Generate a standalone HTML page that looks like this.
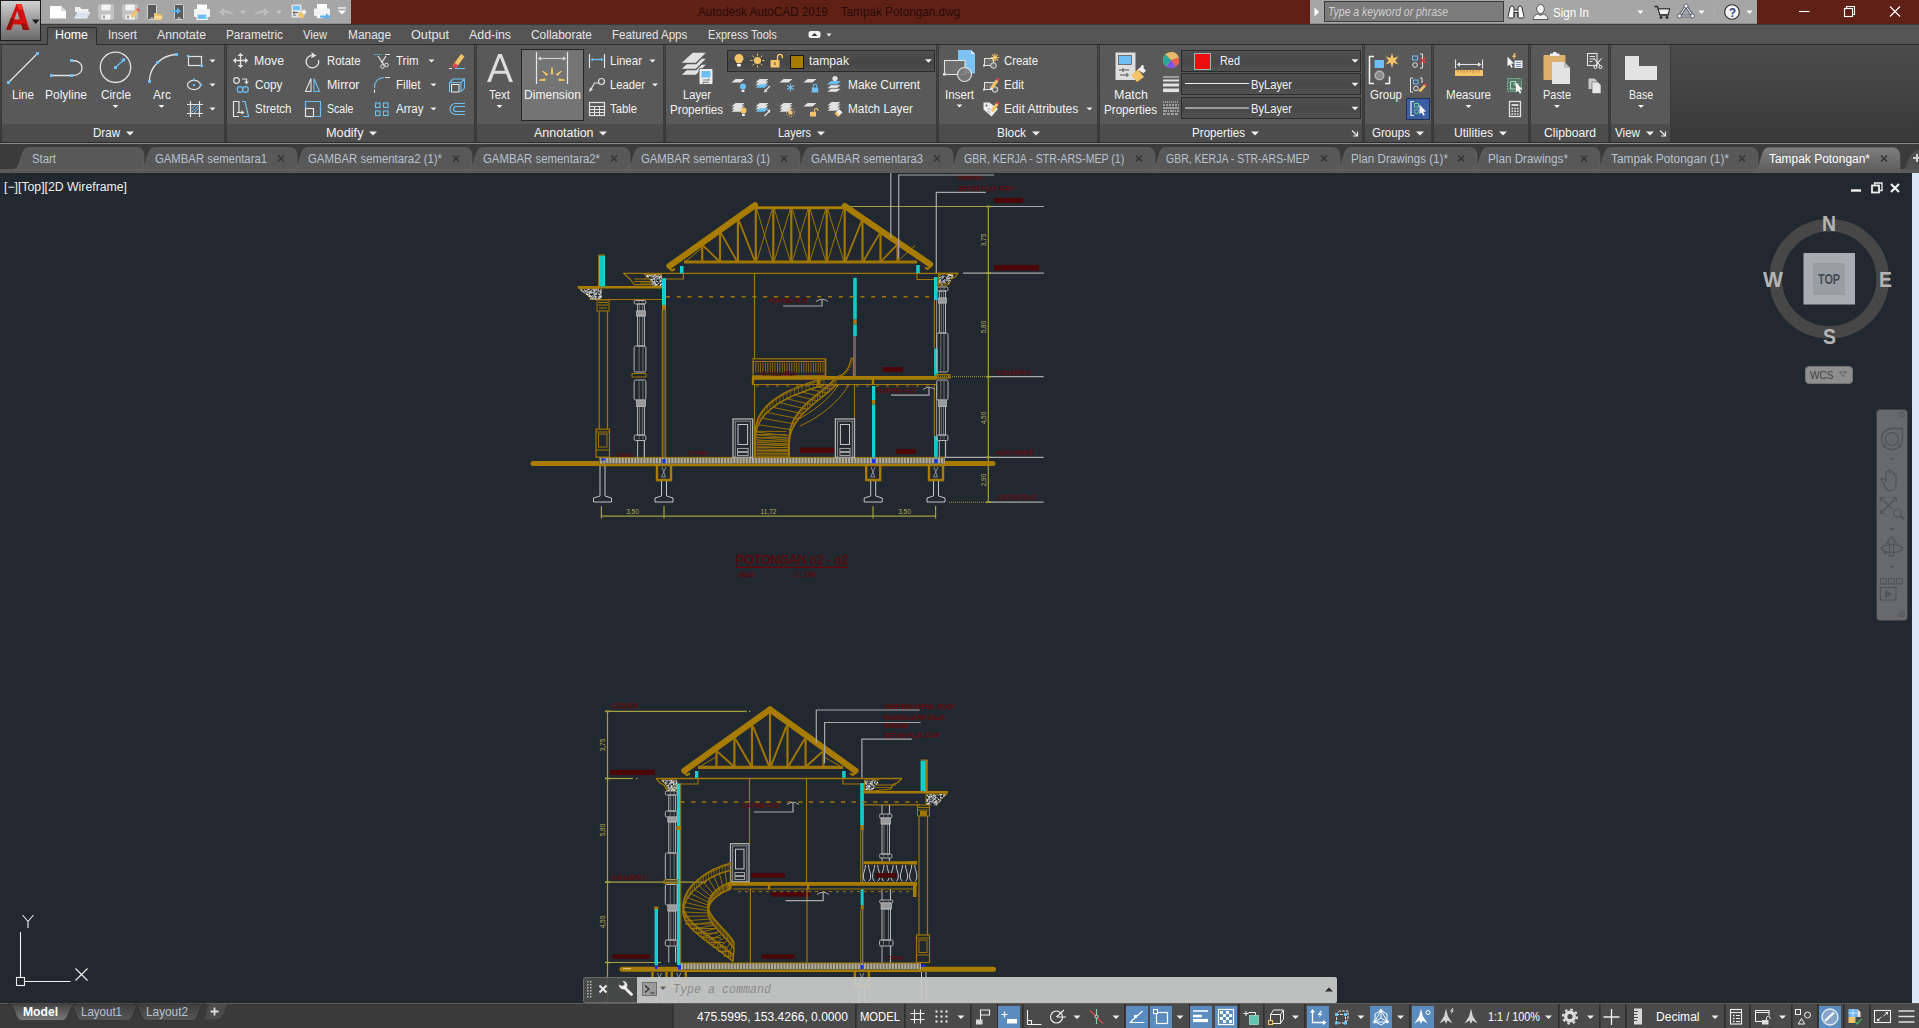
<!DOCTYPE html>
<html lang="en"><head><meta charset="utf-8"><title>Autodesk AutoCAD 2019 - Tampak Potongan.dwg</title>
<style>
html,body{margin:0;padding:0;}
body{width:1919px;height:1028px;overflow:hidden;position:relative;background:#212830;font-family:"Liberation Sans",sans-serif;}
.t{position:absolute;white-space:pre;transform-origin:0 50%;display:block;}

.panel{box-shadow:-1px 0 0 #3a3a3a, 1px 0 0 #3a3a3a;}

</style></head><body>
<div id="titlebar" style="position:absolute;left:0px;top:0px;width:1919px;height:24px;background:#5f2116;">
<div id="qat" style="position:absolute;left:41px;top:0px;width:310px;height:24px;background:#a6a6a6;border-bottom:1px solid #8e8e8e;box-sizing:border-box;">
<svg width="310" height="24" viewBox="41 0 310 24" style="position:absolute;left:0;top:0;overflow:visible">
<path d="M50 6h11l5 5v7.500h-16z" fill="#fdfdfd"/><path d="M61 6v5h5z" fill="#d9d9d9"/>
<path d="M75 7h5l1.500 2h7v3h-13.500z" fill="#f0f0f0"/><path d="M77.500 12h13l-3.500 6.500h-13z" fill="#e8edf6"/><path d="M76 14h13M75 16h13" stroke="#c4cfe6" stroke-width="0.800"/>
<path d="M98 4.500h16v15h-14l-2-2z" fill="#c2c2c2"/><rect x="101.5" y="4.500" width="9" height="6" fill="#f4f4f4"/><rect x="101.5" y="14.500" width="9" height="5" fill="#f4f4f4"/><rect x="103" y="15.500" width="2" height="3" fill="#9a9a9a"/>
<path d="M122 4.500h16v15h-14l-2-2z" fill="#c2c2c2"/><rect x="125.5" y="4.500" width="9" height="6" fill="#f4f4f4"/><rect x="125.5" y="14.500" width="9" height="5" fill="#f4f4f4"/><rect x="127" y="15.500" width="2" height="3" fill="#9a9a9a"/>
<path d="M130 16l6-6.500 2.500 2.300-6 6.500z" fill="#f1c46b"/><path d="M136 9.500l1.500-1.600 2.500 2.300-1.500 1.600z" fill="#e8535a"/><path d="M130 16l-0.800 3.300 3.300-1z" fill="#f4f4f4"/>
<rect x="147.500" y="4.500" width="9" height="15" rx="1" fill="#5a5a5a" stroke="#d0d0d0" stroke-width="1"/><rect x="150.500" y="17.500" width="3" height="1" fill="#eee"/><path d="M154 13h3l1 1.500h4v5h-8z" fill="#f1c46b"/><path d="M155 16h7.500l-1.200 3.500h-7.300z" fill="#f7d893"/>
<rect x="174.500" y="4.500" width="9" height="15" rx="1" fill="#5a5a5a" stroke="#d0d0d0" stroke-width="1"/><rect x="177.500" y="17.500" width="3" height="1" fill="#eee"/><path d="M171 10h6v-2.500l4 3.500-4 3.500v-2.500h-6z" fill="#55b4f0"/>
<rect x="197" y="4.500" width="10" height="5" fill="#fff"/><rect x="194" y="9" width="16" height="8" rx="1" fill="#f4f4f4"/><rect x="197" y="14" width="10" height="5.500" fill="#6cc0f5" stroke="#fff" stroke-width="1"/>
<path d="M218.500 12l5.500-4v2.500c5 0 8.500 1.500 9.500 5-2.500-2-5-2.300-9.500-2.300v2.800z" fill="#bdbdbd"/><path d="M240 10.500h6l-3 3.500z" fill="#c4c4c4"/>
<path d="M269.500 12l-5.500-4v2.500c-5 0-8.500 1.500-9.500 5 2.500-2 5-2.300 9.500-2.300v2.800z" fill="#bdbdbd"/><path d="M276 10.500h6l-3 3.500z" fill="#c4c4c4"/>
<rect x="291.500" y="4.500" width="10" height="13" fill="#e2e2e2"/><rect x="293" y="6" width="7" height="4" fill="#6cc0f5"/><path d="M293 12.500h5M294.500 11.500l-1.500 1 1.500 1M293 15h3" stroke="#444" stroke-width="0.800" fill="none"/><path d="M297.500 14.500l3.500-3 4 4.500-3.500 3z" fill="#f1c46b"/><path d="M301 11.500l2-1.600 1.500-0.500 2 2.500-1 1.500-1.500 1.500z" fill="#f0f0f0"/>
<rect x="317" y="4" width="10" height="5" fill="#fff"/><rect x="314" y="8.500" width="16" height="7.500" rx="1" fill="#f4f4f4"/><rect x="317" y="13.500" width="6" height="4.500" fill="#fff" stroke="#e0e0e0" stroke-width="0.500"/><path d="M320 15.500h6v-2.500l4.500 3.500-4.500 3.500v-2.500h-6z" fill="#55b4f0"/>
<path d="M338 8h8" stroke="#fff" stroke-width="1.200"/><path d="M338 10.500h8l-4 4z" fill="#fff"/>
</svg>
</div>
<div id="infocenter" style="position:absolute;left:1310px;top:0px;width:447px;height:24px;background:#a6a6a6;border-bottom:1px solid #8e8e8e;box-sizing:border-box;">
<div class="" style="position:absolute;left:14px;top:1px;width:180px;height:21px;background:#7b7b7b;border:1px solid #3c3c3c;box-sizing:border-box;"></div>
<svg width="447" height="24" viewBox="1310 0 447 24" style="position:absolute;left:0;top:0;overflow:visible">
<path d="M1314.500 7.500l4.500 4.500-4.500 4.500z" fill="#fff"/>
<path d="M1510 8a2 2 0 0 1 4 0v2h4v-2a2 2 0 0 1 4 0l2 8.500a1 1 0 0 1-1 1.500h-4a1 1 0 0 1-1-1v-4.500h-4v4.500a1 1 0 0 1-1 1h-4a1 1 0 0 1-1-1.500z" fill="#fafafa" stroke="#1e1e1e" stroke-width="0.900"/><path d="M1514 10v7M1518 10v7" stroke="#1e1e1e" stroke-width="0.700"/>
<path d="M1540.500 4.500a3.800 4.500 0 0 1 0 9a3.800 4.500 0 0 1 0-9zM1533 19.500c0-3.500 3-5 5-5.500l2.500 1.500 2.500-1.500c2 0.500 5 2 5 5.500z" fill="#f4f4f4" stroke="#3a3a3a" stroke-width="0.800"/>
<path d="M1637.5 10.5h6l-3 3.500z" fill="#fff"/>
<path d="M1698.5 10.5h6l-3 3.500z" fill="#fff"/>
<path d="M1746.5 10.5h6l-3 3.500z" fill="#fff"/>
<path d="M1654.500 6.500h3l2.500 8.500h8l1.500-6h-11" fill="none" stroke="#2a2a2a" stroke-width="1.300"/><path d="M1659 9.500h10l-1.300 4.500h-7.500z" fill="#f0f0f0"/><circle cx="1661" cy="17.500" r="1.400" fill="#2a2a2a"/><circle cx="1667" cy="17.500" r="1.400" fill="#2a2a2a"/>
<path d="M1686 6l6.500 10h-13z" fill="none" stroke="#3a3f55" stroke-width="2.600" stroke-linejoin="round"/><path d="M1686 6l6.500 10h-13z" fill="none" stroke="#f2f2f2" stroke-width="1.200" stroke-linejoin="round"/><circle cx="1686" cy="6" r="2" fill="#f4f4f4" stroke="#3a3f55" stroke-width="0.700"/><circle cx="1679.500" cy="16" r="2" fill="#f4f4f4" stroke="#3a3f55" stroke-width="0.700"/><circle cx="1692.500" cy="16" r="2" fill="#f4f4f4" stroke="#3a3f55" stroke-width="0.700"/>
<path d="M1714.500 5v14" stroke="#b8b8b8" stroke-width="1" stroke-dasharray="1 2"/>
<circle cx="1732" cy="12" r="7.300" fill="#f6f6f6" stroke="#2a2a2a" stroke-width="1.100"/>
</svg>
<span class="t " style="left:18px;top:5.00px;font-size:12px;line-height:15px;color:#cfcfcf;font-style:italic;transform:scaleX(0.8706);">Type a keyword or phrase</span>
<span class="t " style="left:243px;top:6.00px;font-size:12px;line-height:15px;color:#ffffff;transform:scaleX(0.9636);">Sign In</span>
<span class="t " style="left:418.5px;top:5.00px;font-size:13px;line-height:16px;color:#2b3b86;font-weight:700;transform:scaleX(0.8815);">?</span>
</div>
<div id="winctl" style="position:absolute;left:1757px;top:0px;width:162px;height:24px;">
<svg width="162" height="24" viewBox="1757 0 162 24" style="position:absolute;left:0;top:0;overflow:visible">
<path d="M1799 11.500h10.500" stroke="#fff" stroke-width="1.100"/><rect x="1844.500" y="8.500" width="8" height="8" fill="none" stroke="#fff" stroke-width="1.100"/><path d="M1846.500 8.500v-2h8v8h-2" fill="none" stroke="#fff" stroke-width="1.100"/><path d="M1890 6.500l10 10m0-10l-10 10" stroke="#fff" stroke-width="1.100"/>
</svg>
</div>
<span class="t " style="left:698px;top:5.00px;font-size:12px;line-height:15px;color:#2a0b07;transform:scaleX(0.9783);">Autodesk AutoCAD 2019    Tampak Potongan.dwg</span>
</div>
<div id="menubar" style="position:absolute;left:0px;top:24px;width:1919px;height:21px;background:#545454;">
<div class="" style="position:absolute;left:0px;top:0px;width:1919px;height:1px;background:#3a3a3a;"></div>
<div class="" style="position:absolute;left:0px;top:20px;width:1919px;height:1px;background:#2c2c2c;"></div>
<div class="tab-home" style="position:absolute;left:47px;top:3px;width:50px;height:18px;background:linear-gradient(#505050,#5a5a5a);border:1px solid #2c2c2c;border-bottom:none;box-sizing:border-box;border-radius:2px 2px 0 0;"></div>
<svg width="1919" height="21" viewBox="0 24 1919 21" style="position:absolute;left:0;top:0;overflow:visible">
<rect x="808.500" y="31" width="12" height="7" rx="2.500" fill="#f4f4f4"/><path d="M811.500 36h6l-3-3z" fill="#333"/><path d="M826.500 33.500h5l-2.500 3z" fill="#eee"/>
</svg>
<span class="t " style="left:55px;top:4.00px;font-size:12px;line-height:15px;color:#ffffff;transform:scaleX(1.0309);">Home</span>
<span class="t " style="left:108px;top:4.00px;font-size:12px;line-height:15px;color:#e4e4e4;transform:scaleX(0.9663);">Insert</span>
<span class="t " style="left:157px;top:4.00px;font-size:12px;line-height:15px;color:#e4e4e4;transform:scaleX(1.0200);">Annotate</span>
<span class="t " style="left:226px;top:4.00px;font-size:12px;line-height:15px;color:#e4e4e4;transform:scaleX(0.9825);">Parametric</span>
<span class="t " style="left:303px;top:4.00px;font-size:12px;line-height:15px;color:#e4e4e4;transform:scaleX(0.9305);">View</span>
<span class="t " style="left:348px;top:4.00px;font-size:12px;line-height:15px;color:#e4e4e4;transform:scaleX(0.9916);">Manage</span>
<span class="t " style="left:411px;top:4.00px;font-size:12px;line-height:15px;color:#e4e4e4;transform:scaleX(1.0549);">Output</span>
<span class="t " style="left:469px;top:4.00px;font-size:12px;line-height:15px;color:#e4e4e4;transform:scaleX(1.0323);">Add-ins</span>
<span class="t " style="left:531px;top:4.00px;font-size:12px;line-height:15px;color:#e4e4e4;transform:scaleX(0.9940);">Collaborate</span>
<span class="t " style="left:612px;top:4.00px;font-size:12px;line-height:15px;color:#e4e4e4;transform:scaleX(0.9655);">Featured Apps</span>
<span class="t " style="left:708px;top:4.00px;font-size:12px;line-height:15px;color:#e4e4e4;transform:scaleX(0.9238);">Express Tools</span>
</div>
<div id="appbtn" style="position:absolute;left:0px;top:0px;width:41px;height:41px;background:linear-gradient(#d0d0d0,#a0a0a0 45%,#6a6a6a);border:1px solid #1e1e1e;box-sizing:border-box;">
<svg width="41" height="41" viewBox="0 0 41 41" style="position:absolute;left:0;top:0;overflow:visible">
<path d="M5 29L15.500 3h5L28.500 29h-6.500l-1.800-5.500h-8l-2 5.500zM13.300 18.500h5.500l-2.600-8.500z" fill="#d31010"/><path d="M5 29l5-12.500 3 1.500-3.800 11zM22 29l-1.800-5.500 4-1 4.300 6.500z" fill="#8e1410"/><path d="M15.500 3h5l1.800 5-3.800 1-1.500-2.500z" fill="#f0352a"/>
<path d="M31 18.500h7.500l-3.750 4.500z" fill="#1a1a1a"/>
</svg>
</div>
<div id="ribbon" style="position:absolute;left:0px;top:45px;width:1919px;height:99px;background:linear-gradient(#4b4b4b,#383838);border-bottom:1px solid #8a8a8a;box-sizing:border-box;">
<div class="" style="position:absolute;left:0px;top:96.5px;width:1919px;height:1.5px;background:#2a2a2a;"></div>
<div id="panel-draw" class="panel" style="position:absolute;left:2px;top:0px;width:222px;height:97px;background:#595959;">
<div class="ptitle" style="position:absolute;left:0px;top:79px;width:222px;height:18px;background:#4c4c4c;"></div>
<svg width="222" height="97" viewBox="2 45 222 97" style="position:absolute;left:0;top:0;overflow:visible">
<path d="M126 131.5h8l-4 4z" fill="#f0f0f0"/>
<path d="M112.5 105.0h6l-3 3z" fill="#f0f0f0"/>
<path d="M158.5 105.0h6l-3 3z" fill="#f0f0f0"/>
<path d="M9.5 81.5L37 54" stroke="#e2e2e2" stroke-width="1.3" fill="none"/>
<rect x="7.0" y="81.0" width="3" height="3" fill="#6cc0f5"/>
<rect x="36.0" y="52.0" width="3" height="3" fill="#6cc0f5"/>
<path d="M52 75.5H71 M72 60.5 C79 60.5 82 64 82 68 C82 72 79 75.5 72 75.5" stroke="#e2e2e2" stroke-width="1.3" fill="none"/>
<rect x="50.0" y="74.0" width="3" height="3" fill="#6cc0f5"/>
<rect x="70.0" y="74.0" width="3" height="3" fill="#6cc0f5"/>
<rect x="70.0" y="59.0" width="3" height="3" fill="#6cc0f5"/>
<circle cx="115.5" cy="67.3" r="15.2" stroke="#e2e2e2" stroke-width="1.3" fill="none"/><path d="M116 67L124 59.5" stroke="#6cc0f5" stroke-width="1.3"/><path d="M125.5 58l-4.5 1 3.5 3.5z" fill="#6cc0f5"/>
<rect x="114.0" y="66.0" width="3" height="3" fill="#6cc0f5"/>
<path d="M149.5 80 C150 68 160 56 175 54.5" stroke="#e2e2e2" stroke-width="1.3" fill="none"/>
<rect x="148.0" y="80.0" width="3" height="3" fill="#6cc0f5"/>
<rect x="156.0" y="61.0" width="3" height="3" fill="#6cc0f5"/>
<rect x="175.0" y="53.0" width="3" height="3" fill="#6cc0f5"/>
<rect x="188.5" y="56.5" width="13" height="9" stroke="#e2e2e2" stroke-width="1.2" fill="none"/>
<rect x="186.8" y="54.8" width="2.4" height="2.4" fill="#6cc0f5"/>
<rect x="200.8" y="64.8" width="2.4" height="2.4" fill="#6cc0f5"/>
<path d="M209.5 59.5h6l-3 3z" fill="#f0f0f0"/>
<ellipse cx="194" cy="85" rx="6.5" ry="4.6" stroke="#e2e2e2" stroke-width="1.2" fill="none"/>
<rect x="193.0" y="84.0" width="2" height="2" fill="#6cc0f5"/>
<rect x="193.0" y="78.5" width="2" height="2" fill="#6cc0f5"/>
<rect x="200.0" y="84.0" width="2" height="2" fill="#6cc0f5"/>
<path d="M209.5 83.5h6l-3 3z" fill="#f0f0f0"/>
<path d="M187 104.5h16M187 113.5h16M190.5 101v16M199.5 101v16" stroke="#e2e2e2" stroke-width="1.2"/><path d="M191.5 109l4-4M191.5 112.5l7-7M194 113l5-5" stroke="#6cc0f5" stroke-width="1"/>
<path d="M209.5 107.5h6l-3 3z" fill="#f0f0f0"/>
</svg>
<span class="t " style="left:91px;top:81.00px;font-size:12px;line-height:15px;color:#f4f4f4;transform:scaleX(0.9642);">Draw</span>
<span class="t " style="left:10px;top:43.00px;font-size:12px;line-height:15px;color:#f2f2f2;transform:scaleX(0.9697);">Line</span>
<span class="t " style="left:43px;top:43.00px;font-size:12px;line-height:15px;color:#f2f2f2;transform:scaleX(0.9994);">Polyline</span>
<span class="t " style="left:99px;top:43.00px;font-size:12px;line-height:15px;color:#f2f2f2;transform:scaleX(0.9782);">Circle</span>
<span class="t " style="left:151px;top:43.00px;font-size:12px;line-height:15px;color:#f2f2f2;transform:scaleX(1.0000);">Arc</span>
</div>
<div id="panel-modify" class="panel" style="position:absolute;left:227px;top:0px;width:247px;height:97px;background:#595959;">
<div class="ptitle" style="position:absolute;left:0px;top:79px;width:247px;height:18px;background:#4c4c4c;"></div>
<svg width="247" height="97" viewBox="227 45 247 97" style="position:absolute;left:0;top:0;overflow:visible">
<path d="M369 131.5h8l-4 4z" fill="#f0f0f0"/>
<path d="M428.5 59.5h6l-3 3z" fill="#f0f0f0"/>
<path d="M430.5 83.5h6l-3 3z" fill="#f0f0f0"/>
<path d="M430.5 107.5h6l-3 3z" fill="#f0f0f0"/>
<path d="M233.5 60.5h14M240.5 53.5v14" stroke="#e2e2e2" stroke-width="1.3"/><path d="M233 60.5l3-3v6zM248 60.5l-3-3v6zM240.500 53l-3 3h6zM240.5 68l-3-3h6z" fill="#e2e2e2"/>
<circle cx="236.500" cy="80.500" r="2.800" stroke="#e2e2e2" stroke-width="1.2" fill="none"/><path d="M242 79h4.500v3" stroke="#e2e2e2" stroke-width="1.2" fill="none"/><path d="M246.500 84.500l-2.300-3h4.600z" fill="#e2e2e2"/><circle cx="240" cy="89.500" r="2.800" stroke="#6cc0f5" stroke-width="1.200" fill="none"/><circle cx="245.500" cy="89.500" r="2.800" stroke="#6cc0f5" stroke-width="1.200" fill="none"/>
<path d="M239 116.500h-5.500v-15h5.500v11" stroke="#e2e2e2" stroke-width="1.200" fill="none"/><path d="M242 101.500h3l3.500 15h-6" stroke="#6cc0f5" stroke-width="1.200" fill="none"/><path d="M237 112.500h5" stroke="#e2e2e2" stroke-width="1.200"/><path d="M244.500 112.500l-3-2.300v4.600z" fill="#e2e2e2"/>
<path d="M318.500 60 A6.300 6.300 0 1 1 311.500 55.300" stroke="#e2e2e2" stroke-width="1.300" fill="none"/><path d="M316.500 55.500l-5-3.200v6z" fill="#e2e2e2"/>
<path d="M311 78.500v13h-5.500z" stroke="#e2e2e2" stroke-width="1.100" fill="none"/><path d="M314 78.500v13h5.500z" stroke="#6cc0f5" stroke-width="1.100" fill="none"/>
<path d="M305.500 108v-6.500h15v15h-6" stroke="#6cc0f5" stroke-width="1.200" fill="none"/><rect x="305.500" y="108.500" width="8" height="8" stroke="#e2e2e2" stroke-width="1.200" fill="none"/>
<path d="M374 54.500h8" stroke="#6cc0f5" stroke-width="1" stroke-dasharray="1.500 1"/><path d="M385 54.500h5" stroke="#e2e2e2" stroke-width="1"/><path d="M378 56l6 9M386 56l-4.500 7" stroke="#e2e2e2" stroke-width="1.300"/><circle cx="382.500" cy="66.500" r="1.800" stroke="#e2e2e2" stroke-width="1" fill="none"/><circle cx="386.500" cy="65" r="1.800" stroke="#e2e2e2" stroke-width="1" fill="none"/>
<path d="M374.500 88 C374.500 82 378 78 384 77.500" stroke="#6cc0f5" stroke-width="1.200" fill="none"/><path d="M374.500 89.500v3.500M385 77.500h5" stroke="#e2e2e2" stroke-width="1.100"/>
<rect x="375.5" y="103" width="4.500" height="4.500" stroke="#6cc0f5" stroke-width="1.100" fill="none"/>
<rect x="383.5" y="103" width="4.500" height="4.500" stroke="#6cc0f5" stroke-width="1.100" fill="none"/>
<rect x="375.5" y="111" width="4.500" height="4.500" stroke="#6cc0f5" stroke-width="1.100" fill="none"/>
<rect x="383.5" y="111" width="4.500" height="4.500" stroke="#6cc0f5" stroke-width="1.100" fill="none"/>
<path d="M453 65l8-11 3.500 2.500-8 11z" fill="#f5c469"/><path d="M452 66.500l3-3.500 3 2.300-2.500 3.500z" fill="#e0424a"/><path d="M449 68.500h3" stroke="#e2e2e2" stroke-width="1"/><path d="M455 68.500h10" stroke="#6cc0f5" stroke-width="1"/>
<path d="M449.500 82.500l3.500-3.500h11.500v9l-3.500 4M449.500 82.500h11.500l3.500-3.500M461 82.500v9.500M449.500 82.500v9.500" stroke="#6cc0f5" stroke-width="1.100" fill="none"/><rect x="451.500" y="84.500" width="7.500" height="7.500" stroke="#e2e2e2" stroke-width="1.100" fill="none"/>
<path d="M465 103.500h-9.500a5.500 5.500 0 0 0 0 11h9.500" stroke="#6cc0f5" stroke-width="1.200" fill="none"/><path d="M465 106.500h-9a2.500 2.500 0 0 0 0 5h9" stroke="#6cc0f5" stroke-width="1.200" fill="none"/>
</svg>
<span class="t " style="left:98.5px;top:81.00px;font-size:12px;line-height:15px;color:#f4f4f4;transform:scaleX(1.0610);">Modify</span>
<span class="t " style="left:27px;top:9.00px;font-size:12px;line-height:15px;color:#f2f2f2;transform:scaleX(1.0224);">Move</span>
<span class="t " style="left:99.5px;top:9.00px;font-size:12px;line-height:15px;color:#f2f2f2;transform:scaleX(0.9475);">Rotate</span>
<span class="t " style="left:168.5px;top:9.00px;font-size:12px;line-height:15px;color:#f2f2f2;transform:scaleX(0.9557);">Trim</span>
<span class="t " style="left:27.5px;top:33.00px;font-size:12px;line-height:15px;color:#f2f2f2;transform:scaleX(0.9817);">Copy</span>
<span class="t " style="left:99.5px;top:33.00px;font-size:12px;line-height:15px;color:#f2f2f2;transform:scaleX(1.0375);">Mirror</span>
<span class="t " style="left:168.5px;top:33.00px;font-size:12px;line-height:15px;color:#f2f2f2;transform:scaleX(0.9670);">Fillet</span>
<span class="t " style="left:27.5px;top:57.00px;font-size:12px;line-height:15px;color:#f2f2f2;transform:scaleX(0.9601);">Stretch</span>
<span class="t " style="left:99.5px;top:57.00px;font-size:12px;line-height:15px;color:#f2f2f2;transform:scaleX(0.8828);">Scale</span>
<span class="t " style="left:168.5px;top:57.00px;font-size:12px;line-height:15px;color:#f2f2f2;transform:scaleX(0.9592);">Array</span>
</div>
<div id="panel-annotation" class="panel" style="position:absolute;left:477px;top:0px;width:186px;height:97px;background:#595959;">
<div class="ptitle" style="position:absolute;left:0px;top:79px;width:186px;height:18px;background:#4c4c4c;"></div>
<div class="" style="position:absolute;left:44px;top:4px;width:63px;height:72px;background:#747474;border:1px solid #262626;box-sizing:border-box;"></div>
<svg width="186" height="97" viewBox="477 45 186 97" style="position:absolute;left:0;top:0;overflow:visible">
<path d="M599 131.5h8l-4 4z" fill="#f0f0f0"/>
<path d="M496.5 105.0h6l-3 3z" fill="#f0f0f0"/>
<path d="M649.5 59.5h6l-3 3z" fill="#f0f0f0"/>
<path d="M652 83.5h6l-3 3z" fill="#f0f0f0"/>
<path d="M487 82L498.200 54h3.600L513 82h-3.800l-3.100-8.200h-12.200L490.800 82zM495 70.800h10L500 57.500z" fill="#dcdcdc"/>
<path d="M536.500 52v32M567.500 52v32" stroke="#e6e6e6" stroke-width="1.200"/><path d="M539 58.500h26" stroke="#cfcfcf" stroke-width="1.100"/><path d="M537.500 58.500l3.500-2.200v4.400zM566.500 58.500l-3.500-2.200v4.400z" fill="#cfcfcf"/>
<path d="M551.200 74l0.800-6.500 0.800 6.500zM546.500 75.500l-3.800-4.200 5 3zM557.500 75.500l3.800-4.200-5 3zM545 80.500l-5.500-0.400 5.500-1.200zM559 80.500l5.500-0.400-5.500-1.200z" fill="#f7c667" stroke="#f7c667" stroke-width="1"/>
<path d="M589.500 54v14M604.500 54v14" stroke="#e2e2e2" stroke-width="1.200"/><path d="M591 59.500h12" stroke="#6cc0f5" stroke-width="1.200"/><path d="M590.500 59.500l2.500-1.800v3.600zM603.500 59.500l-2.500-1.800v3.600z" fill="#6cc0f5"/>
<circle cx="601.500" cy="81.500" r="3" stroke="#e2e2e2" stroke-width="1.200" fill="none"/><path d="M598.500 83h-4l-4 7" stroke="#e2e2e2" stroke-width="1.200" fill="none"/><path d="M589 92l1-4.500 3 2z" fill="#e2e2e2"/>
<rect x="589.500" y="102.500" width="15" height="13" stroke="#e2e2e2" stroke-width="1.200" fill="none"/><path d="M589.500 106.500h15M589.500 109.500h15M589.500 112.500h15M594.500 106.500v9M599.500 106.500v9" stroke="#e2e2e2" stroke-width="1"/>
</svg>
<span class="t " style="left:56.5px;top:81.00px;font-size:12px;line-height:15px;color:#f4f4f4;transform:scaleX(1.0369);">Annotation</span>
<span class="t " style="left:12px;top:43.00px;font-size:12px;line-height:15px;color:#f2f2f2;transform:scaleX(0.9542);">Text</span>
<span class="t " style="left:47px;top:43.00px;font-size:12px;line-height:15px;color:#f2f2f2;transform:scaleX(1.0055);">Dimension</span>
<span class="t " style="left:133px;top:9.00px;font-size:12px;line-height:15px;color:#f2f2f2;transform:scaleX(0.9593);">Linear</span>
<span class="t " style="left:133px;top:33.00px;font-size:12px;line-height:15px;color:#f2f2f2;transform:scaleX(0.9367);">Leader</span>
<span class="t " style="left:133px;top:57.00px;font-size:12px;line-height:15px;color:#f2f2f2;transform:scaleX(0.9412);">Table</span>
</div>
<div id="panel-layers" class="panel" style="position:absolute;left:666px;top:0px;width:270px;height:97px;background:#595959;">
<div class="ptitle" style="position:absolute;left:0px;top:79px;width:270px;height:18px;background:#4c4c4c;"></div>
<div class="" style="position:absolute;left:61px;top:5px;width:208px;height:22px;background:linear-gradient(#4f4f4f,#454545 60%,#505050);border:1px solid #2b2b2b;box-sizing:border-box;"></div>
<svg width="270" height="97" viewBox="666 45 270 97" style="position:absolute;left:0;top:0;overflow:visible">
<path d="M817 131.5h8l-4 4z" fill="#f0f0f0"/>
<path d="M925.0 59.25h7.0l-3.5 3.5z" fill="#f0f0f0"/>
<path d="M692.500 64h15l-11.500 11.500h-16z" fill="#e2e2e2" stroke="#595959" stroke-width="1.400"/>
<path d="M692.500 58h15l-11.500 11.500h-16z" fill="#e2e2e2" stroke="#595959" stroke-width="1.400"/>
<path d="M692.500 52h15l-11.500 11.500h-16z" fill="#e2e2e2" stroke="#595959" stroke-width="1.400"/>
<rect x="699" y="68.500" width="14" height="16" rx="1.500" fill="#ededed" stroke="#595959" stroke-width="1"/><rect x="701.500" y="71" width="9" height="6.500" fill="#6cc0f5"/><path d="M703 80h6.500M709.500 80l-1.500-1.300M702.500 82.300h6.500M702.500 82.300l1.500 1.300" stroke="#555" stroke-width="0.800" fill="none"/>
<path d="M734.500 58.500a4.500 4.500 0 1 1 9 0c0 2-1.500 2.800-2 4.500h-5c-0.500-1.700-2-2.500-2-4.500z" fill="#f5c469"/><rect x="737" y="63.800" width="4" height="2.700" rx="1" fill="#f2f2f2"/>
<circle cx="757.500" cy="60.500" r="3.600" fill="#f5c469"/><path d="M757.500 53.500v2.200M757.500 65.300v2.200M750.500 60.500h2.200M762.300 60.500h2.200M752.600 55.600l1.600 1.600M760.800 63.800l1.600 1.600M752.600 65.400l1.600-1.600M760.800 57.200l1.600-1.600" stroke="#f5c469" stroke-width="1"/>
<rect x="770.500" y="60" width="9" height="7.500" fill="#f5c469"/><path d="M777.500 60v-3.200a2.400 2.400 0 0 1 4.800 0v1.500" stroke="#f5c469" stroke-width="1.400" fill="none"/><rect x="774.300" y="62.300" width="1.200" height="2.800" fill="#595959"/>
<rect x="790.500" y="55.500" width="13" height="13" fill="#a67c00" stroke="#141414" stroke-width="1"/>
<path d="M735.5 79.0h9l-4 3.600h-9z" fill="#e2e2e2"/>
<circle cx="743" cy="86.500" r="3" fill="#6cc0f5"/><rect x="741.600" y="89.800" width="2.800" height="2.200" fill="#f0f0f0"/>
<path d="M759.5 79.0h9l-4 3.600h-9z" fill="#e2e2e2"/>
<path d="M759.5 81.6h9l-4 3.600h-9z" fill="#e2e2e2"/>
<path d="M759.5 84.2h9l-4 3.600h-9z" fill="#6cc0f5"/>
<path d="M770 86l-5 5" stroke="#e2e2e2" stroke-width="1.200"/><path d="M764 92.500l0.800-3.500 2.700 2.700z" fill="#e2e2e2"/>
<path d="M783.5 79.0h9l-4 3.600h-9z" fill="#e2e2e2"/>
<path d="M790.500 83.500v8M787 85.500l7 4M794 85.500l-7 4" stroke="#6cc0f5" stroke-width="1.200"/>
<path d="M807.5 79.0h9l-4 3.600h-9z" fill="#e2e2e2"/>
<rect x="811.800" y="87.500" width="6.400" height="5" fill="#6cc0f5"/><path d="M813.300 87.500v-1.500a1.700 1.700 0 0 1 3.400 0v1.500" stroke="#6cc0f5" stroke-width="1.100" fill="none"/>
<circle cx="835" cy="78.500" r="2.600" fill="#e2e2e2"/><path d="M831 81h10l-4 3.600h-10z" fill="#6cc0f5"/><path d="M831 84.800h10l-4 3.600h-10zM831 88.400h10l-4 3.600h-10z" fill="#e2e2e2" stroke="#595959" stroke-width="0.500"/>
<path d="M735.5 103.0h9l-4 3.600h-9z" fill="#e2e2e2"/>
<path d="M735.5 105.6h9l-4 3.600h-9z" fill="#e2e2e2"/>
<path d="M735.5 108.2h9l-4 3.600h-9z" fill="#e2e2e2"/>
<circle cx="743.500" cy="110.500" r="3" fill="#f5c469"/><rect x="742" y="113.800" width="2.800" height="2.200" fill="#f0f0f0"/>
<path d="M759.5 103.0h9l-4 3.600h-9z" fill="#e2e2e2"/>
<path d="M759.5 105.6h9l-4 3.600h-9z" fill="#e2e2e2"/>
<path d="M759.5 108.2h9l-4 3.600h-9z" fill="#6cc0f5"/>
<path d="M764.500 116l5-5" stroke="#e2e2e2" stroke-width="1.200"/><path d="M770.500 109.500l-0.800 3.500-2.700-2.700z" fill="#e2e2e2"/>
<path d="M783.5 103.0h9l-4 3.600h-9z" fill="#e2e2e2"/>
<path d="M783.5 105.6h9l-4 3.600h-9z" fill="#e2e2e2"/>
<path d="M783.5 108.2h9l-4 3.600h-9z" fill="#e2e2e2"/>
<circle cx="790.500" cy="112.500" r="2.200" fill="#f5c469"/><circle cx="790.500" cy="112.500" r="4" stroke="#f5c469" stroke-width="1" stroke-dasharray="1 1.300" fill="none"/>
<path d="M807.5 103.0h9l-4 3.600h-9z" fill="#e2e2e2"/>
<rect x="810" y="111.800" width="6" height="4.700" fill="#f5c469"/><path d="M814.500 111.800v-1.600a1.700 1.700 0 0 1 3.400 0v0.800" stroke="#f5c469" stroke-width="1.100" fill="none"/>
<path d="M831.5 102.0h9l-4 3.600h-9z" fill="#e2e2e2"/>
<path d="M831.5 104.6h9l-4 3.600h-9z" fill="#e2e2e2"/>
<path d="M831.5 107.2h9l-4 3.600h-9z" fill="#e2e2e2"/>
<path d="M836 112l3-3 3.500 3.500-3 3z" fill="#f2f2f2"/><path d="M834.500 113.500l1.800-1.800 3.500 3.500-1.800 1.800z" fill="#f5c469"/>
</svg>
<span class="t " style="left:112px;top:81.00px;font-size:12px;line-height:15px;color:#f4f4f4;transform:scaleX(0.9162);">Layers</span>
<span class="t " style="left:17px;top:43.00px;font-size:12px;line-height:15px;color:#f2f2f2;transform:scaleX(0.9328);">Layer</span>
<span class="t " style="left:4px;top:58.00px;font-size:12px;line-height:15px;color:#f2f2f2;transform:scaleX(0.9691);">Properties</span>
<span class="t " style="left:143px;top:9.00px;font-size:12px;line-height:15px;color:#f2f2f2;transform:scaleX(1.0165);">tampak</span>
<span class="t " style="left:182px;top:33.00px;font-size:12px;line-height:15px;color:#f2f2f2;transform:scaleX(0.9905);">Make Current</span>
<span class="t " style="left:182px;top:57.00px;font-size:12px;line-height:15px;color:#f2f2f2;transform:scaleX(0.9844);">Match Layer</span>
</div>
<div id="panel-block" class="panel" style="position:absolute;left:939px;top:0px;width:158px;height:97px;background:#595959;">
<div class="ptitle" style="position:absolute;left:0px;top:79px;width:158px;height:18px;background:#4c4c4c;"></div>
<svg width="158" height="97" viewBox="939 45 158 97" style="position:absolute;left:0;top:0;overflow:visible">
<path d="M1032 131.5h8l-4 4z" fill="#f0f0f0"/>
<path d="M956.5 104.5h6l-3 3z" fill="#f0f0f0"/>
<path d="M1086.5 107.5h6l-3 3z" fill="#f0f0f0"/>
<path d="M958 50h13l4 4v19.500h-17z" fill="#7cc4f4"/><path d="M971 50v4h4z" fill="#d8ecfa"/>
<rect x="944.500" y="60.500" width="20.500" height="14" fill="#6e6e6e" stroke="#e2e2e2" stroke-width="1.100"/><circle cx="964.500" cy="74.500" r="7" fill="#7a7a7a" fill-opacity="0.850" stroke="#e2e2e2" stroke-width="1.100"/><rect x="943" y="73" width="2.600" height="2.600" fill="#e2e2e2"/>
<rect x="984.500" y="58.500" width="9" height="7" fill="#6e6e6e" stroke="#e2e2e2" stroke-width="1"/><circle cx="993.500" cy="65.500" r="2.800" fill="#6e6e6e" stroke="#e2e2e2" stroke-width="1"/><rect x="983" y="64.500" width="2" height="2" fill="#e2e2e2"/>
<path d="M995 53.500v8M991 57.500h8M992.200 54.700l5.600 5.600M997.800 54.700l-5.600 5.600" stroke="#f5c469" stroke-width="1.100"/>
<rect x="984.500" y="82.500" width="9" height="7" fill="#6e6e6e" stroke="#e2e2e2" stroke-width="1"/><circle cx="995" cy="89.500" r="2.800" fill="#6e6e6e" stroke="#e2e2e2" stroke-width="1"/><rect x="983" y="88.500" width="2" height="2" fill="#e2e2e2"/>
<path d="M990.500 87l5.500-7.500 2.500 1.800-5.500 7.500z" fill="#f5c469"/><path d="M996 79.500l1.200-1.700 2.500 1.800-1.200 1.700z" fill="#e0424a"/><path d="M990.500 87l-0.500 3 3-1.200z" fill="#f0f0f0"/>
<path d="M983.500 102.500h6l8.500 6.500-6.500 7.500-8-7z" fill="#ececec"/><circle cx="986.500" cy="105.500" r="1" fill="#595959"/><path d="M988 108.500l2 1M987.500 111l3 2" stroke="#6a89c9" stroke-width="0.800"/>
<path d="M990.500 110.500l5.500-7.500 2.500 1.800-5.500 7.500z" fill="#f5c469"/><path d="M996 103l1.200-1.700 2.500 1.800-1.200 1.700z" fill="#e0424a"/><path d="M990.500 110.500l-0.500 3 3-1.200z" fill="#f0f0f0"/>
</svg>
<span class="t " style="left:58px;top:81.00px;font-size:12px;line-height:15px;color:#f4f4f4;transform:scaleX(0.9883);">Block</span>
<span class="t " style="left:6px;top:43.00px;font-size:12px;line-height:15px;color:#f2f2f2;transform:scaleX(0.9663);">Insert</span>
<span class="t " style="left:65px;top:9.00px;font-size:12px;line-height:15px;color:#f2f2f2;transform:scaleX(0.9440);">Create</span>
<span class="t " style="left:65px;top:33.00px;font-size:12px;line-height:15px;color:#f2f2f2;transform:scaleX(0.9672);">Edit</span>
<span class="t " style="left:65px;top:57.00px;font-size:12px;line-height:15px;color:#f2f2f2;transform:scaleX(1.0040);">Edit Attributes</span>
</div>
<div id="panel-properties" class="panel" style="position:absolute;left:1100px;top:0px;width:262px;height:97px;background:#595959;">
<div class="ptitle" style="position:absolute;left:0px;top:79px;width:262px;height:18px;background:#4c4c4c;"></div>
<div class="" style="position:absolute;left:81px;top:5px;width:180px;height:22px;background:linear-gradient(#505050,#474747 55%,#525252);border:1px solid #2b2b2b;box-sizing:border-box;"></div>
<div class="" style="position:absolute;left:81px;top:28px;width:180px;height:22px;background:linear-gradient(#505050,#474747 55%,#525252);border:1px solid #2b2b2b;box-sizing:border-box;"></div>
<div class="" style="position:absolute;left:81px;top:52px;width:180px;height:22px;background:linear-gradient(#505050,#474747 55%,#525252);border:1px solid #2b2b2b;box-sizing:border-box;"></div>
<div class="" style="position:absolute;left:94px;top:8px;width:17px;height:17px;background:#ee0d0d;border:1px solid #9fb2b8;box-sizing:border-box;"></div>
<svg width="262" height="97" viewBox="1100 45 262 97" style="position:absolute;left:0;top:0;overflow:visible">
<path d="M1251 131.5h8l-4 4z" fill="#f0f0f0"/>
<path d="M1185 83.500h64M1185 108h64" stroke="#f0f0f0" stroke-width="1"/>
<path d="M1351.5 59.25h7.0l-3.5 3.5z" fill="#f0f0f0"/>
<path d="M1351.5 82.75h7.0l-3.5 3.5z" fill="#f0f0f0"/>
<path d="M1351.5 106.75h7.0l-3.5 3.5z" fill="#f0f0f0"/>
<path d="M1352 130.500l5 5M1357.500 131.500v4.500h-4.500" stroke="#e8e8e8" stroke-width="1.200" fill="none"/>
<rect x="1115.500" y="52.500" width="20" height="27.500" fill="#dedede"/><rect x="1118.500" y="55.500" width="13" height="9" fill="#6cc0f5" stroke="#5a5a5a" stroke-width="0.800"/><path d="M1119 70h10M1120 75h9M1123 68v4M1127 73v4" stroke="#555" stroke-width="1"/>
<path d="M1131 75l7-5.500 6 7.500-7 5z" fill="#f5c469"/><path d="M1137.500 69.500l3-2.300 1.300-2.200 2 0.500-0.300 2.500 2.500 2.800-2.500 2.500z" fill="#f0f0f0"/>
<circle cx="1171" cy="60" r="8" fill="#e9b96e"/><path d="M1171 60L1171 52A8 8 0 0 1 1178.600 57.500z" fill="#e9b96e"/><path d="M1171 60l7.600-2.500A8 8 0 0 1 1175.700 66.500z" fill="#e95c4f"/><path d="M1171 60l4.700 6.500A8 8 0 0 1 1166.300 66.500z" fill="#7c53e6"/><path d="M1171 60l-4.700 6.500A8 8 0 0 1 1165.500 54.200z" fill="#2aa79a"/>
<path d="M1163 77h16" stroke="#e2e2e2" stroke-width="1"/><path d="M1163 80.500h16" stroke="#e2e2e2" stroke-width="2"/><path d="M1163 85h16" stroke="#e2e2e2" stroke-width="3"/><path d="M1163 90.300h16" stroke="#e2e2e2" stroke-width="3.600"/>
<path d="M1163 102h16" stroke="#e2e2e2" stroke-width="1" stroke-dasharray="1 1"/><path d="M1163 105h16" stroke="#e2e2e2" stroke-width="1" stroke-dasharray="2 1"/><path d="M1163 108h16" stroke="#e2e2e2" stroke-width="1"/><path d="M1163 111h16" stroke="#e2e2e2" stroke-width="1" stroke-dasharray="4 1 1 1"/><path d="M1163 114h16" stroke="#e2e2e2" stroke-width="1" stroke-dasharray="3 1"/>
</svg>
<span class="t " style="left:92px;top:81.00px;font-size:12px;line-height:15px;color:#f4f4f4;transform:scaleX(0.9691);">Properties</span>
<span class="t " style="left:14px;top:43.00px;font-size:12px;line-height:15px;color:#f2f2f2;transform:scaleX(1.0405);">Match</span>
<span class="t " style="left:4px;top:58.00px;font-size:12px;line-height:15px;color:#f2f2f2;transform:scaleX(0.9691);">Properties</span>
<span class="t " style="left:120px;top:9.00px;font-size:12px;line-height:15px;color:#f2f2f2;transform:scaleX(0.9085);">Red</span>
<span class="t " style="left:151px;top:33.00px;font-size:12px;line-height:15px;color:#f2f2f2;transform:scaleX(0.9314);">ByLayer</span>
<span class="t " style="left:151px;top:57.00px;font-size:12px;line-height:15px;color:#f2f2f2;transform:scaleX(0.9314);">ByLayer</span>
</div>
<div id="panel-groups" class="panel" style="position:absolute;left:1365px;top:0px;width:66px;height:97px;background:#595959;">
<div class="ptitle" style="position:absolute;left:0px;top:79px;width:66px;height:18px;background:#4c4c4c;"></div>
<div class="" style="position:absolute;left:41px;top:53px;width:24px;height:22px;background:#3b5ea3;border:1px solid #22305a;box-sizing:border-box;"></div>
<svg width="66" height="97" viewBox="1365 45 66 97" style="position:absolute;left:0;top:0;overflow:visible">
<path d="M1416 131.5h8l-4 4z" fill="#f0f0f0"/>
<path d="M1374 56.500h-4.500v27h4.500M1385 83.500h4.500v-7" stroke="#f0f0f0" stroke-width="1.600" fill="none"/><rect x="1374.500" y="60" width="9.500" height="8" rx="1" fill="#6cc0f5"/><circle cx="1379.500" cy="75.500" r="4.300" fill="#8b8b8b" stroke="#b5b5b5" stroke-width="1.500"/>
<path d="M1392 53l1.600 5 5-1.600-3.400 4 3.400 4-5-1.600-1.600 5-1.600-5-5 1.600 3.400-4-3.400-4 5 1.600z" fill="#f5c469"/>
<rect x="1412.500" y="56" width="5" height="4" fill="none" stroke="#6cc0f5" stroke-width="1"/><circle cx="1415" cy="65" r="2.300" fill="none" stroke="#e2e2e2" stroke-width="1"/><path d="M1420 54h2.500v14h-2.500" stroke="#e2e2e2" stroke-width="1" fill="none"/><path d="M1420.500 58l5 5m0-5l-5 5" stroke="#ee3b3b" stroke-width="1.600"/>
<path d="M1413 78h-2.500v14h2.500" stroke="#e2e2e2" stroke-width="1" fill="none"/><rect x="1413.500" y="80" width="4.500" height="4" fill="none" stroke="#6cc0f5" stroke-width="1"/><circle cx="1416" cy="88.500" r="2.300" fill="none" stroke="#e2e2e2" stroke-width="1"/><path d="M1420 78h2v5" stroke="#e2e2e2" stroke-width="1" fill="none"/><path d="M1418.500 90.500l5.500-6 2 1.800-5.500 6z" fill="#f5c469"/><path d="M1424 84.500l1.200-1.300 2 1.800-1.200 1.300z" fill="#e0424a"/>
<path d="M1414 101.500h-3v14h3" stroke="#f0f0f0" stroke-width="1.200" fill="none"/><rect x="1414.500" y="103.500" width="4" height="3.500" fill="none" stroke="#6fd07f" stroke-width="1"/><circle cx="1416.500" cy="111.500" r="2" fill="none" stroke="#6fd07f" stroke-width="1"/><path d="M1419.500 104.500l6.500 7-2.800 0.300 1.600 3.200-1.500 0.700-1.600-3.300-2.200 1.800z" fill="#f4f4f4"/>
</svg>
<span class="t " style="left:7px;top:81.00px;font-size:12px;line-height:15px;color:#f4f4f4;transform:scaleX(0.9657);">Groups</span>
<span class="t " style="left:4.5px;top:43.00px;font-size:12px;line-height:15px;color:#f2f2f2;transform:scaleX(0.9595);">Group</span>
</div>
<div id="panel-utilities" class="panel" style="position:absolute;left:1434px;top:0px;width:94px;height:97px;background:#595959;">
<div class="ptitle" style="position:absolute;left:0px;top:79px;width:94px;height:18px;background:#4c4c4c;"></div>
<svg width="94" height="97" viewBox="1434 45 94 97" style="position:absolute;left:0;top:0;overflow:visible">
<path d="M1499 131.5h8l-4 4z" fill="#f0f0f0"/>
<path d="M1465.5 105.0h6l-3 3z" fill="#f0f0f0"/>
<path d="M1455.500 59.500v9M1482.500 59.500v9" stroke="#e2e2e2" stroke-width="1.100"/><path d="M1458 64.500h22" stroke="#e2e2e2" stroke-width="1.100"/><path d="M1456.500 64.500l3.500-2.200v4.400zM1481.500 64.500l-3.500-2.200v4.400z" fill="#e2e2e2"/><rect x="1455" y="70" width="28" height="6" fill="#f5c469"/><path d="M1458 70v2.500M1461 70v2.500M1464 70v3.500M1467 70v2.500M1470 70v2.500M1473 70v3.500M1476 70v2.500M1479 70v2.500" stroke="#a9822f" stroke-width="0.900"/>
<path d="M1507.500 56.500l6.500 7-2.800 0.300 1.600 3.200-1.500 0.700-1.600-3.300-2.200 1.800z" fill="#f4f4f4"/><rect x="1514.500" y="60.500" width="8" height="7.500" fill="#f0f0f0"/><path d="M1516 62.500h5M1516 64.500h5M1516 66.500h5" stroke="#5b83c7" stroke-width="0.900"/><path d="M1514.500 53l-2.500 4h2l-1 3 3.500-4.500h-2l1.500-2.500z" fill="#f5c469"/>
<rect x="1507.500" y="78.500" width="14" height="13" rx="1" fill="#5d8f78" fill-opacity="0.500" stroke="#7bc79e" stroke-width="1" stroke-dasharray="1.500 1"/><path d="M1510.500 81.500h5v5M1513 84h5v5h-7.500v-7.500" stroke="#9fd8b8" stroke-width="1.200" fill="none"/><path d="M1516 82.500l6.500 7-2.800 0.300 1.600 3.200-1.500 0.700-1.600-3.300-2.200 1.800z" fill="#f4f4f4"/>
<rect x="1509.500" y="101.500" width="11" height="15" fill="none" stroke="#e2e2e2" stroke-width="1.300"/><path d="M1511.500 105h7" stroke="#e2e2e2" stroke-width="1.800"/><path d="M1511.500 108.500h7M1511.500 111.300h7M1511.500 114h7" stroke="#e2e2e2" stroke-width="1.500" stroke-dasharray="1.700 1"/>
</svg>
<span class="t " style="left:20px;top:81.00px;font-size:12px;line-height:15px;color:#f4f4f4;transform:scaleX(1.0085);">Utilities</span>
<span class="t " style="left:12px;top:43.00px;font-size:12px;line-height:15px;color:#f2f2f2;transform:scaleX(0.9639);">Measure</span>
</div>
<div id="panel-clipboard" class="panel" style="position:absolute;left:1531px;top:0px;width:77px;height:97px;background:#595959;">
<div class="ptitle" style="position:absolute;left:0px;top:79px;width:77px;height:18px;background:#4c4c4c;"></div>
<svg width="77" height="97" viewBox="1531 45 77 97" style="position:absolute;left:0;top:0;overflow:visible">
<path d="M1554 105.0h6l-3 3z" fill="#f0f0f0"/>
<rect x="1543.500" y="55" width="22" height="25" rx="1" fill="#dfb06d"/><path d="M1550 55v-1.500h3v-1.500h3.500v1.500h3v2.500h-9.500z" fill="#f0f0f0"/><path d="M1552 62h12l6 6v16h-18z" fill="#e3e3e3"/><path d="M1564 62v6h6z" fill="#bdbdbd"/>
<rect x="1587.500" y="53.500" width="9.500" height="12" fill="none" stroke="#e2e2e2" stroke-width="1.100"/><path d="M1589.500 56.500h5.500M1589.500 59h5.500M1589.500 61.500h3" stroke="#e2e2e2" stroke-width="1"/><path d="M1594 58.500l6.500 7.500M1601.500 58.500l-6.500 7.500" stroke="#f0f0f0" stroke-width="1.100"/><circle cx="1595.500" cy="67" r="1.500" fill="none" stroke="#f0f0f0" stroke-width="1"/><circle cx="1600.500" cy="67" r="1.500" fill="none" stroke="#f0f0f0" stroke-width="1"/>
<path d="M1588.500 78.500h6l2.500 2.500v8h-8.500z" fill="#c9c9c9"/><path d="M1592 82h6l3 3v8.500h-9z" fill="#e6e6e6" stroke="#595959" stroke-width="0.600"/>
</svg>
<span class="t " style="left:13px;top:81.00px;font-size:12px;line-height:15px;color:#f4f4f4;transform:scaleX(1.0124);">Clipboard</span>
<span class="t " style="left:12px;top:43.00px;font-size:12px;line-height:15px;color:#f2f2f2;transform:scaleX(0.9125);">Paste</span>
</div>
<div id="panel-view" class="panel" style="position:absolute;left:1611px;top:0px;width:59px;height:97px;background:#595959;">
<div class="ptitle" style="position:absolute;left:0px;top:79px;width:59px;height:18px;background:#4c4c4c;"></div>
<svg width="59" height="97" viewBox="1611 45 59 97" style="position:absolute;left:0;top:0;overflow:visible">
<path d="M1646 131.5h8l-4 4z" fill="#f0f0f0"/>
<path d="M1638 105.0h6l-3 3z" fill="#f0f0f0"/>
<path d="M1625 56h14v10h18v14h-32z" fill="#e3e3e3"/>
<path d="M1660 130.500l5 5M1665.500 131.500v4.500h-4.500" stroke="#e8e8e8" stroke-width="1.200" fill="none"/>
</svg>
<span class="t " style="left:4px;top:81.00px;font-size:12px;line-height:15px;color:#f4f4f4;transform:scaleX(0.9693);">View</span>
<span class="t " style="left:18px;top:43.00px;font-size:12px;line-height:15px;color:#f2f2f2;transform:scaleX(0.8775);">Base</span>
</div>
</div>
<div id="filetabs" style="position:absolute;left:0px;top:144px;width:1919px;height:29px;background:#3b3b3b;">
<div class="" style="position:absolute;left:0px;top:25px;width:1919px;height:4px;background:#5a5a5a;"></div>
<svg width="0" height="0" style="position:absolute"><defs><linearGradient id="ga" x1="0" y1="0" x2="0" y2="1"><stop offset="0" stop-color="#7e7e7e"/><stop offset="1" stop-color="#5c5c5c"/></linearGradient></defs></svg>
<svg width="1919" height="29" viewBox="0 144 1919 29" style="position:absolute;left:0;top:0;overflow:visible">
<path d="M13 169.5 C18 169.5 19 164 21 158 C23 151.500 24 147.500 29 147.500 H136 C141 147.500 144 150 144 156 V169.5 Z" fill="#585858" stroke="#6a6a6a" stroke-width="0.500"/>
<path d="M139 169.5 C144 169.5 145 164 147 158 C149 151.500 150 147.500 155 147.500 H289 C294 147.500 297 150 297 156 V169.5 Z" fill="#585858" stroke="#6a6a6a" stroke-width="0.500"/>
<path d="M278 155.5l6 6m0 -6l-6 6" stroke="#363636" stroke-width="1.6" fill="none"/>
<path d="M292 169.5 C297 169.5 298 164 300 158 C302 151.500 303 147.500 308 147.500 H464 C469 147.500 472 150 472 156 V169.5 Z" fill="#585858" stroke="#6a6a6a" stroke-width="0.500"/>
<path d="M453 155.5l6 6m0 -6l-6 6" stroke="#363636" stroke-width="1.6" fill="none"/>
<path d="M467 169.5 C472 169.5 473 164 475 158 C477 151.500 478 147.500 483 147.500 H622 C627 147.500 630 150 630 156 V169.5 Z" fill="#585858" stroke="#6a6a6a" stroke-width="0.500"/>
<path d="M611 155.5l6 6m0 -6l-6 6" stroke="#363636" stroke-width="1.6" fill="none"/>
<path d="M625 169.5 C630 169.5 631 164 633 158 C635 151.500 636 147.500 641 147.500 H792 C797 147.500 800 150 800 156 V169.5 Z" fill="#585858" stroke="#6a6a6a" stroke-width="0.500"/>
<path d="M781 155.5l6 6m0 -6l-6 6" stroke="#363636" stroke-width="1.6" fill="none"/>
<path d="M795 169.5 C800 169.5 801 164 803 158 C805 151.500 806 147.500 811 147.500 H945 C950 147.500 953 150 953 156 V169.5 Z" fill="#585858" stroke="#6a6a6a" stroke-width="0.500"/>
<path d="M934 155.5l6 6m0 -6l-6 6" stroke="#363636" stroke-width="1.6" fill="none"/>
<path d="M948 169.5 C953 169.5 954 164 956 158 C958 151.500 959 147.500 964 147.500 H1147 C1152 147.500 1155 150 1155 156 V169.5 Z" fill="#585858" stroke="#6a6a6a" stroke-width="0.500"/>
<path d="M1136 155.5l6 6m0 -6l-6 6" stroke="#363636" stroke-width="1.6" fill="none"/>
<path d="M1150 169.5 C1155 169.5 1156 164 1158 158 C1160 151.500 1161 147.500 1166 147.500 H1332 C1337 147.500 1340 150 1340 156 V169.5 Z" fill="#585858" stroke="#6a6a6a" stroke-width="0.500"/>
<path d="M1321 155.5l6 6m0 -6l-6 6" stroke="#363636" stroke-width="1.6" fill="none"/>
<path d="M1335 169.5 C1340 169.5 1341 164 1343 158 C1345 151.500 1346 147.500 1351 147.500 H1469 C1474 147.500 1477 150 1477 156 V169.5 Z" fill="#585858" stroke="#6a6a6a" stroke-width="0.500"/>
<path d="M1458 155.5l6 6m0 -6l-6 6" stroke="#363636" stroke-width="1.6" fill="none"/>
<path d="M1472 169.5 C1477 169.5 1478 164 1480 158 C1482 151.500 1483 147.500 1488 147.500 H1592 C1597 147.500 1600 150 1600 156 V169.5 Z" fill="#585858" stroke="#6a6a6a" stroke-width="0.500"/>
<path d="M1581 155.5l6 6m0 -6l-6 6" stroke="#363636" stroke-width="1.6" fill="none"/>
<path d="M1595 169.5 C1600 169.5 1601 164 1603 158 C1605 151.500 1606 147.500 1611 147.500 H1750 C1755 147.500 1758 150 1758 156 V169.5 Z" fill="#585858" stroke="#6a6a6a" stroke-width="0.500"/>
<path d="M1739 155.5l6 6m0 -6l-6 6" stroke="#363636" stroke-width="1.6" fill="none"/>
<path d="M1753 173 C1758 173 1759 164 1761 158 C1763 151.500 1764 147.500 1769 147.500 H1892 C1897 147.500 1900 150 1900 156 V173 Z" fill="url(#ga)" stroke="#6a6a6a" stroke-width="0.500"/>
<path d="M1881 155.5l6 6m0 -6l-6 6" stroke="#363636" stroke-width="1.6" fill="none"/>
<path d="M1903 169.5 C1908 169 1908 150 1919 150 V169.5Z" fill="#505050"/><path d="M1913 158h6M1917 154v8" stroke="#d0d0d0" stroke-width="2"/>
</svg>
<span class="t " style="left:32px;top:8.00px;font-size:12px;line-height:15px;color:#b7c2cf;transform:scaleX(0.9471);">Start</span>
<span class="t " style="left:155px;top:8.00px;font-size:12px;line-height:15px;color:#b7c2cf;transform:scaleX(0.9435);">GAMBAR sementara1</span>
<span class="t " style="left:308px;top:8.00px;font-size:12px;line-height:15px;color:#b7c2cf;transform:scaleX(0.9478);">GAMBAR sementara2 (1)*</span>
<span class="t " style="left:483px;top:8.00px;font-size:12px;line-height:15px;color:#b7c2cf;transform:scaleX(0.9483);">GAMBAR sementara2*</span>
<span class="t " style="left:641px;top:8.00px;font-size:12px;line-height:15px;color:#b7c2cf;transform:scaleX(0.9436);">GAMBAR sementara3 (1)</span>
<span class="t " style="left:811px;top:8.00px;font-size:12px;line-height:15px;color:#b7c2cf;transform:scaleX(0.9435);">GAMBAR sementara3</span>
<span class="t " style="left:964px;top:8.00px;font-size:12px;line-height:15px;color:#b7c2cf;transform:scaleX(0.8813);">GBR, KERJA - STR-ARS-MEP (1)</span>
<span class="t " style="left:1166px;top:8.00px;font-size:12px;line-height:15px;color:#b7c2cf;transform:scaleX(0.8744);">GBR, KERJA - STR-ARS-MEP</span>
<span class="t " style="left:1351px;top:8.00px;font-size:12px;line-height:15px;color:#b7c2cf;transform:scaleX(0.9696);">Plan Drawings (1)*</span>
<span class="t " style="left:1488px;top:8.00px;font-size:12px;line-height:15px;color:#b7c2cf;transform:scaleX(0.9752);">Plan Drawings*</span>
<span class="t " style="left:1611px;top:8.00px;font-size:12px;line-height:15px;color:#b7c2cf;transform:scaleX(0.9883);">Tampak Potongan (1)*</span>
<span class="t " style="left:1769px;top:8.00px;font-size:12px;line-height:15px;color:#ffffff;transform:scaleX(0.9960);">Tampak Potongan*</span>
</div>
<div id="canvas" style="position:absolute;left:0px;top:173px;width:1919px;height:830px;background:#212830;overflow:hidden;">
<div class="" style="position:absolute;left:1912px;top:0px;width:7px;height:830px;background:#dae6f3;"></div>
<div class="" style="position:absolute;left:1805px;top:193px;width:48px;height:18px;background:#8e8e8e;border:1px solid #737373;border-radius:4px;box-sizing:border-box;"></div>
<div class="" style="position:absolute;left:1876px;top:236px;width:32px;height:211.5px;background:#67696b;border:1px solid #3f4245;border-radius:4px;box-sizing:border-box;"></div>
<svg width="1919" height="830" viewBox="0 173 1919 830" style="position:absolute;left:0;top:0;overflow:visible">
<g fill="none" font-family="Liberation Sans, sans-serif"><path d="M845 206.5L988.3 206.5" stroke="#a59f3f" stroke-width="1" />
<path d="M990 206.5L1044 206.5" stroke="#a9a9a9" stroke-width="1.2" />
<path d="M988.3 206.5L988.3 502.2" stroke="#a59f3f" stroke-width="1.2" />
<path d="M963 273.2L1044 273.2" stroke="#a9a9a9" stroke-width="1.2" />
<path d="M938 376.7L988.3 376.7" stroke="#a59f3f" stroke-width="1" stroke-dasharray="1 1"/>
<path d="M988.3 376.7L1043.6 376.7" stroke="#a9a9a9" stroke-width="1.2" />
<path d="M939 457.4L1043.6 457.4" stroke="#a9a9a9" stroke-width="1.2" />
<path d="M949 502.2L988 502.2" stroke="#a59f3f" stroke-width="1" stroke-dasharray="1 1"/>
<path d="M988 502.2L1043.6 502.2" stroke="#a9a9a9" stroke-width="1.2" />
<path d="M986 206.5L991 206.5" stroke="#a59f3f" stroke-width="1.6" />
<path d="M986 273.2L991 273.2" stroke="#a59f3f" stroke-width="1.6" />
<path d="M986 376.7L991 376.7" stroke="#a59f3f" stroke-width="1.6" />
<path d="M986 457.4L991 457.4" stroke="#a59f3f" stroke-width="1.6" />
<path d="M986 502.2L991 502.2" stroke="#a59f3f" stroke-width="1.6" />
<path d="M601.4 516.2L936 516.2" stroke="#a59f3f" stroke-width="1.2" />
<path d="M601.4 506L601.4 518.5" stroke="#a59f3f" stroke-width="1.2" />
<path d="M664 506L664 518.5" stroke="#a59f3f" stroke-width="1.2" />
<path d="M873 506L873 518.5" stroke="#a59f3f" stroke-width="1.2" />
<path d="M935.6 506L935.6 518.5" stroke="#a59f3f" stroke-width="1.2" />
<text x="632.5" y="514" font-size="6.5" fill="#b5af55" font-weight="400" text-anchor="middle">3,50</text>
<text x="768.5" y="514" font-size="6.5" fill="#b5af55" font-weight="400" text-anchor="middle">11,72</text>
<text x="904.5" y="514" font-size="6.5" fill="#b5af55" font-weight="400" text-anchor="middle">3,50</text>
<text x="985.5" y="240" font-size="6.5" fill="#b5af55" font-weight="400" text-anchor="middle" transform="rotate(-90 985.5 240)">3,75</text>
<text x="985.5" y="327" font-size="6.5" fill="#b5af55" font-weight="400" text-anchor="middle" transform="rotate(-90 985.5 327)">5,80</text>
<text x="985.5" y="418" font-size="6.5" fill="#b5af55" font-weight="400" text-anchor="middle" transform="rotate(-90 985.5 418)">4,50</text>
<text x="985.5" y="480" font-size="6.5" fill="#b5af55" font-weight="400" text-anchor="middle" transform="rotate(-90 985.5 480)">2,90</text>
<text x="958" y="179.5" font-size="7" fill="#64090d" font-weight="700" text-anchor="start" textLength="24" lengthAdjust="spacingAndGlyphs">RINGAN</text>
<text x="958" y="190.5" font-size="7" fill="#64090d" font-weight="700" text-anchor="start" textLength="56" lengthAdjust="spacingAndGlyphs">BETON PLAT ATAP</text>
<rect x="994" y="198" width="29" height="5" fill="#4a0609" stroke="none" stroke-width="1"/>
<rect x="994" y="265" width="45" height="5.5" fill="#4a0609" stroke="none" stroke-width="1"/>
<rect x="882" y="367" width="21" height="5" fill="#4a0609" stroke="none" stroke-width="1"/>
<rect x="800" y="447.5" width="34" height="5.5" fill="#4a0609" stroke="none" stroke-width="1"/>
<rect x="896.3" y="449" width="19.5" height="5" fill="#4a0609" stroke="none" stroke-width="1"/>
<path d="M533 463.5L600 463.5" stroke="#a87c00" stroke-width="5" stroke-linecap="round"/>
<path d="M945 463.5L993 463.5" stroke="#a87c00" stroke-width="5" stroke-linecap="round"/>
<path d="M599 465L945 465" stroke="#a87c00" stroke-width="2.6" />
<rect x="599" y="457.4" width="346" height="6.1" fill="#aeaca0" stroke="none" stroke-width="1"/>
<path d="M599 460.45H945" stroke="#6f6647" stroke-width="6.1" stroke-dasharray="1.100 2"/>
<path d="M599 457.4L945 457.4" stroke="#a07600" stroke-width="1" />
<path d="M600 466L600 496L593.5 498L593.5 502L611.5 502L611.5 498L605 496L605 466" stroke="#c4c4c4" stroke-width="1" fill="none" />
<path d="M657 466L657 480L671 480L671 466" stroke="#a87c00" stroke-width="2.4" fill="none" />
<path d="M662 467L665.5 477L661.5 477L666 467" stroke="#a9a9a9" stroke-width="0.8" fill="none" />
<path d="M661.5 481L661.5 496L655 498L655 502L673 502L673 498L666.5 496L666.5 481" stroke="#c4c4c4" stroke-width="1" fill="none" />
<path d="M866.2 466L866.2 480L880.2 480L880.2 466" stroke="#a87c00" stroke-width="2.4" fill="none" />
<path d="M871.2 467L874.7 477L870.7 477L875.2 467" stroke="#a9a9a9" stroke-width="0.8" fill="none" />
<path d="M870.7 481L870.7 496L864.2 498L864.2 502L882.2 502L882.2 498L875.7 496L875.7 481" stroke="#c4c4c4" stroke-width="1" fill="none" />
<path d="M929 466L929 480L943 480L943 466" stroke="#a87c00" stroke-width="2.4" fill="none" />
<path d="M934 467L937.5 477L933.5 477L938 467" stroke="#a9a9a9" stroke-width="0.8" fill="none" />
<path d="M933.5 481L933.5 496L927 498L927 502L945 502L945 498L938.5 496L938.5 481" stroke="#c4c4c4" stroke-width="1" fill="none" />
<path d="M755 207.8L845 207.8" stroke="#a07600" stroke-width="3" />
<path d="M757 207.8L843 207.8" stroke="#c79a1a" stroke-width="0.6" />
<path d="M684 262L917 262" stroke="#a07600" stroke-width="3.2" />
<path d="M755.8 208L755.8 262" stroke="#a07600" stroke-width="2.2" />
<path d="M773.3 208L773.3 262" stroke="#a07600" stroke-width="2.2" />
<path d="M791.3 208L791.3 262" stroke="#a07600" stroke-width="2.2" />
<path d="M809 208L809 262" stroke="#a07600" stroke-width="2.2" />
<path d="M826.7 208L826.7 262" stroke="#a07600" stroke-width="2.2" />
<path d="M844.7 208L844.7 262" stroke="#a07600" stroke-width="2.2" />
<path d="M756.8 209L772.3 261" stroke="#a07600" stroke-width="1" />
<path d="M772.3 209L756.8 261" stroke="#a07600" stroke-width="1" />
<path d="M774.3 209L790.3 261" stroke="#a07600" stroke-width="1" />
<path d="M790.3 209L774.3 261" stroke="#a07600" stroke-width="1" />
<path d="M792.3 209L808 261" stroke="#a07600" stroke-width="1" />
<path d="M808 209L792.3 261" stroke="#a07600" stroke-width="1" />
<path d="M810 209L825.7 261" stroke="#a07600" stroke-width="1" />
<path d="M825.7 209L810 261" stroke="#a07600" stroke-width="1" />
<path d="M827.7 209L843.7 261" stroke="#a07600" stroke-width="1" />
<path d="M843.7 209L827.7 261" stroke="#a07600" stroke-width="1" />
<path d="M737.9 219.339L737.9 262" stroke="#a07600" stroke-width="2.2" />
<path d="M738.9 220.339L754.8 261" stroke="#a07600" stroke-width="1.8" />
<path d="M720 232.073L720 262" stroke="#a07600" stroke-width="2.2" />
<path d="M721 233.073L736.9 261" stroke="#a07600" stroke-width="1.8" />
<path d="M702.2 244.736L702.2 262" stroke="#a07600" stroke-width="2.2" />
<path d="M703.2 245.736L719 261" stroke="#a07600" stroke-width="1.8" />
<path d="M862.5 220.366L862.5 262" stroke="#a07600" stroke-width="2.2" />
<path d="M861.5 221.366L845.7 261" stroke="#a07600" stroke-width="1.8" />
<path d="M880.5 232.668L880.5 262" stroke="#a07600" stroke-width="2.2" />
<path d="M879.5 233.668L863.5 261" stroke="#a07600" stroke-width="1.8" />
<path d="M897.5 244.287L897.5 262" stroke="#a07600" stroke-width="2.2" />
<path d="M896.5 245.287L881.5 261" stroke="#a07600" stroke-width="1.8" />
<path d="M898 261L915 245.5" stroke="#a07600" stroke-width="1" />
<path d="M686 261L702 248" stroke="#a07600" stroke-width="1" />
<path d="M669.5 266L755 205.3" stroke="#a87c00" stroke-width="6.2" stroke-linecap="round"/>
<path d="M844.7 206L930 264.3" stroke="#a87c00" stroke-width="6.2" stroke-linecap="round"/>
<path d="M669 268L672 270.5L675 269" stroke="#a87c00" stroke-width="2" fill="none" />
<path d="M930.5 266.5L927.5 269L925 267.5" stroke="#a87c00" stroke-width="2" fill="none" />
<path d="M890.8 172L890.8 237.8" stroke="#a9a9a9" stroke-width="1.2" fill="none" />
<path d="M898.7 258.7L898.7 175L994 175" stroke="#a9a9a9" stroke-width="1.2" fill="none" />
<path d="M936.3 273L936.3 192.3L985.8 192.3" stroke="#a9a9a9" stroke-width="1.2" fill="none" />
<path d="M683 273.3L958 273.3" stroke="#a07600" stroke-width="1.3" />
<path d="M623.4 273.3L683.4 273.3L683.4 279L634.3 279" stroke="#a07600" stroke-width="1.2" fill="none" />
<path d="M623.4 273.3L630 279L634.3 284.7L662 284.7" stroke="#a07600" stroke-width="1.2" fill="none" />
<path d="M634 281.5L660 281.5" stroke="#a07600" stroke-width="1" />
<path d="M640 283L660 283" stroke="#a07600" stroke-width="0.8" />
<path d="M644 274.5L661.5 274.5L661.5 285L652 285L650 279L644 274.5" stroke="#a07600" stroke-width="1" fill="#2a3038" />
<rect x="651.5" y="275.7" width="1.300" height="1.200" fill="#e8e8e8"/>
<rect x="656.0" y="279.1" width="1.300" height="1.200" fill="#10151b"/>
<rect x="654.6" y="274.5" width="1.300" height="1.200" fill="#c9c9c9"/>
<rect x="650.4" y="278.6" width="1.300" height="1.200" fill="#10151b"/>
<rect x="660.4" y="276.5" width="1.300" height="1.200" fill="#c9c9c9"/>
<rect x="653.4" y="279.6" width="1.300" height="1.200" fill="#10151b"/>
<rect x="658.9" y="283.7" width="1.300" height="1.200" fill="#10151b"/>
<rect x="650.2" y="275.0" width="1.300" height="1.200" fill="#e8e8e8"/>
<rect x="659.7" y="279.7" width="1.300" height="1.200" fill="#c9c9c9"/>
<rect x="652.8" y="280.9" width="1.300" height="1.200" fill="#c9c9c9"/>
<rect x="659.3" y="275.9" width="1.300" height="1.200" fill="#e8e8e8"/>
<rect x="658.8" y="275.9" width="1.300" height="1.200" fill="#e8e8e8"/>
<rect x="651.9" y="276.6" width="1.300" height="1.200" fill="#c9c9c9"/>
<rect x="660.4" y="279.2" width="1.300" height="1.200" fill="#10151b"/>
<rect x="659.3" y="275.4" width="1.300" height="1.200" fill="#9c9c9c"/>
<rect x="658.6" y="277.0" width="1.300" height="1.200" fill="#c9c9c9"/>
<rect x="654.8" y="283.3" width="1.300" height="1.200" fill="#c9c9c9"/>
<rect x="657.8" y="274.7" width="1.300" height="1.200" fill="#e8e8e8"/>
<rect x="654.7" y="282.2" width="1.300" height="1.200" fill="#e8e8e8"/>
<rect x="652.1" y="275.5" width="1.300" height="1.200" fill="#9c9c9c"/>
<rect x="657.6" y="282.7" width="1.300" height="1.200" fill="#e8e8e8"/>
<rect x="653.9" y="281.4" width="1.300" height="1.200" fill="#10151b"/>
<rect x="652.5" y="282.8" width="1.300" height="1.200" fill="#9c9c9c"/>
<rect x="660.8" y="277.4" width="1.300" height="1.200" fill="#9c9c9c"/>
<rect x="659.6" y="274.7" width="1.300" height="1.200" fill="#9c9c9c"/>
<rect x="654.0" y="284.4" width="1.300" height="1.200" fill="#c9c9c9"/>
<rect x="648.9" y="275.0" width="1.300" height="1.200" fill="#c9c9c9"/>
<rect x="658.4" y="281.6" width="1.300" height="1.200" fill="#9c9c9c"/>
<rect x="660.0" y="284.0" width="1.300" height="1.200" fill="#e8e8e8"/>
<rect x="652.0" y="283.8" width="1.300" height="1.200" fill="#9c9c9c"/>
<rect x="659.3" y="279.1" width="1.300" height="1.200" fill="#10151b"/>
<rect x="651.9" y="277.9" width="1.300" height="1.200" fill="#c9c9c9"/>
<rect x="651.5" y="276.6" width="1.300" height="1.200" fill="#9c9c9c"/>
<rect x="656.2" y="281.4" width="1.300" height="1.200" fill="#e8e8e8"/>
<rect x="659.1" y="274.8" width="1.300" height="1.200" fill="#e8e8e8"/>
<rect x="652.8" y="275.7" width="1.300" height="1.200" fill="#c9c9c9"/>
<rect x="659.0" y="274.7" width="1.300" height="1.200" fill="#c9c9c9"/>
<rect x="650.2" y="278.7" width="1.300" height="1.200" fill="#c9c9c9"/>
<rect x="659.4" y="281.3" width="1.300" height="1.200" fill="#e8e8e8"/>
<rect x="647.4" y="275.7" width="1.300" height="1.200" fill="#c9c9c9"/>
<rect x="657.8" y="281.7" width="1.300" height="1.200" fill="#c9c9c9"/>
<rect x="656.2" y="281.3" width="1.300" height="1.200" fill="#e8e8e8"/>
<rect x="656.5" y="279.6" width="1.300" height="1.200" fill="#10151b"/>
<rect x="655.1" y="283.7" width="1.300" height="1.200" fill="#c9c9c9"/>
<rect x="655.3" y="284.8" width="1.300" height="1.200" fill="#c9c9c9"/>
<rect x="660.3" y="277.3" width="1.300" height="1.200" fill="#9c9c9c"/>
<rect x="660.9" y="281.8" width="1.300" height="1.200" fill="#9c9c9c"/>
<rect x="653.1" y="283.0" width="1.300" height="1.200" fill="#e8e8e8"/>
<rect x="653.7" y="283.1" width="1.300" height="1.200" fill="#10151b"/>
<rect x="651.2" y="276.4" width="1.300" height="1.200" fill="#9c9c9c"/>
<rect x="653.7" y="282.5" width="1.300" height="1.200" fill="#e8e8e8"/>
<rect x="653.4" y="278.5" width="1.300" height="1.200" fill="#9c9c9c"/>
<rect x="651.4" y="279.0" width="1.300" height="1.200" fill="#9c9c9c"/>
<rect x="651.4" y="277.9" width="1.300" height="1.200" fill="#10151b"/>
<rect x="653.7" y="278.6" width="1.300" height="1.200" fill="#9c9c9c"/>
<rect x="653.7" y="274.8" width="1.300" height="1.200" fill="#e8e8e8"/>
<rect x="658.9" y="275.1" width="1.300" height="1.200" fill="#e8e8e8"/>
<rect x="654.5" y="275.2" width="1.300" height="1.200" fill="#c9c9c9"/>
<rect x="650.8" y="277.6" width="1.300" height="1.200" fill="#10151b"/>
<rect x="655.8" y="275.6" width="1.300" height="1.200" fill="#e8e8e8"/>
<rect x="659.5" y="280.3" width="1.300" height="1.200" fill="#10151b"/>
<rect x="658.8" y="278.2" width="1.300" height="1.200" fill="#9c9c9c"/>
<rect x="656.1" y="278.4" width="1.300" height="1.200" fill="#10151b"/>
<rect x="651.5" y="279.9" width="1.300" height="1.200" fill="#e8e8e8"/>
<rect x="646.9" y="274.9" width="1.300" height="1.200" fill="#e8e8e8"/>
<rect x="647.9" y="275.8" width="1.300" height="1.200" fill="#c9c9c9"/>
<rect x="653.7" y="280.3" width="1.300" height="1.200" fill="#9c9c9c"/>
<rect x="659.7" y="284.8" width="1.300" height="1.200" fill="#e8e8e8"/>
<rect x="652.1" y="280.1" width="1.300" height="1.200" fill="#e8e8e8"/>
<rect x="653.4" y="281.1" width="1.300" height="1.200" fill="#10151b"/>
<rect x="652.6" y="281.9" width="1.300" height="1.200" fill="#c9c9c9"/>
<rect x="653.8" y="278.1" width="1.300" height="1.200" fill="#c9c9c9"/>
<rect x="647.3" y="275.7" width="1.300" height="1.200" fill="#e8e8e8"/>
<rect x="650.5" y="276.1" width="1.300" height="1.200" fill="#c9c9c9"/>
<rect x="652.6" y="279.9" width="1.300" height="1.200" fill="#10151b"/>
<rect x="653.2" y="275.2" width="1.300" height="1.200" fill="#9c9c9c"/>
<rect x="656.8" y="278.4" width="1.300" height="1.200" fill="#e8e8e8"/>
<rect x="659.5" y="279.1" width="1.300" height="1.200" fill="#9c9c9c"/>
<rect x="656.2" y="284.0" width="1.300" height="1.200" fill="#e8e8e8"/>
<rect x="651.0" y="276.7" width="1.300" height="1.200" fill="#10151b"/>
<rect x="657.4" y="277.9" width="1.300" height="1.200" fill="#9c9c9c"/>
<rect x="651.6" y="281.0" width="1.300" height="1.200" fill="#c9c9c9"/>
<rect x="657.3" y="275.6" width="1.300" height="1.200" fill="#9c9c9c"/>
<rect x="646.2" y="276.1" width="1.300" height="1.200" fill="#e8e8e8"/>
<rect x="658.2" y="275.3" width="1.300" height="1.200" fill="#9c9c9c"/>
<rect x="660.4" y="276.0" width="1.300" height="1.200" fill="#e8e8e8"/>
<rect x="660.0" y="275.2" width="1.300" height="1.200" fill="#9c9c9c"/>
<rect x="649.3" y="276.6" width="1.300" height="1.200" fill="#10151b"/>
<rect x="653.8" y="281.1" width="1.300" height="1.200" fill="#e8e8e8"/>
<rect x="658.6" y="277.3" width="1.300" height="1.200" fill="#e8e8e8"/>
<rect x="656.0" y="282.1" width="1.300" height="1.200" fill="#10151b"/>
<rect x="655.4" y="275.8" width="1.300" height="1.200" fill="#10151b"/>
<rect x="650.7" y="276.3" width="1.300" height="1.200" fill="#10151b"/>
<rect x="660.6" y="283.1" width="1.300" height="1.200" fill="#e8e8e8"/>
<rect x="657.5" y="281.7" width="1.300" height="1.200" fill="#10151b"/>
<rect x="654.1" y="278.4" width="1.300" height="1.200" fill="#c9c9c9"/>
<rect x="655.0" y="276.8" width="1.300" height="1.200" fill="#e8e8e8"/>
<rect x="655.6" y="277.9" width="1.300" height="1.200" fill="#10151b"/>
<rect x="655.2" y="275.5" width="1.300" height="1.200" fill="#9c9c9c"/>
<rect x="653.5" y="277.3" width="1.300" height="1.200" fill="#c9c9c9"/>
<rect x="658.6" y="283.9" width="1.300" height="1.200" fill="#10151b"/>
<rect x="655.6" y="278.2" width="1.300" height="1.200" fill="#10151b"/>
<rect x="660.5" y="282.1" width="1.300" height="1.200" fill="#10151b"/>
<rect x="655.8" y="278.4" width="1.300" height="1.200" fill="#9c9c9c"/>
<rect x="658.8" y="274.8" width="1.300" height="1.200" fill="#10151b"/>
<rect x="654.9" y="277.1" width="1.300" height="1.200" fill="#9c9c9c"/>
<rect x="652.3" y="280.9" width="1.300" height="1.200" fill="#9c9c9c"/>
<rect x="656.7" y="279.7" width="1.300" height="1.200" fill="#10151b"/>
<rect x="660.2" y="280.0" width="1.300" height="1.200" fill="#c9c9c9"/>
<rect x="650.1" y="275.1" width="1.300" height="1.200" fill="#9c9c9c"/>
<rect x="654.9" y="275.7" width="1.300" height="1.200" fill="#9c9c9c"/>
<rect x="653.3" y="278.5" width="1.300" height="1.200" fill="#c9c9c9"/>
<rect x="651.0" y="278.8" width="1.300" height="1.200" fill="#e8e8e8"/>
<rect x="651.0" y="276.3" width="1.300" height="1.200" fill="#9c9c9c"/>
<rect x="655.5" y="279.9" width="1.300" height="1.200" fill="#9c9c9c"/>
<rect x="656.5" y="276.0" width="1.300" height="1.200" fill="#e8e8e8"/>
<rect x="659.9" y="280.7" width="1.300" height="1.200" fill="#e8e8e8"/>
<path d="M917 273.3L917 279.5L937 279.5" stroke="#a07600" stroke-width="1.2" fill="none" />
<path d="M937.5 273.3L958 273.3L955 277L951 279L949 284L944 286L938 286" stroke="#a07600" stroke-width="1.2" fill="none" />
<path d="M938.5 274.5L953 274.5L947 283.5L938.5 284.5L938.5 274.5" stroke="#a07600" stroke-width="1" fill="#2a3038" />
<rect x="942.4" y="281.0" width="1.300" height="1.200" fill="#9c9c9c"/>
<rect x="944.9" y="276.8" width="1.300" height="1.200" fill="#c9c9c9"/>
<rect x="943.4" y="281.6" width="1.300" height="1.200" fill="#e8e8e8"/>
<rect x="945.9" y="280.1" width="1.300" height="1.200" fill="#c9c9c9"/>
<rect x="947.4" y="277.3" width="1.300" height="1.200" fill="#10151b"/>
<rect x="940.6" y="280.0" width="1.300" height="1.200" fill="#e8e8e8"/>
<rect x="941.8" y="281.8" width="1.300" height="1.200" fill="#9c9c9c"/>
<rect x="948.5" y="279.2" width="1.300" height="1.200" fill="#9c9c9c"/>
<rect x="946.8" y="279.4" width="1.300" height="1.200" fill="#c9c9c9"/>
<rect x="950.5" y="277.6" width="1.300" height="1.200" fill="#9c9c9c"/>
<rect x="944.8" y="274.8" width="1.300" height="1.200" fill="#c9c9c9"/>
<rect x="939.3" y="275.3" width="1.300" height="1.200" fill="#9c9c9c"/>
<rect x="949.6" y="274.7" width="1.300" height="1.200" fill="#e8e8e8"/>
<rect x="939.9" y="278.3" width="1.300" height="1.200" fill="#c9c9c9"/>
<rect x="940.5" y="281.9" width="1.300" height="1.200" fill="#e8e8e8"/>
<rect x="941.2" y="280.2" width="1.300" height="1.200" fill="#e8e8e8"/>
<rect x="947.5" y="282.7" width="1.300" height="1.200" fill="#e8e8e8"/>
<rect x="946.0" y="279.4" width="1.300" height="1.200" fill="#9c9c9c"/>
<rect x="939.8" y="280.2" width="1.300" height="1.200" fill="#e8e8e8"/>
<rect x="944.6" y="282.2" width="1.300" height="1.200" fill="#c9c9c9"/>
<rect x="939.7" y="279.5" width="1.300" height="1.200" fill="#e8e8e8"/>
<rect x="941.6" y="277.5" width="1.300" height="1.200" fill="#9c9c9c"/>
<rect x="949.2" y="274.6" width="1.300" height="1.200" fill="#e8e8e8"/>
<rect x="941.0" y="275.6" width="1.300" height="1.200" fill="#10151b"/>
<rect x="946.6" y="276.7" width="1.300" height="1.200" fill="#c9c9c9"/>
<rect x="946.7" y="276.5" width="1.300" height="1.200" fill="#c9c9c9"/>
<rect x="939.6" y="277.8" width="1.300" height="1.200" fill="#9c9c9c"/>
<rect x="951.5" y="276.6" width="1.300" height="1.200" fill="#e8e8e8"/>
<rect x="943.4" y="278.3" width="1.300" height="1.200" fill="#10151b"/>
<rect x="944.3" y="275.4" width="1.300" height="1.200" fill="#9c9c9c"/>
<rect x="942.2" y="277.1" width="1.300" height="1.200" fill="#c9c9c9"/>
<rect x="949.0" y="277.7" width="1.300" height="1.200" fill="#c9c9c9"/>
<rect x="946.0" y="277.3" width="1.300" height="1.200" fill="#e8e8e8"/>
<rect x="942.3" y="280.9" width="1.300" height="1.200" fill="#e8e8e8"/>
<rect x="942.8" y="276.3" width="1.300" height="1.200" fill="#e8e8e8"/>
<rect x="946.7" y="275.9" width="1.300" height="1.200" fill="#e8e8e8"/>
<rect x="940.3" y="277.5" width="1.300" height="1.200" fill="#e8e8e8"/>
<rect x="939.9" y="279.5" width="1.300" height="1.200" fill="#c9c9c9"/>
<rect x="940.0" y="278.5" width="1.300" height="1.200" fill="#c9c9c9"/>
<rect x="948.6" y="280.1" width="1.300" height="1.200" fill="#9c9c9c"/>
<rect x="944.1" y="281.9" width="1.300" height="1.200" fill="#9c9c9c"/>
<rect x="947.7" y="275.8" width="1.300" height="1.200" fill="#c9c9c9"/>
<rect x="949.3" y="279.9" width="1.300" height="1.200" fill="#c9c9c9"/>
<rect x="943.9" y="278.7" width="1.300" height="1.200" fill="#9c9c9c"/>
<rect x="944.5" y="281.1" width="1.300" height="1.200" fill="#c9c9c9"/>
<rect x="946.0" y="275.9" width="1.300" height="1.200" fill="#10151b"/>
<rect x="949.6" y="278.7" width="1.300" height="1.200" fill="#10151b"/>
<rect x="946.7" y="282.8" width="1.300" height="1.200" fill="#10151b"/>
<rect x="938.7" y="279.1" width="1.300" height="1.200" fill="#10151b"/>
<rect x="941.5" y="282.2" width="1.300" height="1.200" fill="#e8e8e8"/>
<rect x="952.1" y="275.1" width="1.300" height="1.200" fill="#e8e8e8"/>
<rect x="943.4" y="274.9" width="1.300" height="1.200" fill="#10151b"/>
<rect x="942.0" y="281.9" width="1.300" height="1.200" fill="#9c9c9c"/>
<rect x="942.4" y="275.8" width="1.300" height="1.200" fill="#c9c9c9"/>
<rect x="941.6" y="281.5" width="1.300" height="1.200" fill="#c9c9c9"/>
<rect x="941.1" y="275.6" width="1.300" height="1.200" fill="#9c9c9c"/>
<rect x="941.6" y="282.4" width="1.300" height="1.200" fill="#10151b"/>
<rect x="942.9" y="280.3" width="1.300" height="1.200" fill="#c9c9c9"/>
<rect x="939.9" y="277.9" width="1.300" height="1.200" fill="#10151b"/>
<rect x="945.8" y="279.4" width="1.300" height="1.200" fill="#9c9c9c"/>
<rect x="948.0" y="274.5" width="1.300" height="1.200" fill="#e8e8e8"/>
<rect x="945.9" y="277.8" width="1.300" height="1.200" fill="#e8e8e8"/>
<rect x="938.9" y="281.1" width="1.300" height="1.200" fill="#c9c9c9"/>
<rect x="946.5" y="276.1" width="1.300" height="1.200" fill="#10151b"/>
<rect x="943.3" y="275.5" width="1.300" height="1.200" fill="#9c9c9c"/>
<rect x="946.5" y="277.7" width="1.300" height="1.200" fill="#c9c9c9"/>
<rect x="943.7" y="276.9" width="1.300" height="1.200" fill="#10151b"/>
<rect x="941.3" y="279.6" width="1.300" height="1.200" fill="#10151b"/>
<rect x="939.1" y="282.1" width="1.300" height="1.200" fill="#e8e8e8"/>
<rect x="947.9" y="280.3" width="1.300" height="1.200" fill="#9c9c9c"/>
<rect x="941.1" y="274.7" width="1.300" height="1.200" fill="#10151b"/>
<rect x="948.1" y="277.9" width="1.300" height="1.200" fill="#e8e8e8"/>
<rect x="944.7" y="274.7" width="1.300" height="1.200" fill="#10151b"/>
<rect x="946.8" y="276.0" width="1.300" height="1.200" fill="#9c9c9c"/>
<rect x="944.6" y="274.8" width="1.300" height="1.200" fill="#10151b"/>
<rect x="950.5" y="274.7" width="1.300" height="1.200" fill="#e8e8e8"/>
<rect x="950.9" y="274.7" width="1.300" height="1.200" fill="#c9c9c9"/>
<rect x="944.9" y="277.7" width="1.300" height="1.200" fill="#10151b"/>
<rect x="943.9" y="279.9" width="1.300" height="1.200" fill="#9c9c9c"/>
<rect x="944.8" y="277.2" width="1.300" height="1.200" fill="#10151b"/>
<rect x="941.4" y="284.0" width="1.300" height="1.200" fill="#c9c9c9"/>
<rect x="941.2" y="280.3" width="1.300" height="1.200" fill="#10151b"/>
<rect x="943.0" y="280.1" width="1.300" height="1.200" fill="#c9c9c9"/>
<rect x="938.9" y="279.5" width="1.300" height="1.200" fill="#c9c9c9"/>
<rect x="942.8" y="280.8" width="1.300" height="1.200" fill="#9c9c9c"/>
<rect x="940.0" y="282.0" width="1.300" height="1.200" fill="#9c9c9c"/>
<rect x="948.9" y="276.9" width="1.300" height="1.200" fill="#9c9c9c"/>
<rect x="948.8" y="274.6" width="1.300" height="1.200" fill="#c9c9c9"/>
<rect x="938.7" y="277.0" width="1.300" height="1.200" fill="#10151b"/>
<rect x="945.4" y="281.2" width="1.300" height="1.200" fill="#10151b"/>
<rect x="939.1" y="277.1" width="1.300" height="1.200" fill="#e8e8e8"/>
<rect x="680" y="266" width="3.5" height="7.3" fill="#12dcdc" stroke="none" stroke-width="1"/>
<path d="M681.75 266V273.3" stroke="#1a6f78" stroke-opacity="0.450" stroke-width="2.1" stroke-dasharray="0.700 1.300"/>
<rect x="916.3" y="265" width="3.4" height="8" fill="#12dcdc" stroke="none" stroke-width="1"/>
<path d="M918 265V273" stroke="#1a6f78" stroke-opacity="0.450" stroke-width="2.04" stroke-dasharray="0.700 1.300"/>
<path d="M577.6 287.3L666 287.3" stroke="#a87c00" stroke-width="2.4" />
<path d="M589.4 299.5L663 299.5" stroke="#a07600" stroke-width="1.2" />
<path d="M579 288.5L600.5 288.5L600.5 298.8L591 298.8L586 294L579 288.5" stroke="#a07600" stroke-width="1" fill="#2a3038" />
<rect x="584.7" y="289.9" width="1.300" height="1.200" fill="#10151b"/>
<rect x="590.8" y="295.6" width="1.300" height="1.200" fill="#e8e8e8"/>
<rect x="593.5" y="294.1" width="1.300" height="1.200" fill="#e8e8e8"/>
<rect x="590.7" y="294.6" width="1.300" height="1.200" fill="#e8e8e8"/>
<rect x="594.9" y="296.5" width="1.300" height="1.200" fill="#c9c9c9"/>
<rect x="598.6" y="296.1" width="1.300" height="1.200" fill="#e8e8e8"/>
<rect x="599.1" y="295.4" width="1.300" height="1.200" fill="#e8e8e8"/>
<rect x="589.3" y="292.7" width="1.300" height="1.200" fill="#c9c9c9"/>
<rect x="589.6" y="291.5" width="1.300" height="1.200" fill="#e8e8e8"/>
<rect x="583.7" y="289.3" width="1.300" height="1.200" fill="#9c9c9c"/>
<rect x="586.7" y="294.0" width="1.300" height="1.200" fill="#e8e8e8"/>
<rect x="596.0" y="293.8" width="1.300" height="1.200" fill="#e8e8e8"/>
<rect x="594.0" y="298.1" width="1.300" height="1.200" fill="#9c9c9c"/>
<rect x="586.1" y="293.2" width="1.300" height="1.200" fill="#e8e8e8"/>
<rect x="591.2" y="293.8" width="1.300" height="1.200" fill="#e8e8e8"/>
<rect x="594.8" y="298.6" width="1.300" height="1.200" fill="#e8e8e8"/>
<rect x="599.6" y="290.8" width="1.300" height="1.200" fill="#9c9c9c"/>
<rect x="589.8" y="293.6" width="1.300" height="1.200" fill="#9c9c9c"/>
<rect x="600.3" y="295.0" width="1.300" height="1.200" fill="#c9c9c9"/>
<rect x="591.4" y="293.3" width="1.300" height="1.200" fill="#10151b"/>
<rect x="589.0" y="294.0" width="1.300" height="1.200" fill="#9c9c9c"/>
<rect x="586.2" y="289.6" width="1.300" height="1.200" fill="#e8e8e8"/>
<rect x="586.1" y="290.1" width="1.300" height="1.200" fill="#e8e8e8"/>
<rect x="591.7" y="288.8" width="1.300" height="1.200" fill="#9c9c9c"/>
<rect x="592.3" y="298.1" width="1.300" height="1.200" fill="#9c9c9c"/>
<rect x="594.5" y="293.3" width="1.300" height="1.200" fill="#9c9c9c"/>
<rect x="597.5" y="297.4" width="1.300" height="1.200" fill="#c9c9c9"/>
<rect x="598.5" y="296.0" width="1.300" height="1.200" fill="#c9c9c9"/>
<rect x="588.3" y="291.5" width="1.300" height="1.200" fill="#c9c9c9"/>
<rect x="594.7" y="293.4" width="1.300" height="1.200" fill="#9c9c9c"/>
<rect x="588.3" y="288.8" width="1.300" height="1.200" fill="#e8e8e8"/>
<rect x="585.1" y="291.0" width="1.300" height="1.200" fill="#e8e8e8"/>
<rect x="590.5" y="290.1" width="1.300" height="1.200" fill="#c9c9c9"/>
<rect x="588.6" y="293.4" width="1.300" height="1.200" fill="#e8e8e8"/>
<rect x="590.6" y="293.8" width="1.300" height="1.200" fill="#e8e8e8"/>
<rect x="600.3" y="289.1" width="1.300" height="1.200" fill="#e8e8e8"/>
<rect x="592.0" y="292.2" width="1.300" height="1.200" fill="#e8e8e8"/>
<rect x="582.2" y="290.9" width="1.300" height="1.200" fill="#e8e8e8"/>
<rect x="591.9" y="294.4" width="1.300" height="1.200" fill="#e8e8e8"/>
<rect x="591.4" y="294.8" width="1.300" height="1.200" fill="#e8e8e8"/>
<rect x="580.8" y="289.3" width="1.300" height="1.200" fill="#e8e8e8"/>
<rect x="597.6" y="290.4" width="1.300" height="1.200" fill="#e8e8e8"/>
<rect x="599.5" y="297.4" width="1.300" height="1.200" fill="#10151b"/>
<rect x="590.0" y="292.9" width="1.300" height="1.200" fill="#9c9c9c"/>
<rect x="599.3" y="289.2" width="1.300" height="1.200" fill="#e8e8e8"/>
<rect x="591.4" y="293.9" width="1.300" height="1.200" fill="#c9c9c9"/>
<rect x="582.0" y="290.0" width="1.300" height="1.200" fill="#9c9c9c"/>
<rect x="595.7" y="292.3" width="1.300" height="1.200" fill="#e8e8e8"/>
<rect x="599.4" y="296.5" width="1.300" height="1.200" fill="#c9c9c9"/>
<rect x="592.3" y="291.5" width="1.300" height="1.200" fill="#c9c9c9"/>
<rect x="582.4" y="291.0" width="1.300" height="1.200" fill="#e8e8e8"/>
<rect x="591.9" y="298.0" width="1.300" height="1.200" fill="#e8e8e8"/>
<rect x="595.5" y="288.7" width="1.300" height="1.200" fill="#c9c9c9"/>
<rect x="597.9" y="295.0" width="1.300" height="1.200" fill="#10151b"/>
<rect x="595.3" y="290.6" width="1.300" height="1.200" fill="#c9c9c9"/>
<rect x="593.4" y="295.7" width="1.300" height="1.200" fill="#e8e8e8"/>
<rect x="595.5" y="298.6" width="1.300" height="1.200" fill="#10151b"/>
<rect x="590.8" y="293.3" width="1.300" height="1.200" fill="#e8e8e8"/>
<rect x="594.2" y="292.7" width="1.300" height="1.200" fill="#9c9c9c"/>
<rect x="588.5" y="294.0" width="1.300" height="1.200" fill="#e8e8e8"/>
<rect x="600.4" y="295.8" width="1.300" height="1.200" fill="#c9c9c9"/>
<rect x="599.0" y="288.9" width="1.300" height="1.200" fill="#10151b"/>
<rect x="595.1" y="289.4" width="1.300" height="1.200" fill="#c9c9c9"/>
<rect x="598.2" y="297.5" width="1.300" height="1.200" fill="#c9c9c9"/>
<rect x="594.2" y="291.5" width="1.300" height="1.200" fill="#9c9c9c"/>
<rect x="593.1" y="289.4" width="1.300" height="1.200" fill="#e8e8e8"/>
<rect x="588.3" y="295.6" width="1.300" height="1.200" fill="#c9c9c9"/>
<rect x="593.0" y="296.2" width="1.300" height="1.200" fill="#c9c9c9"/>
<rect x="589.0" y="295.7" width="1.300" height="1.200" fill="#e8e8e8"/>
<rect x="590.4" y="291.6" width="1.300" height="1.200" fill="#9c9c9c"/>
<rect x="596.1" y="296.2" width="1.300" height="1.200" fill="#9c9c9c"/>
<rect x="593.5" y="295.4" width="1.300" height="1.200" fill="#10151b"/>
<rect x="590.1" y="295.0" width="1.300" height="1.200" fill="#c9c9c9"/>
<rect x="595.2" y="293.7" width="1.300" height="1.200" fill="#c9c9c9"/>
<rect x="598.9" y="290.5" width="1.300" height="1.200" fill="#9c9c9c"/>
<rect x="590.2" y="297.4" width="1.300" height="1.200" fill="#c9c9c9"/>
<rect x="587.3" y="291.6" width="1.300" height="1.200" fill="#c9c9c9"/>
<rect x="592.1" y="291.7" width="1.300" height="1.200" fill="#10151b"/>
<rect x="588.9" y="295.0" width="1.300" height="1.200" fill="#e8e8e8"/>
<rect x="592.1" y="293.4" width="1.300" height="1.200" fill="#10151b"/>
<rect x="589.1" y="291.1" width="1.300" height="1.200" fill="#e8e8e8"/>
<rect x="591.0" y="293.6" width="1.300" height="1.200" fill="#10151b"/>
<rect x="587.0" y="289.1" width="1.300" height="1.200" fill="#9c9c9c"/>
<rect x="593.6" y="291.5" width="1.300" height="1.200" fill="#9c9c9c"/>
<rect x="599.4" y="294.1" width="1.300" height="1.200" fill="#10151b"/>
<rect x="599.1" y="289.4" width="1.300" height="1.200" fill="#10151b"/>
<rect x="593.4" y="293.4" width="1.300" height="1.200" fill="#c9c9c9"/>
<rect x="592.6" y="289.0" width="1.300" height="1.200" fill="#9c9c9c"/>
<rect x="599.6" y="290.9" width="1.300" height="1.200" fill="#9c9c9c"/>
<rect x="598.0" y="293.4" width="1.300" height="1.200" fill="#c9c9c9"/>
<rect x="589.5" y="293.6" width="1.300" height="1.200" fill="#c9c9c9"/>
<rect x="595.1" y="296.2" width="1.300" height="1.200" fill="#c9c9c9"/>
<rect x="591.2" y="297.7" width="1.300" height="1.200" fill="#9c9c9c"/>
<rect x="590.9" y="291.7" width="1.300" height="1.200" fill="#c9c9c9"/>
<rect x="599.9" y="293.1" width="1.300" height="1.200" fill="#c9c9c9"/>
<rect x="592.2" y="296.7" width="1.300" height="1.200" fill="#c9c9c9"/>
<rect x="583.7" y="292.1" width="1.300" height="1.200" fill="#9c9c9c"/>
<rect x="600.3" y="296.6" width="1.300" height="1.200" fill="#e8e8e8"/>
<rect x="593.8" y="290.2" width="1.300" height="1.200" fill="#e8e8e8"/>
<rect x="585.4" y="289.3" width="1.300" height="1.200" fill="#10151b"/>
<rect x="586.1" y="292.4" width="1.300" height="1.200" fill="#c9c9c9"/>
<rect x="595.2" y="296.9" width="1.300" height="1.200" fill="#e8e8e8"/>
<rect x="594.0" y="295.3" width="1.300" height="1.200" fill="#e8e8e8"/>
<rect x="598.5" y="297.7" width="1.300" height="1.200" fill="#c9c9c9"/>
<rect x="592.5" y="293.6" width="1.300" height="1.200" fill="#10151b"/>
<rect x="593.4" y="293.8" width="1.300" height="1.200" fill="#9c9c9c"/>
<rect x="590.8" y="295.0" width="1.300" height="1.200" fill="#10151b"/>
<rect x="590.2" y="297.4" width="1.300" height="1.200" fill="#10151b"/>
<rect x="588.7" y="291.4" width="1.300" height="1.200" fill="#c9c9c9"/>
<rect x="586.5" y="292.8" width="1.300" height="1.200" fill="#9c9c9c"/>
<rect x="597.7" y="289.2" width="1.300" height="1.200" fill="#e8e8e8"/>
<rect x="582.2" y="290.2" width="1.300" height="1.200" fill="#10151b"/>
<rect x="597.3" y="294.2" width="1.300" height="1.200" fill="#10151b"/>
<rect x="589.4" y="292.8" width="1.300" height="1.200" fill="#c9c9c9"/>
<rect x="600.0" y="291.6" width="1.300" height="1.200" fill="#9c9c9c"/>
<rect x="591.0" y="295.7" width="1.300" height="1.200" fill="#9c9c9c"/>
<rect x="600.2" y="293.5" width="1.300" height="1.200" fill="#9c9c9c"/>
<rect x="599.4" y="298.7" width="1.300" height="1.200" fill="#c9c9c9"/>
<rect x="594.8" y="298.7" width="1.300" height="1.200" fill="#c9c9c9"/>
<rect x="598.6" y="294.0" width="1.300" height="1.200" fill="#e8e8e8"/>
<rect x="600.4" y="290.6" width="1.300" height="1.200" fill="#e8e8e8"/>
<rect x="580.4" y="288.8" width="1.300" height="1.200" fill="#9c9c9c"/>
<rect x="584.3" y="290.0" width="1.300" height="1.200" fill="#e8e8e8"/>
<rect x="596.5" y="298.4" width="1.300" height="1.200" fill="#c9c9c9"/>
<rect x="598.8" y="291.0" width="1.300" height="1.200" fill="#9c9c9c"/>
<rect x="593.9" y="288.8" width="1.300" height="1.200" fill="#9c9c9c"/>
<rect x="596.1" y="291.9" width="1.300" height="1.200" fill="#e8e8e8"/>
<rect x="591.4" y="294.2" width="1.300" height="1.200" fill="#10151b"/>
<rect x="589.7" y="293.7" width="1.300" height="1.200" fill="#10151b"/>
<rect x="590.7" y="295.9" width="1.300" height="1.200" fill="#e8e8e8"/>
<rect x="599.7" y="296.4" width="1.300" height="1.200" fill="#e8e8e8"/>
<rect x="581.0" y="290.1" width="1.300" height="1.200" fill="#c9c9c9"/>
<rect x="596.6" y="296.8" width="1.300" height="1.200" fill="#10151b"/>
<rect x="595.5" y="291.3" width="1.300" height="1.200" fill="#10151b"/>
<rect x="592.6" y="292.0" width="1.300" height="1.200" fill="#e8e8e8"/>
<rect x="600.2" y="292.2" width="1.300" height="1.200" fill="#e8e8e8"/>
<rect x="597.4" y="298.6" width="1.300" height="1.200" fill="#9c9c9c"/>
<rect x="599.5" y="293.2" width="1.300" height="1.200" fill="#9c9c9c"/>
<rect x="590.1" y="297.7" width="1.300" height="1.200" fill="#e8e8e8"/>
<rect x="599" y="255.5" width="6" height="30.9" fill="#12dcdc" stroke="none" stroke-width="1"/>
<path d="M602 255.5V286.4" stroke="#1a6f78" stroke-opacity="0.450" stroke-width="3.6" stroke-dasharray="0.700 1.300"/>
<path d="M598.6 255L598.6 286.4" stroke="#a07600" stroke-width="1" />
<path d="M598.6 255L605 255" stroke="#a07600" stroke-width="1" />
<rect x="597" y="300" width="12" height="11" fill="none" stroke="#a07600" stroke-width="1"/>
<path d="M598 302.5L608 302.5" stroke="#a07600" stroke-width="1" />
<path d="M598 305L608 305" stroke="#a07600" stroke-width="1" />
<path d="M599 308L607 308" stroke="#a07600" stroke-width="1" />
<path d="M599.2 311L599.2 429" stroke="#a07600" stroke-width="1.2" />
<path d="M607.5 311L607.5 429" stroke="#a07600" stroke-width="1.2" />
<rect x="596" y="429.2" width="13.5" height="28" fill="none" stroke="#a07600" stroke-width="1.2"/>
<rect x="598.5" y="434" width="8.5" height="13" fill="none" stroke="#a07600" stroke-width="1"/>
<path d="M596 432L609.5 432" stroke="#a07600" stroke-width="1" />
<path d="M596 450L609.5 450" stroke="#a07600" stroke-width="1" />
<rect x="662" y="278.2" width="4" height="26.8" fill="#12dcdc" stroke="none" stroke-width="1"/>
<path d="M664 278.2V305" stroke="#1a6f78" stroke-opacity="0.450" stroke-width="2.4" stroke-dasharray="0.700 1.300"/>
<rect x="662" y="305" width="4" height="5" fill="#a87c00" stroke="none" stroke-width="1"/>
<path d="M662.3 310L662.3 457" stroke="#a07600" stroke-width="1.3" />
<path d="M665.7 310L665.7 457" stroke="#a07600" stroke-width="1" />
<path d="M664 310L664 457" stroke="#8d8d8d" stroke-width="0.8" />
<rect x="634.1" y="300.5" width="11.8" height="3.5" rx="1.500" fill="none" stroke="#b5b5b5" stroke-width="1"/>
<path d="M639.1 301.5L639.1 303" stroke="#8c8c8c" stroke-width="0.7" />
<path d="M642.9 301.5L642.9 303" stroke="#8c8c8c" stroke-width="0.7" />
<rect x="637.6" y="304" width="6.8" height="7" fill="none" stroke="#b5b5b5" stroke-width="1"/>
<path d="M639.6 304L639.6 311" stroke="#8c8c8c" stroke-width="0.7" />
<path d="M642.4 304L642.4 311" stroke="#8c8c8c" stroke-width="0.7" />
<rect x="636.6" y="311" width="8.8" height="5" fill="#9a9a9a" stroke="#b5b5b5" stroke-width="0.8"/>
<rect x="637.6" y="316" width="6.8" height="30" fill="none" stroke="#b5b5b5" stroke-width="1"/>
<path d="M639.6 316L639.6 346" stroke="#8c8c8c" stroke-width="0.7" />
<path d="M642.4 316L642.4 346" stroke="#8c8c8c" stroke-width="0.7" />
<rect x="634.1" y="346" width="11.8" height="26" rx="1.500" fill="none" stroke="#b5b5b5" stroke-width="1"/>
<path d="M639.1 347L639.1 371" stroke="#8c8c8c" stroke-width="0.7" />
<path d="M642.9 347L642.9 371" stroke="#8c8c8c" stroke-width="0.7" />
<rect x="634.1" y="380" width="11.8" height="20" rx="1.500" fill="none" stroke="#b5b5b5" stroke-width="1"/>
<path d="M639.1 381L639.1 399" stroke="#8c8c8c" stroke-width="0.7" />
<path d="M642.9 381L642.9 399" stroke="#8c8c8c" stroke-width="0.7" />
<rect x="636.6" y="400" width="8.8" height="6.5" fill="#9a9a9a" stroke="#b5b5b5" stroke-width="0.8"/>
<rect x="637.6" y="406.5" width="6.8" height="28.5" fill="none" stroke="#b5b5b5" stroke-width="1"/>
<path d="M639.6 406.5L639.6 435" stroke="#8c8c8c" stroke-width="0.7" />
<path d="M642.4 406.5L642.4 435" stroke="#8c8c8c" stroke-width="0.7" />
<rect x="634.1" y="435" width="11.8" height="5.5" rx="1.500" fill="none" stroke="#b5b5b5" stroke-width="1"/>
<path d="M639.1 436L639.1 439.5" stroke="#8c8c8c" stroke-width="0.7" />
<path d="M642.9 436L642.9 439.5" stroke="#8c8c8c" stroke-width="0.7" />
<path d="M637.6 440.5L637.6 457.4" stroke="#b5b5b5" stroke-width="1" />
<path d="M644.4 440.5L644.4 457.4" stroke="#b5b5b5" stroke-width="1.2" />
<rect x="632" y="373.5" width="14" height="3.5" fill="none" stroke="#a07600" stroke-width="1"/>
<path d="M754.5 273.3L754.5 358" stroke="#a07600" stroke-width="1.2" />
<path d="M754.5 385L754.5 457" stroke="#a07600" stroke-width="1.2" />
<rect x="853.3" y="277.8" width="3.4" height="41.7" fill="#12dcdc" stroke="none" stroke-width="1"/>
<path d="M855 277.8V319.5" stroke="#1a6f78" stroke-opacity="0.450" stroke-width="2.04" stroke-dasharray="0.700 1.300"/>
<rect x="853.3" y="319.5" width="3.4" height="5" fill="#a87c00" stroke="none" stroke-width="1"/>
<rect x="853.3" y="324.5" width="3.4" height="11.5" fill="#12dcdc" stroke="none" stroke-width="1"/>
<path d="M855 324.5V336" stroke="#1a6f78" stroke-opacity="0.450" stroke-width="2.04" stroke-dasharray="0.700 1.300"/>
<path d="M855 336L855 376" stroke="#8d8d8d" stroke-width="1.2" />
<path d="M853.6 336L853.6 376" stroke="#a07600" stroke-width="0.8" />
<path d="M854.5 385L854.5 420" stroke="#a07600" stroke-width="1.1" />
<rect x="934" y="277" width="3.6" height="23" fill="#12dcdc" stroke="none" stroke-width="1"/>
<path d="M935.8 277V300" stroke="#1a6f78" stroke-opacity="0.450" stroke-width="2.16" stroke-dasharray="0.700 1.300"/>
<path d="M934.3 300L934.3 348" stroke="#a07600" stroke-width="1.1" />
<path d="M936.5 300L936.5 348" stroke="#8d8d8d" stroke-width="1" />
<rect x="934.2" y="348.5" width="3.5" height="27.2" fill="#12dcdc" stroke="none" stroke-width="1"/>
<path d="M935.95 348.5V375.7" stroke="#1a6f78" stroke-opacity="0.450" stroke-width="2.1" stroke-dasharray="0.700 1.300"/>
<path d="M934.3 385L934.3 436" stroke="#a07600" stroke-width="1.1" />
<path d="M936.5 385L936.5 436" stroke="#8d8d8d" stroke-width="1" />
<rect x="934.2" y="436" width="3.5" height="21.4" fill="#12dcdc" stroke="none" stroke-width="1"/>
<path d="M935.95 436V457.4" stroke="#1a6f78" stroke-opacity="0.450" stroke-width="2.1" stroke-dasharray="0.700 1.300"/>
<rect x="936.8" y="287" width="11.2" height="4" rx="1.500" fill="none" stroke="#b5b5b5" stroke-width="1"/>
<path d="M940.8 288L940.8 290" stroke="#8c8c8c" stroke-width="0.7" />
<path d="M944 288L944 290" stroke="#8c8c8c" stroke-width="0.7" />
<rect x="939.3" y="291" width="6.2" height="7" fill="none" stroke="#b5b5b5" stroke-width="1"/>
<path d="M941.3 291L941.3 298" stroke="#8c8c8c" stroke-width="0.7" />
<path d="M943.5 291L943.5 298" stroke="#8c8c8c" stroke-width="0.7" />
<rect x="938.3" y="298" width="8.2" height="5" fill="#9a9a9a" stroke="#b5b5b5" stroke-width="0.8"/>
<rect x="939.3" y="303" width="6.2" height="30" fill="none" stroke="#b5b5b5" stroke-width="1"/>
<path d="M941.3 303L941.3 333" stroke="#8c8c8c" stroke-width="0.7" />
<path d="M943.5 303L943.5 333" stroke="#8c8c8c" stroke-width="0.7" />
<rect x="936.8" y="333" width="11.2" height="39" rx="1.500" fill="none" stroke="#b5b5b5" stroke-width="1"/>
<path d="M940.8 334L940.8 371" stroke="#8c8c8c" stroke-width="0.7" />
<path d="M944 334L944 371" stroke="#8c8c8c" stroke-width="0.7" />
<rect x="936.8" y="380" width="11.2" height="20" rx="1.500" fill="none" stroke="#b5b5b5" stroke-width="1"/>
<path d="M940.8 381L940.8 399" stroke="#8c8c8c" stroke-width="0.7" />
<path d="M944 381L944 399" stroke="#8c8c8c" stroke-width="0.7" />
<rect x="938.3" y="400" width="8.2" height="6.5" fill="#9a9a9a" stroke="#b5b5b5" stroke-width="0.8"/>
<rect x="939.3" y="406.5" width="6.2" height="28.5" fill="none" stroke="#b5b5b5" stroke-width="1"/>
<path d="M941.3 406.5L941.3 435" stroke="#8c8c8c" stroke-width="0.7" />
<path d="M943.5 406.5L943.5 435" stroke="#8c8c8c" stroke-width="0.7" />
<rect x="936.8" y="435" width="11.2" height="5.5" rx="1.500" fill="none" stroke="#b5b5b5" stroke-width="1"/>
<path d="M940.8 436L940.8 439.5" stroke="#8c8c8c" stroke-width="0.7" />
<path d="M944 436L944 439.5" stroke="#8c8c8c" stroke-width="0.7" />
<path d="M939.3 440.5L939.3 457.4" stroke="#b5b5b5" stroke-width="1" />
<path d="M945.5 440.5L945.5 457.4" stroke="#b5b5b5" stroke-width="1.2" />
<rect x="937" y="374.5" width="13" height="3.4" fill="none" stroke="#a07600" stroke-width="1"/>
<path d="M666 296.7L934 296.7" stroke="#a07600" stroke-width="1.5" stroke-dasharray="4 6.800"/>
<text x="769" y="303" font-size="6.5" fill="#64090d" font-weight="700" text-anchor="start" textLength="38" lengthAdjust="spacingAndGlyphs">PLAFOND +8.55</text>
<path d="M783 306L822 306L822 299" stroke="#a9a9a9" stroke-width="1.2" fill="none" />
<path d="M816 301.5q6-4.500 12 0" stroke="#a9a9a9" stroke-width="1" fill="none"/>
<path d="M752 377.9L937 377.9" stroke="#a87c00" stroke-width="3.6" />
<path d="M753 384.5L936 384.5" stroke="#a07600" stroke-width="1.2" />
<path d="M756 386L934 386" stroke="#a07600" stroke-width="1" stroke-dasharray="3 7"/>
<path d="M753 378L753 385" stroke="#a87c00" stroke-width="2.4" />
<path d="M818.5 378L818.5 385" stroke="#a87c00" stroke-width="2.4" />
<path d="M873 378L873 385" stroke="#a87c00" stroke-width="2.4" />
<rect x="936" y="375" width="13" height="3" fill="none" stroke="#a07600" stroke-width="1"/>
<rect x="872" y="386" width="3.2" height="14" fill="#12dcdc" stroke="none" stroke-width="1"/>
<path d="M873.6 386V400" stroke="#1a6f78" stroke-opacity="0.450" stroke-width="1.92" stroke-dasharray="0.700 1.300"/>
<rect x="872" y="400" width="3.2" height="4.5" fill="#a87c00" stroke="none" stroke-width="1"/>
<rect x="872" y="404.5" width="3.2" height="52.9" fill="#12dcdc" stroke="none" stroke-width="1"/>
<path d="M873.6 404.5V457.4" stroke="#1a6f78" stroke-opacity="0.450" stroke-width="1.92" stroke-dasharray="0.700 1.300"/>
<text x="877" y="393" font-size="6.5" fill="#64090d" font-weight="700" text-anchor="start" textLength="38" lengthAdjust="spacingAndGlyphs">PLAFOND +4.25</text>
<path d="M891 395.2L929 395.2L929 387.5" stroke="#a9a9a9" stroke-width="1.2" fill="none" />
<path d="M923 389.500q6-4.500 12 0" stroke="#a9a9a9" stroke-width="1" fill="none"/>
<rect x="753" y="358.8" width="72.5" height="17" fill="none" stroke="#a07600" stroke-width="1.2"/>
<path d="M753 361.5L825 361.5" stroke="#a07600" stroke-width="1" />
<path d="M753 367.5L825.5 367.5" stroke="#a07600" stroke-width="10" stroke-dasharray="0.800 1.600"/>
<path d="M825.5 358.8L825.5 376" stroke="#a07600" stroke-width="1.6" fill="none" />
<text x="763" y="376" font-size="6.5" fill="#64090d" font-weight="700" text-anchor="start" textLength="33" lengthAdjust="spacingAndGlyphs">R. KELUARGA</text>
<path d="M836 377 C846 375 850 366 851 358.500 L853.500 358.500 L853.500 377" stroke="#a07600" stroke-width="1.300" fill="none"/><path d="M840 377 C847 373 850 366 852 360" stroke="#a07600" stroke-width="3" fill="none" stroke-dasharray="0.8 1.4"/>
<path d="M824 385C800 392 762 404 756 432C755 442 755 450 755 457" stroke="#a07600" stroke-width="1.4" fill="none"/>
<path d="M836 385C822 400 796 412 790 436C789 444 789 450 789 457" stroke="#a07600" stroke-width="1.4" fill="none"/>
<path d="M824 378C800 385 762 397 756 425C755 435 755 443 755 450" stroke="#a07600" stroke-width="1.3" fill="none"/>
<path d="M836 378C822 393 796 405 790 429C789 437 789 443 789 450" stroke="#a07600" stroke-width="1.3" fill="none"/>
<path d="M824 379.5C800 386.5 762 398.5 756 426.5C755 436.5 755 444.5 755 451.5" stroke="#a07600" stroke-width="0.7" fill="none"/>
<path d="M836 379.5C822 394.5 796 406.5 790 430.5C789 438.5 789 444.5 789 451.5" stroke="#a07600" stroke-width="0.7" fill="none"/>
<path d="M824 385L836 385" stroke="#a07600" stroke-width="0.9" />
<path d="M824 385L824 378" stroke="#a07600" stroke-width="0.7" />
<path d="M836 385L836 378" stroke="#a07600" stroke-width="0.7" />
<path d="M820.645 385.987L820.645 378.987" stroke="#a07600" stroke-width="0.6" />
<path d="M834.02 387.028L834.02 380.028" stroke="#a07600" stroke-width="0.6" />
<path d="M817.142 387.041L831.908 389.028" stroke="#a07600" stroke-width="0.9" />
<path d="M817.142 387.041L817.142 380.041" stroke="#a07600" stroke-width="0.7" />
<path d="M831.908 389.028L831.908 382.028" stroke="#a07600" stroke-width="0.7" />
<path d="M813.517 388.17L813.517 381.17" stroke="#a07600" stroke-width="0.6" />
<path d="M829.684 391.007L829.684 384.007" stroke="#a07600" stroke-width="0.6" />
<path d="M809.797 389.38L827.366 392.974" stroke="#a07600" stroke-width="0.9" />
<path d="M809.797 389.38L809.797 382.38" stroke="#a07600" stroke-width="0.7" />
<path d="M827.366 392.974L827.366 385.974" stroke="#a07600" stroke-width="0.7" />
<path d="M806.007 390.677L806.007 383.677" stroke="#a07600" stroke-width="0.6" />
<path d="M824.971 394.938L824.971 387.938" stroke="#a07600" stroke-width="0.6" />
<path d="M802.173 392.066L822.517 396.908" stroke="#a07600" stroke-width="0.9" />
<path d="M802.173 392.066L802.173 385.066" stroke="#a07600" stroke-width="0.7" />
<path d="M822.517 396.908L822.517 389.908" stroke="#a07600" stroke-width="0.7" />
<path d="M798.321 393.555L798.321 386.555" stroke="#a07600" stroke-width="0.6" />
<path d="M820.023 398.89L820.023 391.89" stroke="#a07600" stroke-width="0.6" />
<path d="M794.476 395.149L817.506 400.895" stroke="#a07600" stroke-width="0.9" />
<path d="M794.476 395.149L794.476 388.149" stroke="#a07600" stroke-width="0.7" />
<path d="M817.506 400.895L817.506 393.895" stroke="#a07600" stroke-width="0.7" />
<path d="M790.666 396.854L790.666 389.854" stroke="#a07600" stroke-width="0.6" />
<path d="M814.984 402.93L814.984 395.93" stroke="#a07600" stroke-width="0.6" />
<path d="M786.915 398.678L812.476 405.004" stroke="#a07600" stroke-width="0.9" />
<path d="M786.915 398.678L786.915 391.678" stroke="#a07600" stroke-width="0.7" />
<path d="M812.476 405.004L812.476 398.004" stroke="#a07600" stroke-width="0.7" />
<path d="M783.25 400.625L783.25 393.625" stroke="#a07600" stroke-width="0.6" />
<path d="M810 407.125L810 400.125" stroke="#a07600" stroke-width="0.6" />
<path d="M779.696 402.702L807.573 409.302" stroke="#a07600" stroke-width="0.9" />
<path d="M779.696 402.702L779.696 395.702" stroke="#a07600" stroke-width="0.7" />
<path d="M807.573 409.302L807.573 402.302" stroke="#a07600" stroke-width="0.7" />
<path d="M776.28 404.916L776.28 397.916" stroke="#a07600" stroke-width="0.6" />
<path d="M805.214 411.543L805.214 404.543" stroke="#a07600" stroke-width="0.6" />
<path d="M773.028 407.273L802.941 413.857" stroke="#a07600" stroke-width="0.9" />
<path d="M773.028 407.273L773.028 400.273" stroke="#a07600" stroke-width="0.7" />
<path d="M802.941 413.857L802.941 406.857" stroke="#a07600" stroke-width="0.7" />
<path d="M769.965 409.778L769.965 402.778" stroke="#a07600" stroke-width="0.6" />
<path d="M800.771 416.252L800.771 409.252" stroke="#a07600" stroke-width="0.6" />
<path d="M767.116 412.438L798.723 418.737" stroke="#a07600" stroke-width="0.9" />
<path d="M767.116 412.438L767.116 405.438" stroke="#a07600" stroke-width="0.7" />
<path d="M798.723 418.737L798.723 411.737" stroke="#a07600" stroke-width="0.7" />
<path d="M764.51 415.259L764.51 408.259" stroke="#a07600" stroke-width="0.6" />
<path d="M796.814 421.32L796.814 414.32" stroke="#a07600" stroke-width="0.6" />
<path d="M762.17 418.248L795.064 424.009" stroke="#a07600" stroke-width="0.9" />
<path d="M762.17 418.248L762.17 411.248" stroke="#a07600" stroke-width="0.7" />
<path d="M795.064 424.009L795.064 417.009" stroke="#a07600" stroke-width="0.7" />
<path d="M760.123 421.41L760.123 414.41" stroke="#a07600" stroke-width="0.6" />
<path d="M793.489 426.813L793.489 419.813" stroke="#a07600" stroke-width="0.6" />
<path d="M758.395 424.752L792.108 429.741" stroke="#a07600" stroke-width="0.9" />
<path d="M758.395 424.752L758.395 417.752" stroke="#a07600" stroke-width="0.7" />
<path d="M792.108 429.741L792.108 422.741" stroke="#a07600" stroke-width="0.7" />
<path d="M757.012 428.28L757.012 421.28" stroke="#a07600" stroke-width="0.6" />
<path d="M790.939 432.8L790.939 425.8" stroke="#a07600" stroke-width="0.6" />
<path d="M756 432L790 436" stroke="#a07600" stroke-width="0.9" />
<path d="M756 432L756 425" stroke="#a07600" stroke-width="0.7" />
<path d="M790 436L790 429" stroke="#a07600" stroke-width="0.7" />
<path d="M755.87 433.351L755.87 426.351" stroke="#a07600" stroke-width="0.6" />
<path d="M789.87 437.079L789.87 430.079" stroke="#a07600" stroke-width="0.6" />
<path d="M755.751 434.678L789.751 438.134" stroke="#a07600" stroke-width="0.9" />
<path d="M755.751 434.678L755.751 427.678" stroke="#a07600" stroke-width="0.7" />
<path d="M789.751 438.134L789.751 431.134" stroke="#a07600" stroke-width="0.7" />
<path d="M755.644 435.982L755.644 428.982" stroke="#a07600" stroke-width="0.6" />
<path d="M789.644 439.169L789.644 432.169" stroke="#a07600" stroke-width="0.6" />
<path d="M755.548 437.262L789.548 440.183" stroke="#a07600" stroke-width="0.9" />
<path d="M755.548 437.262L755.548 430.262" stroke="#a07600" stroke-width="0.7" />
<path d="M789.548 440.183L789.548 433.183" stroke="#a07600" stroke-width="0.7" />
<path d="M755.461 438.52L755.461 431.52" stroke="#a07600" stroke-width="0.6" />
<path d="M789.461 441.18L789.461 434.18" stroke="#a07600" stroke-width="0.6" />
<path d="M755.385 439.756L789.385 442.16" stroke="#a07600" stroke-width="0.9" />
<path d="M755.385 439.756L755.385 432.756" stroke="#a07600" stroke-width="0.7" />
<path d="M789.385 442.16L789.385 435.16" stroke="#a07600" stroke-width="0.7" />
<path d="M755.317 440.97L755.317 433.97" stroke="#a07600" stroke-width="0.6" />
<path d="M789.317 443.126L789.317 436.126" stroke="#a07600" stroke-width="0.6" />
<path d="M755.258 442.164L789.258 444.078" stroke="#a07600" stroke-width="0.9" />
<path d="M755.258 442.164L755.258 435.164" stroke="#a07600" stroke-width="0.7" />
<path d="M789.258 444.078L789.258 437.078" stroke="#a07600" stroke-width="0.7" />
<path d="M755.206 443.337L755.206 436.337" stroke="#a07600" stroke-width="0.6" />
<path d="M789.206 445.019L789.206 438.019" stroke="#a07600" stroke-width="0.6" />
<path d="M755.162 444.491L789.162 445.951" stroke="#a07600" stroke-width="0.9" />
<path d="M755.162 444.491L755.162 437.491" stroke="#a07600" stroke-width="0.7" />
<path d="M789.162 445.951L789.162 438.951" stroke="#a07600" stroke-width="0.7" />
<path d="M755.125 445.625L755.125 438.625" stroke="#a07600" stroke-width="0.6" />
<path d="M789.125 446.875L789.125 439.875" stroke="#a07600" stroke-width="0.6" />
<path d="M755.094 446.741L789.094 447.793" stroke="#a07600" stroke-width="0.9" />
<path d="M755.094 446.741L755.094 439.741" stroke="#a07600" stroke-width="0.7" />
<path d="M789.094 447.793L789.094 440.793" stroke="#a07600" stroke-width="0.7" />
<path d="M755.068 447.839L755.068 440.839" stroke="#a07600" stroke-width="0.6" />
<path d="M789.068 448.706L789.068 441.706" stroke="#a07600" stroke-width="0.6" />
<path d="M755.048 448.919L789.048 449.616" stroke="#a07600" stroke-width="0.9" />
<path d="M755.048 448.919L755.048 441.919" stroke="#a07600" stroke-width="0.7" />
<path d="M789.048 449.616L789.048 442.616" stroke="#a07600" stroke-width="0.7" />
<path d="M755.032 449.982L755.032 442.982" stroke="#a07600" stroke-width="0.6" />
<path d="M789.032 450.525L789.032 443.525" stroke="#a07600" stroke-width="0.6" />
<path d="M755.02 451.029L789.02 451.435" stroke="#a07600" stroke-width="0.9" />
<path d="M755.02 451.029L755.02 444.029" stroke="#a07600" stroke-width="0.7" />
<path d="M789.02 451.435L789.02 444.435" stroke="#a07600" stroke-width="0.7" />
<path d="M755.012 452.061L755.012 445.061" stroke="#a07600" stroke-width="0.6" />
<path d="M789.012 452.347L789.012 445.347" stroke="#a07600" stroke-width="0.6" />
<path d="M755.006 453.077L789.006 453.263" stroke="#a07600" stroke-width="0.9" />
<path d="M755.006 453.077L755.006 446.077" stroke="#a07600" stroke-width="0.7" />
<path d="M789.006 453.263L789.006 446.263" stroke="#a07600" stroke-width="0.7" />
<path d="M755.003 454.078L755.003 447.078" stroke="#a07600" stroke-width="0.6" />
<path d="M789.003 454.185L789.003 447.185" stroke="#a07600" stroke-width="0.6" />
<path d="M755.001 455.065L789.001 455.113" stroke="#a07600" stroke-width="0.9" />
<path d="M755.001 455.065L755.001 448.065" stroke="#a07600" stroke-width="0.7" />
<path d="M789.001 455.113L789.001 448.113" stroke="#a07600" stroke-width="0.7" />
<path d="M755 456.039L755 449.039" stroke="#a07600" stroke-width="0.6" />
<path d="M789 456.051L789 449.051" stroke="#a07600" stroke-width="0.6" />
<path d="M755 457L789 457" stroke="#a07600" stroke-width="0.9" />
<path d="M755 457L755 450" stroke="#a07600" stroke-width="0.7" />
<path d="M789 457L789 450" stroke="#a07600" stroke-width="0.7" />
<path d="M755 457L755 450" stroke="#a07600" stroke-width="0.6" />
<path d="M789 457L789 450" stroke="#a07600" stroke-width="0.6" />
<path d="M849 384 C840 402 818 418 800 426" stroke="#a07600" stroke-width="1" fill="none"/><path d="M838 385 C830 399 812 412 797 420" stroke="#a07600" stroke-width="1" fill="none"/>
<path d="M757 457L789 457" stroke="#a07600" stroke-width="0.9" />
<path d="M757 453.8L788.7 453.8" stroke="#a07600" stroke-width="0.9" />
<path d="M757 450.6L788.4 450.6" stroke="#a07600" stroke-width="0.9" />
<path d="M757 447.4L788.1 447.4" stroke="#a07600" stroke-width="0.9" />
<path d="M757 444.2L787.8 444.2" stroke="#a07600" stroke-width="0.9" />
<path d="M757 441L787.5 441" stroke="#a07600" stroke-width="0.9" />
<path d="M757 437.8L787.2 437.8" stroke="#a07600" stroke-width="0.9" />
<path d="M757 434.6L786.9 434.6" stroke="#a07600" stroke-width="0.9" />
<path d="M757 431.4L786.6 431.4" stroke="#a07600" stroke-width="0.9" />
<rect x="733" y="419" width="19.6" height="38.4" fill="none" stroke="#b4b4b4" stroke-width="1.3"/>
<rect x="735.2" y="421.2" width="15.2" height="36.2" fill="none" stroke="#9a9a9a" stroke-width="0.9"/>
<rect x="738" y="424.5" width="9.6" height="19.968" fill="none" stroke="#c6c6c6" stroke-width="1"/>
<rect x="737.5" y="448.4" width="10.6" height="3" fill="none" stroke="#b4b4b4" stroke-width="0.9"/>
<rect x="737.5" y="452.4" width="10.6" height="3" fill="none" stroke="#b4b4b4" stroke-width="0.9"/>
<rect x="835.4" y="419" width="19.1" height="38.4" fill="none" stroke="#b4b4b4" stroke-width="1.3"/>
<rect x="837.6" y="421.2" width="14.7" height="36.2" fill="none" stroke="#9a9a9a" stroke-width="0.9"/>
<rect x="840.4" y="424.5" width="9.1" height="19.968" fill="none" stroke="#c6c6c6" stroke-width="1"/>
<rect x="839.9" y="448.4" width="10.1" height="3" fill="none" stroke="#b4b4b4" stroke-width="0.9"/>
<rect x="839.9" y="452.4" width="10.1" height="3" fill="none" stroke="#b4b4b4" stroke-width="0.9"/>
<text x="617" y="457" font-size="6" fill="#64090d" font-weight="700" text-anchor="start" textLength="16" lengthAdjust="spacingAndGlyphs">TERAS</text>
<text x="689" y="455" font-size="6" fill="#64090d" font-weight="700" text-anchor="start" textLength="19" lengthAdjust="spacingAndGlyphs">R. TAMU</text>
<text x="994" y="375" font-size="6.5" fill="#64090d" font-weight="700" text-anchor="start" textLength="37" lengthAdjust="spacingAndGlyphs">+4.50 LANTAI II</text>
<text x="996" y="455" font-size="6.5" fill="#64090d" font-weight="700" text-anchor="start" textLength="38" lengthAdjust="spacingAndGlyphs">±0.00 LANTAI I</text>
<text x="996" y="500" font-size="6.5" fill="#64090d" font-weight="700" text-anchor="start" textLength="40" lengthAdjust="spacingAndGlyphs">-3.50 FOOTPLAT</text>
<rect x="601" y="458.5" width="4" height="2" fill="#1030ff" stroke="none" stroke-width="1"/>
<rect x="662.5" y="459" width="3" height="4" fill="#1030ff" stroke="none" stroke-width="1"/>
<rect x="872" y="459" width="3" height="4" fill="#1030ff" stroke="none" stroke-width="1"/>
<rect x="934.5" y="459" width="3" height="4" fill="#1030ff" stroke="none" stroke-width="1"/>
<text x="735.800" y="564.300" font-size="12.800" fill="#5e0609" stroke="#5e0609" stroke-width="0.350" textLength="112.500" lengthAdjust="spacingAndGlyphs">POTONGAN o2 - o2</text>
<path d="M735.8 567.3L848.3 567.3" stroke="#5e0609" stroke-width="1.6" />
<text x="738" y="577" font-size="6.5" fill="#5e0609" font-weight="700" text-anchor="start" textLength="16" lengthAdjust="spacingAndGlyphs">skala</text>
<text x="794" y="577" font-size="6.5" fill="#5e0609" font-weight="700" text-anchor="start" textLength="22" lengthAdjust="spacingAndGlyphs">1 :  100</text>
<path d="M607.5 711.4L607.5 1003" stroke="#a59f3f" stroke-width="1.2" />
<path d="M605 711.4L746.6 711.4" stroke="#a59f3f" stroke-width="1.2" />
<rect x="749" y="710.8" width="1.2" height="1.2" fill="#a59f3f" stroke="none" stroke-width="1"/>
<path d="M605 778.5L632.8 778.5" stroke="#a59f3f" stroke-width="1.2" />
<rect x="636" y="778" width="1.2" height="1.2" fill="#a59f3f" stroke="none" stroke-width="1"/>
<path d="M605 882.2L706.5 882.2" stroke="#a59f3f" stroke-width="1.2" />
<path d="M605 962.5L661 962.5" stroke="#a59f3f" stroke-width="1.2" />
<path d="M605 711.4L610 711.4" stroke="#a59f3f" stroke-width="1.6" />
<path d="M605 778.5L610 778.5" stroke="#a59f3f" stroke-width="1.6" />
<path d="M605 882.2L610 882.2" stroke="#a59f3f" stroke-width="1.6" />
<path d="M605 962.5L610 962.5" stroke="#a59f3f" stroke-width="1.6" />
<text x="604.5" y="745" font-size="6.5" fill="#b5af55" font-weight="400" text-anchor="middle" transform="rotate(-90 604.5 745)">3,75</text>
<text x="604.5" y="830" font-size="6.5" fill="#b5af55" font-weight="400" text-anchor="middle" transform="rotate(-90 604.5 830)">5,80</text>
<text x="604.5" y="922" font-size="6.5" fill="#b5af55" font-weight="400" text-anchor="middle" transform="rotate(-90 604.5 922)">4,50</text>
<text x="610" y="708" font-size="6.5" fill="#64090d" font-weight="700" text-anchor="start" textLength="28" lengthAdjust="spacingAndGlyphs">+11.55 NOK</text>
<text x="610" y="880" font-size="6.5" fill="#64090d" font-weight="700" text-anchor="start" textLength="36" lengthAdjust="spacingAndGlyphs">+4.50 LANTAI II</text>
<rect x="610" y="769.8" width="44.8" height="5.2" fill="#4a0609" stroke="none" stroke-width="1"/>
<rect x="751.2" y="873" width="33.8" height="4.8" fill="#4a0609" stroke="none" stroke-width="1"/>
<rect x="771" y="892" width="39" height="4.6" fill="#4a0609" stroke="none" stroke-width="1"/>
<rect x="612.3" y="954.4" width="37.7" height="4.4" fill="#4a0609" stroke="none" stroke-width="1"/>
<rect x="761.3" y="954.4" width="33.5" height="4.4" fill="#4a0609" stroke="none" stroke-width="1"/>
<text x="884" y="708.5" font-size="7" fill="#64090d" font-weight="700" text-anchor="start" textLength="70.5" lengthAdjust="spacingAndGlyphs">GENTENG METAL ROOF</text>
<text x="884" y="719.5" font-size="7" fill="#64090d" font-weight="700" text-anchor="start" textLength="61" lengthAdjust="spacingAndGlyphs">RANGKA ATAP BAJA</text>
<text x="884" y="727.8" font-size="7" fill="#64090d" font-weight="700" text-anchor="start" textLength="24" lengthAdjust="spacingAndGlyphs">RINGAN</text>
<text x="884" y="737.5" font-size="7" fill="#64090d" font-weight="700" text-anchor="start" textLength="56" lengthAdjust="spacingAndGlyphs">BETON PLAT ATAP</text>
<path d="M622 969.2L680 969.2" stroke="#a87c00" stroke-width="5" stroke-linecap="round"/>
<path d="M921 969.2L993.5 969.2" stroke="#a87c00" stroke-width="5" stroke-linecap="round"/>
<path d="M623 968.6L631 968.6" stroke="#d9c27a" stroke-width="1.2" />
<path d="M680 970.8L921 970.8" stroke="#a87c00" stroke-width="2.6" />
<rect x="680" y="963" width="241" height="6.2" fill="#aeaca0" stroke="none" stroke-width="1"/>
<path d="M680 966.1H921" stroke="#6f6647" stroke-width="6.2" stroke-dasharray="1.100 2"/>
<path d="M680 963L921 963" stroke="#a07600" stroke-width="1" />
<path d="M652.5 972L652.5 986L666.5 986L666.5 972" stroke="#a87c00" stroke-width="2.4" fill="none" />
<path d="M657.5 973L661 983L657 983L661.5 973" stroke="#a9a9a9" stroke-width="0.8" fill="none" />
<path d="M657 987L657 1002L650.5 1004L650.5 1008L668.5 1008L668.5 1004L662 1002L662 987" stroke="#c4c4c4" stroke-width="1" fill="none" />
<path d="M671.8 972L671.8 986L685.8 986L685.8 972" stroke="#a87c00" stroke-width="2.4" fill="none" />
<path d="M676.8 973L680.3 983L676.3 983L680.8 973" stroke="#a9a9a9" stroke-width="0.8" fill="none" />
<path d="M676.3 987L676.3 1002L669.8 1004L669.8 1008L687.8 1008L687.8 1004L681.3 1002L681.3 987" stroke="#c4c4c4" stroke-width="1" fill="none" />
<path d="M854.9 972L854.9 986L868.9 986L868.9 972" stroke="#a87c00" stroke-width="2.4" fill="none" />
<path d="M859.9 973L863.4 983L859.4 983L863.9 973" stroke="#a9a9a9" stroke-width="0.8" fill="none" />
<path d="M859.4 987L859.4 1002L852.9 1004L852.9 1008L870.9 1008L870.9 1004L864.4 1002L864.4 987" stroke="#c4c4c4" stroke-width="1" fill="none" />
<path d="M921.5 972L921.5 1003" stroke="#c4c4c4" stroke-width="1" />
<path d="M926 972L926 1003" stroke="#c4c4c4" stroke-width="1" />
<path d="M698 767.4L843 767.4" stroke="#a07600" stroke-width="3.2" />
<path d="M716.5 749.75L716.5 767" stroke="#a07600" stroke-width="2.2" />
<path d="M734.4 736.952L734.4 767" stroke="#a07600" stroke-width="2.2" />
<path d="M752 724.369L752 767" stroke="#a07600" stroke-width="2.2" />
<path d="M823.5 749.84L823.5 767" stroke="#a07600" stroke-width="2.2" />
<path d="M805.6 737.012L805.6 767" stroke="#a07600" stroke-width="2.2" />
<path d="M787.5 724.041L787.5 767" stroke="#a07600" stroke-width="2.2" />
<path d="M770 712L770 767" stroke="#a07600" stroke-width="2.2" />
<path d="M717.5 751.75L733.4 766" stroke="#a07600" stroke-width="2" />
<path d="M735.4 738.952L751 766" stroke="#a07600" stroke-width="2" />
<path d="M753 726.369L769 766" stroke="#a07600" stroke-width="2" />
<path d="M822.5 751.84L806.6 766" stroke="#a07600" stroke-width="2" />
<path d="M804.6 739.012L788.5 766" stroke="#a07600" stroke-width="2" />
<path d="M786.5 726.041L771 766" stroke="#a07600" stroke-width="2" />
<path d="M701 766L716 757" stroke="#a07600" stroke-width="1" />
<path d="M840 766L824 757" stroke="#a07600" stroke-width="1" />
<path d="M684.4 770.7L770 709.5" stroke="#a87c00" stroke-width="6.2" stroke-linecap="round"/>
<path d="M770 709.5L855.4 770.7" stroke="#a87c00" stroke-width="6.2" stroke-linecap="round"/>
<path d="M684 772.5L687 775L690 773.5" stroke="#a87c00" stroke-width="2" fill="none" />
<path d="M856 772.5L853 775L850 773.5" stroke="#a87c00" stroke-width="2" fill="none" />
<rect x="695" y="771" width="3.3" height="7.5" fill="#12dcdc" stroke="none" stroke-width="1"/>
<path d="M696.65 771V778.5" stroke="#1a6f78" stroke-opacity="0.450" stroke-width="1.98" stroke-dasharray="0.700 1.300"/>
<rect x="842.2" y="771" width="3.4" height="7.5" fill="#12dcdc" stroke="none" stroke-width="1"/>
<path d="M843.9 771V778.5" stroke="#1a6f78" stroke-opacity="0.450" stroke-width="2.04" stroke-dasharray="0.700 1.300"/>
<path d="M816.3 743.5L816.3 710L919.6 710" stroke="#a9a9a9" stroke-width="1.2" fill="none" />
<path d="M824.6 763L824.6 722.5L920.6 722.5" stroke="#a9a9a9" stroke-width="1.2" fill="none" />
<path d="M861.9 778.5L861.9 739.2L911.9 739.2" stroke="#a9a9a9" stroke-width="1.2" fill="none" />
<path d="M656 778.5L902 778.5" stroke="#a07600" stroke-width="1.3" />
<path d="M698 778.5L698 784L680 784" stroke="#a07600" stroke-width="1.2" fill="none" />
<path d="M656 778.5L660 783L664 785L667 790.5L677 790.5" stroke="#a07600" stroke-width="1.2" fill="none" />
<path d="M661 779.8L676.5 779.8L676.5 790L668 790L666 785L661 779.8" stroke="#a07600" stroke-width="1" fill="#2a3038" />
<rect x="676.0" y="780.8" width="1.300" height="1.200" fill="#9c9c9c"/>
<rect x="665.3" y="783.2" width="1.300" height="1.200" fill="#9c9c9c"/>
<rect x="666.2" y="782.7" width="1.300" height="1.200" fill="#c9c9c9"/>
<rect x="669.2" y="784.1" width="1.300" height="1.200" fill="#10151b"/>
<rect x="672.9" y="789.9" width="1.300" height="1.200" fill="#c9c9c9"/>
<rect x="673.7" y="786.1" width="1.300" height="1.200" fill="#10151b"/>
<rect x="669.2" y="780.1" width="1.300" height="1.200" fill="#c9c9c9"/>
<rect x="672.4" y="788.6" width="1.300" height="1.200" fill="#e8e8e8"/>
<rect x="666.9" y="783.3" width="1.300" height="1.200" fill="#9c9c9c"/>
<rect x="674.4" y="789.5" width="1.300" height="1.200" fill="#c9c9c9"/>
<rect x="665.3" y="782.5" width="1.300" height="1.200" fill="#c9c9c9"/>
<rect x="670.5" y="788.5" width="1.300" height="1.200" fill="#10151b"/>
<rect x="674.3" y="784.9" width="1.300" height="1.200" fill="#9c9c9c"/>
<rect x="667.7" y="780.7" width="1.300" height="1.200" fill="#10151b"/>
<rect x="670.6" y="787.6" width="1.300" height="1.200" fill="#9c9c9c"/>
<rect x="669.8" y="785.6" width="1.300" height="1.200" fill="#c9c9c9"/>
<rect x="673.1" y="784.0" width="1.300" height="1.200" fill="#c9c9c9"/>
<rect x="665.0" y="781.2" width="1.300" height="1.200" fill="#9c9c9c"/>
<rect x="662.6" y="780.3" width="1.300" height="1.200" fill="#c9c9c9"/>
<rect x="676.4" y="783.3" width="1.300" height="1.200" fill="#10151b"/>
<rect x="668.3" y="787.1" width="1.300" height="1.200" fill="#e8e8e8"/>
<rect x="673.5" y="780.7" width="1.300" height="1.200" fill="#e8e8e8"/>
<rect x="668.9" y="788.6" width="1.300" height="1.200" fill="#10151b"/>
<rect x="673.6" y="789.3" width="1.300" height="1.200" fill="#e8e8e8"/>
<rect x="672.9" y="787.6" width="1.300" height="1.200" fill="#e8e8e8"/>
<rect x="675.8" y="783.2" width="1.300" height="1.200" fill="#e8e8e8"/>
<rect x="676.3" y="789.8" width="1.300" height="1.200" fill="#10151b"/>
<rect x="669.1" y="786.2" width="1.300" height="1.200" fill="#9c9c9c"/>
<rect x="666.4" y="780.1" width="1.300" height="1.200" fill="#c9c9c9"/>
<rect x="670.8" y="786.0" width="1.300" height="1.200" fill="#c9c9c9"/>
<rect x="674.3" y="786.9" width="1.300" height="1.200" fill="#9c9c9c"/>
<rect x="664.7" y="783.3" width="1.300" height="1.200" fill="#9c9c9c"/>
<rect x="667.7" y="787.4" width="1.300" height="1.200" fill="#e8e8e8"/>
<rect x="664.5" y="782.1" width="1.300" height="1.200" fill="#9c9c9c"/>
<rect x="672.2" y="782.6" width="1.300" height="1.200" fill="#9c9c9c"/>
<rect x="675.8" y="781.6" width="1.300" height="1.200" fill="#e8e8e8"/>
<rect x="675.9" y="785.0" width="1.300" height="1.200" fill="#c9c9c9"/>
<rect x="667.6" y="785.2" width="1.300" height="1.200" fill="#c9c9c9"/>
<rect x="669.7" y="785.2" width="1.300" height="1.200" fill="#c9c9c9"/>
<rect x="674.7" y="783.7" width="1.300" height="1.200" fill="#9c9c9c"/>
<rect x="671.7" y="787.0" width="1.300" height="1.200" fill="#9c9c9c"/>
<rect x="676.2" y="781.1" width="1.300" height="1.200" fill="#10151b"/>
<rect x="670.6" y="780.0" width="1.300" height="1.200" fill="#e8e8e8"/>
<rect x="675.6" y="788.1" width="1.300" height="1.200" fill="#c9c9c9"/>
<rect x="669.8" y="789.3" width="1.300" height="1.200" fill="#10151b"/>
<rect x="668.1" y="784.4" width="1.300" height="1.200" fill="#c9c9c9"/>
<rect x="669.7" y="785.1" width="1.300" height="1.200" fill="#10151b"/>
<rect x="672.9" y="782.4" width="1.300" height="1.200" fill="#c9c9c9"/>
<rect x="669.5" y="783.3" width="1.300" height="1.200" fill="#e8e8e8"/>
<rect x="673.4" y="787.5" width="1.300" height="1.200" fill="#10151b"/>
<rect x="667.6" y="785.3" width="1.300" height="1.200" fill="#e8e8e8"/>
<rect x="666.6" y="784.8" width="1.300" height="1.200" fill="#e8e8e8"/>
<rect x="670.2" y="781.8" width="1.300" height="1.200" fill="#c9c9c9"/>
<rect x="672.5" y="788.7" width="1.300" height="1.200" fill="#c9c9c9"/>
<rect x="669.1" y="786.1" width="1.300" height="1.200" fill="#10151b"/>
<rect x="674.7" y="785.2" width="1.300" height="1.200" fill="#10151b"/>
<rect x="674.3" y="781.7" width="1.300" height="1.200" fill="#10151b"/>
<rect x="670.0" y="788.5" width="1.300" height="1.200" fill="#9c9c9c"/>
<rect x="665.5" y="781.6" width="1.300" height="1.200" fill="#10151b"/>
<rect x="674.2" y="782.8" width="1.300" height="1.200" fill="#c9c9c9"/>
<rect x="672.4" y="780.4" width="1.300" height="1.200" fill="#9c9c9c"/>
<rect x="675.8" y="789.4" width="1.300" height="1.200" fill="#9c9c9c"/>
<rect x="671.7" y="781.8" width="1.300" height="1.200" fill="#c9c9c9"/>
<rect x="673.2" y="789.0" width="1.300" height="1.200" fill="#9c9c9c"/>
<rect x="673.1" y="783.8" width="1.300" height="1.200" fill="#c9c9c9"/>
<rect x="661.7" y="780.3" width="1.300" height="1.200" fill="#9c9c9c"/>
<rect x="667.4" y="784.4" width="1.300" height="1.200" fill="#9c9c9c"/>
<rect x="675.3" y="790.0" width="1.300" height="1.200" fill="#e8e8e8"/>
<rect x="673.4" y="783.2" width="1.300" height="1.200" fill="#9c9c9c"/>
<rect x="670.4" y="786.7" width="1.300" height="1.200" fill="#e8e8e8"/>
<rect x="673.6" y="786.0" width="1.300" height="1.200" fill="#9c9c9c"/>
<rect x="675.6" y="780.3" width="1.300" height="1.200" fill="#9c9c9c"/>
<rect x="675.6" y="789.7" width="1.300" height="1.200" fill="#10151b"/>
<rect x="670.6" y="781.8" width="1.300" height="1.200" fill="#e8e8e8"/>
<rect x="671.2" y="780.6" width="1.300" height="1.200" fill="#e8e8e8"/>
<rect x="664.4" y="780.1" width="1.300" height="1.200" fill="#9c9c9c"/>
<rect x="673.5" y="780.9" width="1.300" height="1.200" fill="#9c9c9c"/>
<rect x="668.1" y="788.1" width="1.300" height="1.200" fill="#10151b"/>
<rect x="666.0" y="780.9" width="1.300" height="1.200" fill="#c9c9c9"/>
<rect x="671.0" y="786.0" width="1.300" height="1.200" fill="#e8e8e8"/>
<rect x="675.2" y="785.1" width="1.300" height="1.200" fill="#9c9c9c"/>
<rect x="672.6" y="787.8" width="1.300" height="1.200" fill="#9c9c9c"/>
<rect x="675.3" y="780.6" width="1.300" height="1.200" fill="#9c9c9c"/>
<rect x="674.3" y="787.0" width="1.300" height="1.200" fill="#e8e8e8"/>
<rect x="662.7" y="780.5" width="1.300" height="1.200" fill="#c9c9c9"/>
<rect x="673.9" y="781.6" width="1.300" height="1.200" fill="#9c9c9c"/>
<rect x="673.3" y="781.9" width="1.300" height="1.200" fill="#10151b"/>
<rect x="671.8" y="785.3" width="1.300" height="1.200" fill="#9c9c9c"/>
<rect x="676.2" y="781.7" width="1.300" height="1.200" fill="#e8e8e8"/>
<rect x="673.2" y="788.6" width="1.300" height="1.200" fill="#e8e8e8"/>
<rect x="672.8" y="784.2" width="1.300" height="1.200" fill="#e8e8e8"/>
<rect x="675.0" y="783.2" width="1.300" height="1.200" fill="#9c9c9c"/>
<rect x="668.3" y="787.8" width="1.300" height="1.200" fill="#9c9c9c"/>
<rect x="670.6" y="788.2" width="1.300" height="1.200" fill="#c9c9c9"/>
<rect x="672.9" y="787.5" width="1.300" height="1.200" fill="#9c9c9c"/>
<rect x="672.8" y="781.9" width="1.300" height="1.200" fill="#e8e8e8"/>
<rect x="670.5" y="785.0" width="1.300" height="1.200" fill="#c9c9c9"/>
<rect x="676.4" y="786.9" width="1.300" height="1.200" fill="#e8e8e8"/>
<rect x="665.8" y="781.5" width="1.300" height="1.200" fill="#10151b"/>
<rect x="665.2" y="782.1" width="1.300" height="1.200" fill="#e8e8e8"/>
<rect x="671.6" y="783.9" width="1.300" height="1.200" fill="#10151b"/>
<rect x="666.7" y="783.5" width="1.300" height="1.200" fill="#10151b"/>
<rect x="670.9" y="789.8" width="1.300" height="1.200" fill="#e8e8e8"/>
<rect x="670.8" y="783.1" width="1.300" height="1.200" fill="#9c9c9c"/>
<rect x="668.1" y="789.8" width="1.300" height="1.200" fill="#e8e8e8"/>
<rect x="667.4" y="780.2" width="1.300" height="1.200" fill="#9c9c9c"/>
<rect x="672.0" y="788.2" width="1.300" height="1.200" fill="#c9c9c9"/>
<rect x="668.6" y="788.4" width="1.300" height="1.200" fill="#e8e8e8"/>
<rect x="668.9" y="782.9" width="1.300" height="1.200" fill="#c9c9c9"/>
<path d="M843 778.5L843 784L862 784" stroke="#a07600" stroke-width="1.2" fill="none" />
<path d="M902 778.5L897 783L893 784.5L891 789L873 791L864 791" stroke="#a07600" stroke-width="1.2" fill="none" />
<path d="M873 785L896 785" stroke="#a07600" stroke-width="1" />
<path d="M872 787.5L892 787.5" stroke="#a07600" stroke-width="0.8" />
<path d="M864.5 779.8L879 779.8L872 789L864.5 790L864.5 779.8" stroke="#a07600" stroke-width="1" fill="#2a3038" />
<rect x="873.3" y="784.1" width="1.300" height="1.200" fill="#10151b"/>
<rect x="864.8" y="780.7" width="1.300" height="1.200" fill="#e8e8e8"/>
<rect x="876.8" y="782.4" width="1.300" height="1.200" fill="#10151b"/>
<rect x="865.4" y="782.8" width="1.300" height="1.200" fill="#9c9c9c"/>
<rect x="865.4" y="781.8" width="1.300" height="1.200" fill="#e8e8e8"/>
<rect x="872.0" y="782.3" width="1.300" height="1.200" fill="#c9c9c9"/>
<rect x="872.5" y="779.9" width="1.300" height="1.200" fill="#9c9c9c"/>
<rect x="870.3" y="788.0" width="1.300" height="1.200" fill="#10151b"/>
<rect x="866.6" y="786.7" width="1.300" height="1.200" fill="#c9c9c9"/>
<rect x="874.5" y="780.9" width="1.300" height="1.200" fill="#e8e8e8"/>
<rect x="872.1" y="788.4" width="1.300" height="1.200" fill="#10151b"/>
<rect x="875.4" y="783.9" width="1.300" height="1.200" fill="#e8e8e8"/>
<rect x="871.5" y="782.9" width="1.300" height="1.200" fill="#10151b"/>
<rect x="870.5" y="784.0" width="1.300" height="1.200" fill="#10151b"/>
<rect x="874.1" y="782.2" width="1.300" height="1.200" fill="#c9c9c9"/>
<rect x="867.5" y="785.4" width="1.300" height="1.200" fill="#10151b"/>
<rect x="872.4" y="786.6" width="1.300" height="1.200" fill="#c9c9c9"/>
<rect x="873.8" y="785.9" width="1.300" height="1.200" fill="#9c9c9c"/>
<rect x="872.2" y="787.6" width="1.300" height="1.200" fill="#10151b"/>
<rect x="876.9" y="782.4" width="1.300" height="1.200" fill="#c9c9c9"/>
<rect x="874.6" y="780.0" width="1.300" height="1.200" fill="#10151b"/>
<rect x="869.7" y="783.7" width="1.300" height="1.200" fill="#10151b"/>
<rect x="874.5" y="782.7" width="1.300" height="1.200" fill="#c9c9c9"/>
<rect x="868.1" y="785.1" width="1.300" height="1.200" fill="#e8e8e8"/>
<rect x="868.4" y="786.9" width="1.300" height="1.200" fill="#c9c9c9"/>
<rect x="868.8" y="787.7" width="1.300" height="1.200" fill="#9c9c9c"/>
<rect x="868.2" y="786.7" width="1.300" height="1.200" fill="#9c9c9c"/>
<rect x="871.0" y="788.7" width="1.300" height="1.200" fill="#10151b"/>
<rect x="872.3" y="787.1" width="1.300" height="1.200" fill="#9c9c9c"/>
<rect x="872.8" y="782.6" width="1.300" height="1.200" fill="#e8e8e8"/>
<rect x="874.6" y="780.1" width="1.300" height="1.200" fill="#9c9c9c"/>
<rect x="869.0" y="787.9" width="1.300" height="1.200" fill="#e8e8e8"/>
<rect x="867.8" y="787.0" width="1.300" height="1.200" fill="#c9c9c9"/>
<rect x="869.0" y="787.1" width="1.300" height="1.200" fill="#10151b"/>
<rect x="867.1" y="785.2" width="1.300" height="1.200" fill="#e8e8e8"/>
<rect x="871.4" y="782.8" width="1.300" height="1.200" fill="#e8e8e8"/>
<rect x="870.6" y="787.4" width="1.300" height="1.200" fill="#e8e8e8"/>
<rect x="866.8" y="787.0" width="1.300" height="1.200" fill="#10151b"/>
<rect x="866.7" y="780.6" width="1.300" height="1.200" fill="#9c9c9c"/>
<rect x="869.9" y="780.0" width="1.300" height="1.200" fill="#10151b"/>
<rect x="877.9" y="780.9" width="1.300" height="1.200" fill="#10151b"/>
<rect x="871.6" y="784.1" width="1.300" height="1.200" fill="#e8e8e8"/>
<rect x="869.5" y="788.2" width="1.300" height="1.200" fill="#10151b"/>
<rect x="865.4" y="786.4" width="1.300" height="1.200" fill="#10151b"/>
<rect x="875.2" y="782.2" width="1.300" height="1.200" fill="#10151b"/>
<rect x="871.5" y="784.1" width="1.300" height="1.200" fill="#c9c9c9"/>
<rect x="871.3" y="781.4" width="1.300" height="1.200" fill="#9c9c9c"/>
<rect x="874.0" y="786.0" width="1.300" height="1.200" fill="#10151b"/>
<rect x="866.8" y="782.4" width="1.300" height="1.200" fill="#10151b"/>
<rect x="868.2" y="783.5" width="1.300" height="1.200" fill="#c9c9c9"/>
<rect x="872.0" y="787.4" width="1.300" height="1.200" fill="#e8e8e8"/>
<rect x="868.9" y="785.5" width="1.300" height="1.200" fill="#c9c9c9"/>
<rect x="865.4" y="788.7" width="1.300" height="1.200" fill="#e8e8e8"/>
<rect x="867.6" y="785.0" width="1.300" height="1.200" fill="#9c9c9c"/>
<rect x="866.1" y="780.5" width="1.300" height="1.200" fill="#c9c9c9"/>
<rect x="869.4" y="780.9" width="1.300" height="1.200" fill="#c9c9c9"/>
<rect x="875.6" y="783.1" width="1.300" height="1.200" fill="#9c9c9c"/>
<rect x="869.0" y="785.8" width="1.300" height="1.200" fill="#e8e8e8"/>
<rect x="871.2" y="781.4" width="1.300" height="1.200" fill="#c9c9c9"/>
<rect x="865.0" y="786.5" width="1.300" height="1.200" fill="#10151b"/>
<rect x="869.7" y="783.0" width="1.300" height="1.200" fill="#e8e8e8"/>
<rect x="871.6" y="784.1" width="1.300" height="1.200" fill="#c9c9c9"/>
<rect x="870.4" y="783.5" width="1.300" height="1.200" fill="#e8e8e8"/>
<rect x="867.2" y="782.5" width="1.300" height="1.200" fill="#9c9c9c"/>
<rect x="867.1" y="787.4" width="1.300" height="1.200" fill="#c9c9c9"/>
<rect x="869.4" y="789.3" width="1.300" height="1.200" fill="#c9c9c9"/>
<rect x="865.4" y="780.2" width="1.300" height="1.200" fill="#10151b"/>
<rect x="867.6" y="785.6" width="1.300" height="1.200" fill="#c9c9c9"/>
<rect x="871.3" y="787.5" width="1.300" height="1.200" fill="#9c9c9c"/>
<rect x="873.1" y="781.7" width="1.300" height="1.200" fill="#c9c9c9"/>
<rect x="866.4" y="788.5" width="1.300" height="1.200" fill="#e8e8e8"/>
<rect x="868.4" y="786.5" width="1.300" height="1.200" fill="#e8e8e8"/>
<rect x="872.6" y="784.5" width="1.300" height="1.200" fill="#e8e8e8"/>
<rect x="871.6" y="780.4" width="1.300" height="1.200" fill="#9c9c9c"/>
<rect x="868.4" y="783.9" width="1.300" height="1.200" fill="#10151b"/>
<rect x="868.4" y="788.2" width="1.300" height="1.200" fill="#c9c9c9"/>
<rect x="870.4" y="789.0" width="1.300" height="1.200" fill="#9c9c9c"/>
<rect x="871.7" y="784.1" width="1.300" height="1.200" fill="#9c9c9c"/>
<rect x="865.9" y="787.5" width="1.300" height="1.200" fill="#9c9c9c"/>
<rect x="868.6" y="789.4" width="1.300" height="1.200" fill="#9c9c9c"/>
<rect x="870.7" y="781.9" width="1.300" height="1.200" fill="#c9c9c9"/>
<rect x="872.7" y="782.8" width="1.300" height="1.200" fill="#e8e8e8"/>
<rect x="876.8" y="781.9" width="1.300" height="1.200" fill="#e8e8e8"/>
<rect x="865.9" y="783.8" width="1.300" height="1.200" fill="#9c9c9c"/>
<rect x="868.7" y="788.4" width="1.300" height="1.200" fill="#9c9c9c"/>
<rect x="868.7" y="784.7" width="1.300" height="1.200" fill="#c9c9c9"/>
<rect x="875.0" y="784.6" width="1.300" height="1.200" fill="#10151b"/>
<rect x="872.0" y="787.5" width="1.300" height="1.200" fill="#e8e8e8"/>
<rect x="874.1" y="785.5" width="1.300" height="1.200" fill="#9c9c9c"/>
<rect x="865.0" y="782.4" width="1.300" height="1.200" fill="#e8e8e8"/>
<rect x="865.6" y="783.7" width="1.300" height="1.200" fill="#c9c9c9"/>
<rect x="872.9" y="782.3" width="1.300" height="1.200" fill="#10151b"/>
<rect x="871.3" y="788.9" width="1.300" height="1.200" fill="#c9c9c9"/>
<rect x="872.9" y="787.7" width="1.300" height="1.200" fill="#e8e8e8"/>
<rect x="871.6" y="786.7" width="1.300" height="1.200" fill="#10151b"/>
<rect x="866.5" y="788.6" width="1.300" height="1.200" fill="#c9c9c9"/>
<rect x="865.8" y="786.1" width="1.300" height="1.200" fill="#e8e8e8"/>
<rect x="872.7" y="783.0" width="1.300" height="1.200" fill="#10151b"/>
<rect x="868.1" y="787.5" width="1.300" height="1.200" fill="#9c9c9c"/>
<rect x="870.9" y="781.2" width="1.300" height="1.200" fill="#9c9c9c"/>
<rect x="677" y="783.4" width="3.5" height="181.6" fill="#12dcdc" stroke="none" stroke-width="1"/>
<path d="M678.75 783.4V965" stroke="#1a6f78" stroke-opacity="0.450" stroke-width="2.1" stroke-dasharray="0.700 1.300"/>
<path d="M680.8 783L680.8 963" stroke="#a07600" stroke-width="0.9" />
<rect x="676.5" y="826" width="4.5" height="4" fill="#a87c00" stroke="none" stroke-width="1"/>
<rect x="665.3" y="791" width="11.8" height="4" rx="1.500" fill="none" stroke="#b5b5b5" stroke-width="1"/>
<path d="M670.3 792L670.3 794" stroke="#8c8c8c" stroke-width="0.7" />
<path d="M674.1 792L674.1 794" stroke="#8c8c8c" stroke-width="0.7" />
<rect x="668.8" y="795" width="6.8" height="16" fill="none" stroke="#b5b5b5" stroke-width="1"/>
<path d="M670.8 795L670.8 811" stroke="#8c8c8c" stroke-width="0.7" />
<path d="M673.6 795L673.6 811" stroke="#8c8c8c" stroke-width="0.7" />
<rect x="665.3" y="811" width="11.8" height="6" rx="1.500" fill="none" stroke="#b5b5b5" stroke-width="1"/>
<path d="M670.3 812L670.3 816" stroke="#8c8c8c" stroke-width="0.7" />
<path d="M674.1 812L674.1 816" stroke="#8c8c8c" stroke-width="0.7" />
<rect x="667.8" y="817" width="8.8" height="5" fill="#9a9a9a" stroke="#b5b5b5" stroke-width="0.8"/>
<rect x="668.8" y="822" width="6.8" height="31" fill="none" stroke="#b5b5b5" stroke-width="1"/>
<path d="M670.8 822L670.8 853" stroke="#8c8c8c" stroke-width="0.7" />
<path d="M673.6 822L673.6 853" stroke="#8c8c8c" stroke-width="0.7" />
<rect x="665.3" y="853" width="11.8" height="26.5" rx="1.500" fill="none" stroke="#b5b5b5" stroke-width="1"/>
<path d="M670.3 854L670.3 878.5" stroke="#8c8c8c" stroke-width="0.7" />
<path d="M674.1 854L674.1 878.5" stroke="#8c8c8c" stroke-width="0.7" />
<rect x="665.3" y="884.5" width="11.8" height="20.5" rx="1.500" fill="none" stroke="#b5b5b5" stroke-width="1"/>
<path d="M670.3 885.5L670.3 904" stroke="#8c8c8c" stroke-width="0.7" />
<path d="M674.1 885.5L674.1 904" stroke="#8c8c8c" stroke-width="0.7" />
<rect x="667.8" y="905" width="8.8" height="6" fill="#9a9a9a" stroke="#b5b5b5" stroke-width="0.8"/>
<rect x="668.8" y="911" width="6.8" height="29" fill="none" stroke="#b5b5b5" stroke-width="1"/>
<path d="M670.8 911L670.8 940" stroke="#8c8c8c" stroke-width="0.7" />
<path d="M673.6 911L673.6 940" stroke="#8c8c8c" stroke-width="0.7" />
<rect x="665.3" y="940" width="11.8" height="6" rx="1.500" fill="none" stroke="#b5b5b5" stroke-width="1"/>
<path d="M670.3 941L670.3 945" stroke="#8c8c8c" stroke-width="0.7" />
<path d="M674.1 941L674.1 945" stroke="#8c8c8c" stroke-width="0.7" />
<path d="M668.8 946L668.8 962.5" stroke="#b5b5b5" stroke-width="1" />
<path d="M675.6 946L675.6 962.5" stroke="#b5b5b5" stroke-width="1.2" />
<rect x="664" y="880" width="14" height="3.4" fill="none" stroke="#a07600" stroke-width="1"/>
<rect x="654.6" y="909" width="3.4" height="56.3" fill="#12dcdc" stroke="none" stroke-width="1"/>
<path d="M656.3 909V965.3" stroke="#1a6f78" stroke-opacity="0.450" stroke-width="2.04" stroke-dasharray="0.700 1.300"/>
<rect x="654.2" y="906.5" width="4.2" height="2.8" fill="#a87c00" stroke="none" stroke-width="1"/>
<path d="M749.5 778.5L749.5 843" stroke="#a07600" stroke-width="1.2" />
<path d="M806.5 778.5L806.5 882" stroke="#a07600" stroke-width="1.2" />
<path d="M750.4 889L750.4 962.5" stroke="#a07600" stroke-width="1.2" />
<path d="M807 889L807 962.5" stroke="#a07600" stroke-width="1.2" />
<rect x="860.3" y="783" width="3.5" height="42" fill="#12dcdc" stroke="none" stroke-width="1"/>
<path d="M862.05 783V825" stroke="#1a6f78" stroke-opacity="0.450" stroke-width="2.1" stroke-dasharray="0.700 1.300"/>
<rect x="860.3" y="825" width="3.5" height="5" fill="#a87c00" stroke="none" stroke-width="1"/>
<path d="M860.8 830L860.8 882" stroke="#a07600" stroke-width="1.1" />
<path d="M862.8 830L862.8 882" stroke="#8d8d8d" stroke-width="1" />
<rect x="860.7" y="889" width="2.9" height="16.3" fill="#12dcdc" stroke="none" stroke-width="1"/>
<path d="M862.15 889V905.3" stroke="#1a6f78" stroke-opacity="0.450" stroke-width="1.74" stroke-dasharray="0.700 1.300"/>
<rect x="860.7" y="905.3" width="3" height="4.5" fill="#a87c00" stroke="none" stroke-width="1"/>
<path d="M860.8 910L860.8 962.5" stroke="#a07600" stroke-width="1.1" />
<path d="M862.8 910L862.8 962.5" stroke="#8d8d8d" stroke-width="1" />
<path d="M680.5 801.9L918 801.9" stroke="#a07600" stroke-width="1.5" stroke-dasharray="4.200 6.500"/>
<text x="741" y="808" font-size="6.5" fill="#64090d" font-weight="700" text-anchor="start" textLength="38" lengthAdjust="spacingAndGlyphs">PLAFOND +8.55</text>
<path d="M754 812L793 812L793 802.5" stroke="#a9a9a9" stroke-width="1.2" fill="none" />
<path d="M787 804.500q6-4.500 12 0" stroke="#a9a9a9" stroke-width="1" fill="none"/>
<path d="M863 792.3L948 792.3" stroke="#a87c00" stroke-width="2.4" />
<path d="M864 804.8L920 804.8" stroke="#a07600" stroke-width="1.2" />
<path d="M926 794L947 794L941 799L936 804.5L926 804.5L926 794" stroke="#a07600" stroke-width="1" fill="#2a3038" />
<rect x="934.0" y="802.3" width="1.300" height="1.200" fill="#10151b"/>
<rect x="926.2" y="803.9" width="1.300" height="1.200" fill="#c9c9c9"/>
<rect x="926.8" y="799.5" width="1.300" height="1.200" fill="#9c9c9c"/>
<rect x="927.9" y="803.1" width="1.300" height="1.200" fill="#c9c9c9"/>
<rect x="931.2" y="804.0" width="1.300" height="1.200" fill="#e8e8e8"/>
<rect x="935.8" y="802.5" width="1.300" height="1.200" fill="#e8e8e8"/>
<rect x="928.5" y="802.6" width="1.300" height="1.200" fill="#e8e8e8"/>
<rect x="930.2" y="795.6" width="1.300" height="1.200" fill="#9c9c9c"/>
<rect x="928.6" y="795.8" width="1.300" height="1.200" fill="#9c9c9c"/>
<rect x="939.8" y="799.6" width="1.300" height="1.200" fill="#e8e8e8"/>
<rect x="939.3" y="795.1" width="1.300" height="1.200" fill="#10151b"/>
<rect x="937.9" y="794.9" width="1.300" height="1.200" fill="#9c9c9c"/>
<rect x="930.9" y="794.2" width="1.300" height="1.200" fill="#9c9c9c"/>
<rect x="932.3" y="797.8" width="1.300" height="1.200" fill="#e8e8e8"/>
<rect x="926.6" y="794.8" width="1.300" height="1.200" fill="#e8e8e8"/>
<rect x="933.2" y="794.9" width="1.300" height="1.200" fill="#c9c9c9"/>
<rect x="943.3" y="794.5" width="1.300" height="1.200" fill="#c9c9c9"/>
<rect x="933.6" y="801.3" width="1.300" height="1.200" fill="#9c9c9c"/>
<rect x="935.9" y="804.4" width="1.300" height="1.200" fill="#9c9c9c"/>
<rect x="931.9" y="794.9" width="1.300" height="1.200" fill="#c9c9c9"/>
<rect x="936.6" y="796.3" width="1.300" height="1.200" fill="#9c9c9c"/>
<rect x="932.6" y="795.3" width="1.300" height="1.200" fill="#10151b"/>
<rect x="928.0" y="800.0" width="1.300" height="1.200" fill="#10151b"/>
<rect x="933.9" y="797.1" width="1.300" height="1.200" fill="#10151b"/>
<rect x="933.6" y="795.7" width="1.300" height="1.200" fill="#c9c9c9"/>
<rect x="938.4" y="795.2" width="1.300" height="1.200" fill="#c9c9c9"/>
<rect x="933.5" y="802.0" width="1.300" height="1.200" fill="#e8e8e8"/>
<rect x="937.0" y="796.9" width="1.300" height="1.200" fill="#9c9c9c"/>
<rect x="928.0" y="799.9" width="1.300" height="1.200" fill="#9c9c9c"/>
<rect x="928.6" y="796.3" width="1.300" height="1.200" fill="#e8e8e8"/>
<rect x="926.5" y="800.4" width="1.300" height="1.200" fill="#e8e8e8"/>
<rect x="940.3" y="794.4" width="1.300" height="1.200" fill="#e8e8e8"/>
<rect x="934.1" y="801.4" width="1.300" height="1.200" fill="#c9c9c9"/>
<rect x="940.7" y="794.2" width="1.300" height="1.200" fill="#e8e8e8"/>
<rect x="942.2" y="794.0" width="1.300" height="1.200" fill="#c9c9c9"/>
<rect x="939.3" y="795.5" width="1.300" height="1.200" fill="#9c9c9c"/>
<rect x="929.2" y="796.7" width="1.300" height="1.200" fill="#e8e8e8"/>
<rect x="927.6" y="797.9" width="1.300" height="1.200" fill="#10151b"/>
<rect x="927.9" y="799.7" width="1.300" height="1.200" fill="#10151b"/>
<rect x="934.7" y="795.1" width="1.300" height="1.200" fill="#e8e8e8"/>
<rect x="926.9" y="803.1" width="1.300" height="1.200" fill="#e8e8e8"/>
<rect x="936.6" y="794.7" width="1.300" height="1.200" fill="#9c9c9c"/>
<rect x="939.8" y="797.0" width="1.300" height="1.200" fill="#e8e8e8"/>
<rect x="939.1" y="794.0" width="1.300" height="1.200" fill="#9c9c9c"/>
<rect x="938.6" y="801.3" width="1.300" height="1.200" fill="#e8e8e8"/>
<rect x="935.3" y="795.8" width="1.300" height="1.200" fill="#10151b"/>
<rect x="932.5" y="794.1" width="1.300" height="1.200" fill="#10151b"/>
<rect x="932.6" y="794.3" width="1.300" height="1.200" fill="#9c9c9c"/>
<rect x="935.2" y="802.3" width="1.300" height="1.200" fill="#9c9c9c"/>
<rect x="931.8" y="803.9" width="1.300" height="1.200" fill="#10151b"/>
<rect x="934.2" y="798.0" width="1.300" height="1.200" fill="#e8e8e8"/>
<rect x="941.7" y="796.8" width="1.300" height="1.200" fill="#9c9c9c"/>
<rect x="934.7" y="797.6" width="1.300" height="1.200" fill="#9c9c9c"/>
<rect x="938.3" y="797.9" width="1.300" height="1.200" fill="#10151b"/>
<rect x="931.8" y="802.0" width="1.300" height="1.200" fill="#9c9c9c"/>
<rect x="927.7" y="797.2" width="1.300" height="1.200" fill="#e8e8e8"/>
<rect x="940.2" y="796.0" width="1.300" height="1.200" fill="#c9c9c9"/>
<rect x="943.1" y="795.6" width="1.300" height="1.200" fill="#c9c9c9"/>
<rect x="939.4" y="794.2" width="1.300" height="1.200" fill="#e8e8e8"/>
<rect x="931.0" y="803.9" width="1.300" height="1.200" fill="#10151b"/>
<rect x="936.4" y="797.4" width="1.300" height="1.200" fill="#e8e8e8"/>
<rect x="933.0" y="803.8" width="1.300" height="1.200" fill="#10151b"/>
<rect x="931.9" y="801.8" width="1.300" height="1.200" fill="#9c9c9c"/>
<rect x="928.9" y="797.7" width="1.300" height="1.200" fill="#e8e8e8"/>
<rect x="932.9" y="794.8" width="1.300" height="1.200" fill="#9c9c9c"/>
<rect x="933.2" y="802.8" width="1.300" height="1.200" fill="#c9c9c9"/>
<rect x="933.4" y="795.2" width="1.300" height="1.200" fill="#e8e8e8"/>
<rect x="933.4" y="799.2" width="1.300" height="1.200" fill="#e8e8e8"/>
<rect x="942.5" y="794.4" width="1.300" height="1.200" fill="#9c9c9c"/>
<rect x="937.0" y="795.5" width="1.300" height="1.200" fill="#10151b"/>
<rect x="928.1" y="803.5" width="1.300" height="1.200" fill="#9c9c9c"/>
<rect x="928.1" y="798.8" width="1.300" height="1.200" fill="#e8e8e8"/>
<rect x="929.7" y="797.1" width="1.300" height="1.200" fill="#10151b"/>
<rect x="934.2" y="800.2" width="1.300" height="1.200" fill="#9c9c9c"/>
<rect x="935.5" y="803.6" width="1.300" height="1.200" fill="#10151b"/>
<rect x="930.1" y="799.1" width="1.300" height="1.200" fill="#9c9c9c"/>
<rect x="931.6" y="797.1" width="1.300" height="1.200" fill="#9c9c9c"/>
<rect x="935.8" y="796.5" width="1.300" height="1.200" fill="#10151b"/>
<rect x="929.3" y="796.7" width="1.300" height="1.200" fill="#9c9c9c"/>
<rect x="929.8" y="801.6" width="1.300" height="1.200" fill="#9c9c9c"/>
<rect x="937.8" y="797.5" width="1.300" height="1.200" fill="#10151b"/>
<rect x="936.0" y="801.8" width="1.300" height="1.200" fill="#c9c9c9"/>
<rect x="931.6" y="800.6" width="1.300" height="1.200" fill="#c9c9c9"/>
<rect x="930.1" y="803.3" width="1.300" height="1.200" fill="#c9c9c9"/>
<rect x="930.9" y="796.0" width="1.300" height="1.200" fill="#e8e8e8"/>
<rect x="929.5" y="803.3" width="1.300" height="1.200" fill="#10151b"/>
<rect x="935.7" y="800.4" width="1.300" height="1.200" fill="#e8e8e8"/>
<rect x="934.7" y="795.7" width="1.300" height="1.200" fill="#9c9c9c"/>
<rect x="929.8" y="797.0" width="1.300" height="1.200" fill="#9c9c9c"/>
<rect x="941.1" y="795.9" width="1.300" height="1.200" fill="#10151b"/>
<rect x="934.4" y="797.7" width="1.300" height="1.200" fill="#c9c9c9"/>
<rect x="930.5" y="801.2" width="1.300" height="1.200" fill="#c9c9c9"/>
<rect x="934.1" y="798.5" width="1.300" height="1.200" fill="#c9c9c9"/>
<rect x="933.7" y="794.5" width="1.300" height="1.200" fill="#9c9c9c"/>
<rect x="939.1" y="796.1" width="1.300" height="1.200" fill="#10151b"/>
<rect x="929.4" y="794.2" width="1.300" height="1.200" fill="#e8e8e8"/>
<rect x="933.6" y="803.6" width="1.300" height="1.200" fill="#c9c9c9"/>
<rect x="926.9" y="795.4" width="1.300" height="1.200" fill="#e8e8e8"/>
<rect x="930.0" y="801.6" width="1.300" height="1.200" fill="#10151b"/>
<rect x="928.9" y="796.3" width="1.300" height="1.200" fill="#c9c9c9"/>
<rect x="938.1" y="798.9" width="1.300" height="1.200" fill="#9c9c9c"/>
<rect x="944.1" y="794.3" width="1.300" height="1.200" fill="#c9c9c9"/>
<rect x="928.3" y="798.9" width="1.300" height="1.200" fill="#9c9c9c"/>
<rect x="926.7" y="799.4" width="1.300" height="1.200" fill="#e8e8e8"/>
<rect x="933.7" y="799.9" width="1.300" height="1.200" fill="#10151b"/>
<rect x="938.1" y="799.7" width="1.300" height="1.200" fill="#10151b"/>
<rect x="935.2" y="801.2" width="1.300" height="1.200" fill="#c9c9c9"/>
<rect x="936.1" y="796.9" width="1.300" height="1.200" fill="#10151b"/>
<rect x="936.8" y="800.0" width="1.300" height="1.200" fill="#c9c9c9"/>
<rect x="937.4" y="799.6" width="1.300" height="1.200" fill="#10151b"/>
<rect x="937.0" y="803.1" width="1.300" height="1.200" fill="#9c9c9c"/>
<rect x="939.5" y="800.4" width="1.300" height="1.200" fill="#9c9c9c"/>
<rect x="928.1" y="795.3" width="1.300" height="1.200" fill="#e8e8e8"/>
<rect x="931.6" y="803.3" width="1.300" height="1.200" fill="#10151b"/>
<rect x="926.9" y="797.4" width="1.300" height="1.200" fill="#10151b"/>
<rect x="933.0" y="795.8" width="1.300" height="1.200" fill="#9c9c9c"/>
<rect x="933.9" y="802.1" width="1.300" height="1.200" fill="#9c9c9c"/>
<rect x="935.2" y="797.6" width="1.300" height="1.200" fill="#10151b"/>
<rect x="933.8" y="804.4" width="1.300" height="1.200" fill="#c9c9c9"/>
<rect x="941.4" y="797.4" width="1.300" height="1.200" fill="#c9c9c9"/>
<rect x="934.2" y="803.6" width="1.300" height="1.200" fill="#9c9c9c"/>
<rect x="932.2" y="802.9" width="1.300" height="1.200" fill="#10151b"/>
<rect x="934.8" y="801.6" width="1.300" height="1.200" fill="#e8e8e8"/>
<rect x="932.7" y="799.8" width="1.300" height="1.200" fill="#c9c9c9"/>
<rect x="927.4" y="798.5" width="1.300" height="1.200" fill="#9c9c9c"/>
<rect x="941.9" y="794.5" width="1.300" height="1.200" fill="#10151b"/>
<rect x="926.1" y="795.8" width="1.300" height="1.200" fill="#10151b"/>
<rect x="928.6" y="802.5" width="1.300" height="1.200" fill="#9c9c9c"/>
<rect x="931.3" y="798.3" width="1.300" height="1.200" fill="#9c9c9c"/>
<rect x="928.2" y="794.6" width="1.300" height="1.200" fill="#10151b"/>
<rect x="934.7" y="802.0" width="1.300" height="1.200" fill="#c9c9c9"/>
<rect x="927.7" y="803.2" width="1.300" height="1.200" fill="#e8e8e8"/>
<rect x="930.3" y="798.0" width="1.300" height="1.200" fill="#10151b"/>
<rect x="927.1" y="800.4" width="1.300" height="1.200" fill="#e8e8e8"/>
<rect x="928.2" y="803.2" width="1.300" height="1.200" fill="#e8e8e8"/>
<rect x="935.2" y="796.8" width="1.300" height="1.200" fill="#e8e8e8"/>
<rect x="929.4" y="800.9" width="1.300" height="1.200" fill="#e8e8e8"/>
<rect x="939.0" y="794.8" width="1.300" height="1.200" fill="#10151b"/>
<rect x="937.9" y="795.8" width="1.300" height="1.200" fill="#10151b"/>
<rect x="941.7" y="795.1" width="1.300" height="1.200" fill="#10151b"/>
<rect x="926.4" y="799.0" width="1.300" height="1.200" fill="#c9c9c9"/>
<rect x="934.5" y="798.6" width="1.300" height="1.200" fill="#c9c9c9"/>
<rect x="939.6" y="795.1" width="1.300" height="1.200" fill="#9c9c9c"/>
<rect x="933.3" y="804.2" width="1.300" height="1.200" fill="#10151b"/>
<rect x="932.8" y="796.4" width="1.300" height="1.200" fill="#9c9c9c"/>
<rect x="937.9" y="798.7" width="1.300" height="1.200" fill="#e8e8e8"/>
<rect x="935.7" y="803.6" width="1.300" height="1.200" fill="#e8e8e8"/>
<rect x="920.6" y="760.5" width="4.4" height="30.5" fill="#12dcdc" stroke="none" stroke-width="1"/>
<path d="M922.8 760.5V791" stroke="#1a6f78" stroke-opacity="0.450" stroke-width="2.64" stroke-dasharray="0.700 1.300"/>
<path d="M920.6 760L927.7 760" stroke="#a07600" stroke-width="1" />
<rect x="925" y="760" width="2.7" height="31" fill="#a87c00" stroke="none" stroke-width="1"/>
<rect x="917.5" y="805" width="12" height="11" fill="none" stroke="#a07600" stroke-width="1"/>
<path d="M918 807.5L929 807.5" stroke="#a07600" stroke-width="1" />
<path d="M918 810L929 810" stroke="#a07600" stroke-width="1" />
<rect x="920" y="811" width="7" height="5" fill="#a07600" stroke="none" stroke-width="1"/>
<path d="M919 816L919 935" stroke="#a07600" stroke-width="1.2" />
<path d="M927.5 816L927.5 935" stroke="#a07600" stroke-width="1.2" />
<rect x="916.5" y="935" width="13" height="27.5" fill="none" stroke="#a07600" stroke-width="1.2"/>
<rect x="919" y="940" width="8" height="12.5" fill="none" stroke="#a07600" stroke-width="1"/>
<path d="M916.5 938L929.5 938" stroke="#a07600" stroke-width="1" />
<path d="M916.5 955L929.5 955" stroke="#a07600" stroke-width="1" />
<path d="M882 805L882 814" stroke="#b5b5b5" stroke-width="1" />
<path d="M889.5 805L889.5 814" stroke="#b5b5b5" stroke-width="1.2" />
<rect x="879.5" y="814" width="12.5" height="4" rx="1.500" fill="none" stroke="#b5b5b5" stroke-width="1"/>
<path d="M883.5 815L883.5 817" stroke="#8c8c8c" stroke-width="0.7" />
<path d="M888 815L888 817" stroke="#8c8c8c" stroke-width="0.7" />
<rect x="881" y="818" width="9.5" height="6" fill="#9a9a9a" stroke="#b5b5b5" stroke-width="0.8"/>
<rect x="882" y="824" width="7.5" height="30" fill="none" stroke="#b5b5b5" stroke-width="1"/>
<path d="M884 824L884 854" stroke="#8c8c8c" stroke-width="0.7" />
<path d="M887.5 824L887.5 854" stroke="#8c8c8c" stroke-width="0.7" />
<rect x="879.5" y="854" width="12.5" height="4" rx="1.500" fill="none" stroke="#b5b5b5" stroke-width="1"/>
<path d="M883.5 855L883.5 857" stroke="#8c8c8c" stroke-width="0.7" />
<path d="M888 855L888 857" stroke="#8c8c8c" stroke-width="0.7" />
<path d="M882 858L882 861" stroke="#b5b5b5" stroke-width="1" />
<path d="M889.5 858L889.5 861" stroke="#b5b5b5" stroke-width="1.2" />
<path d="M882 889L882 900" stroke="#b5b5b5" stroke-width="1" />
<path d="M890.5 889L890.5 900" stroke="#b5b5b5" stroke-width="1.2" />
<rect x="879.5" y="900" width="13.5" height="3" rx="1.500" fill="none" stroke="#b5b5b5" stroke-width="1"/>
<path d="M883.5 901L883.5 902" stroke="#8c8c8c" stroke-width="0.7" />
<path d="M889 901L889 902" stroke="#8c8c8c" stroke-width="0.7" />
<rect x="881" y="903" width="10.5" height="6" fill="#9a9a9a" stroke="#b5b5b5" stroke-width="0.8"/>
<rect x="882" y="909" width="8.5" height="31" fill="none" stroke="#b5b5b5" stroke-width="1"/>
<path d="M884 909L884 940" stroke="#8c8c8c" stroke-width="0.7" />
<path d="M888.5 909L888.5 940" stroke="#8c8c8c" stroke-width="0.7" />
<rect x="879.5" y="940" width="13.5" height="6" rx="1.500" fill="none" stroke="#b5b5b5" stroke-width="1"/>
<path d="M883.5 941L883.5 945" stroke="#8c8c8c" stroke-width="0.7" />
<path d="M889 941L889 945" stroke="#8c8c8c" stroke-width="0.7" />
<path d="M882 946L882 962.5" stroke="#b5b5b5" stroke-width="1" />
<path d="M890.5 946L890.5 962.5" stroke="#b5b5b5" stroke-width="1.2" />
<path d="M728 883.8L917 883.8" stroke="#a87c00" stroke-width="3.8" />
<path d="M733 889L913 889" stroke="#a07600" stroke-width="1.1" />
<path d="M738 891.6L913 891.6" stroke="#a07600" stroke-width="1" stroke-dasharray="3 4"/>
<path d="M729.5 884L729.5 889.5" stroke="#a87c00" stroke-width="2.4" />
<path d="M769 884L769 889.5" stroke="#a87c00" stroke-width="2.4" />
<path d="M808 884L808 889.5" stroke="#a87c00" stroke-width="2.4" />
<rect x="913" y="882" width="3.5" height="15" fill="#a87c00" stroke="none" stroke-width="1"/>
<path d="M863.5 862.7L917 862.7" stroke="#a87c00" stroke-width="3" />
<rect x="909" y="861" width="8" height="3.5" fill="#a87c00" stroke="none" stroke-width="1"/>
<path d="M865.5 865 C865.5 870 863 872 863.4 877 C863.6 880 865 881 865.5 881.500 M868.5 865 C868.5 870 871 872 870.6 877 C870.4 880 869 881 868.5 881.500" stroke="#c2c2c2" stroke-width="1" fill="none"/>
<path d="M874.7 865 C874.7 870 872.2 872 872.6 877 C872.8000000000001 880 874.2 881 874.7 881.500 M877.7 865 C877.7 870 880.2 872 879.8000000000001 877 C879.6 880 878.2 881 877.7 881.500" stroke="#c2c2c2" stroke-width="1" fill="none"/>
<path d="M884.0 865 C884.0 870 881.5 872 881.9 877 C882.1 880 883.5 881 884.0 881.500 M887.0 865 C887.0 870 889.5 872 889.1 877 C888.9 880 887.5 881 887.0 881.500" stroke="#c2c2c2" stroke-width="1" fill="none"/>
<path d="M893.2 865 C893.2 870 890.7 872 891.1 877 C891.3000000000001 880 892.7 881 893.2 881.500 M896.2 865 C896.2 870 898.7 872 898.3000000000001 877 C898.1 880 896.7 881 896.2 881.500" stroke="#c2c2c2" stroke-width="1" fill="none"/>
<path d="M902.5 865 C902.5 870 900 872 900.4 877 C900.6 880 902 881 902.5 881.500 M905.5 865 C905.5 870 908 872 907.6 877 C907.4 880 906 881 905.5 881.500" stroke="#c2c2c2" stroke-width="1" fill="none"/>
<path d="M911.7 865 C911.7 870 909.2 872 909.6 877 C909.8000000000001 880 911.2 881 911.7 881.500 M914.7 865 C914.7 870 917.2 872 916.8000000000001 877 C916.6 880 915.2 881 914.7 881.500" stroke="#c2c2c2" stroke-width="1" fill="none"/>
<path d="M785.5 900.6L823.2 900.6L823.2 892.5" stroke="#a9a9a9" stroke-width="1.2" fill="none" />
<path d="M817 894.500q6-4.500 12 0" stroke="#a9a9a9" stroke-width="1" fill="none"/>
<rect x="875.9" y="873" width="20.8" height="4.8" fill="#4a0609" stroke="none" stroke-width="1"/>
<rect x="730.5" y="843.7" width="18.5" height="37.9" fill="none" stroke="#b4b4b4" stroke-width="1.3"/>
<rect x="732.7" y="845.9" width="14.1" height="35.7" fill="none" stroke="#9a9a9a" stroke-width="0.9"/>
<rect x="735.5" y="849.2" width="8.5" height="19.708" fill="none" stroke="#c6c6c6" stroke-width="1"/>
<rect x="735" y="872.6" width="9.5" height="3" fill="none" stroke="#b4b4b4" stroke-width="0.9"/>
<rect x="735" y="876.6" width="9.5" height="3" fill="none" stroke="#b4b4b4" stroke-width="0.9"/>
<path d="M731 870C708 876 684 892 683 912C683 930 715 945 733 961.5" stroke="#a07600" stroke-width="1.4" fill="none"/>
<path d="M731 889C716 894 708 903 708 913C709 925 728 938 734 949" stroke="#a07600" stroke-width="1.4" fill="none"/>
<path d="M731 863C708 869 684 885 683 905C683 923 715 938 733 954.5" stroke="#a07600" stroke-width="1.3" fill="none"/>
<path d="M731 882C716 887 708 896 708 906C709 918 728 931 734 942" stroke="#a07600" stroke-width="1.3" fill="none"/>
<path d="M731 864.5C708 870.5 684 886.5 683 906.5C683 924.5 715 939.5 733 956" stroke="#a07600" stroke-width="0.7" fill="none"/>
<path d="M731 883.5C716 888.5 708 897.5 708 907.5C709 919.5 728 932.5 734 943.5" stroke="#a07600" stroke-width="0.7" fill="none"/>
<path d="M731 870L731 889" stroke="#a07600" stroke-width="0.9" />
<path d="M731 870L731 863" stroke="#a07600" stroke-width="0.7" />
<path d="M731 889L731 882" stroke="#a07600" stroke-width="0.7" />
<path d="M728.122 870.802L728.122 863.802" stroke="#a07600" stroke-width="0.6" />
<path d="M729.162 889.646L729.162 882.646" stroke="#a07600" stroke-width="0.6" />
<path d="M725.243 871.705L727.396 890.332" stroke="#a07600" stroke-width="0.9" />
<path d="M725.243 871.705L725.243 864.705" stroke="#a07600" stroke-width="0.7" />
<path d="M727.396 890.332L727.396 883.332" stroke="#a07600" stroke-width="0.7" />
<path d="M722.375 872.707L722.375 865.707" stroke="#a07600" stroke-width="0.6" />
<path d="M725.705 891.057L725.705 884.057" stroke="#a07600" stroke-width="0.6" />
<path d="M719.528 873.806L724.088 891.819" stroke="#a07600" stroke-width="0.9" />
<path d="M719.528 873.806L719.528 866.806" stroke="#a07600" stroke-width="0.7" />
<path d="M724.088 891.819L724.088 884.819" stroke="#a07600" stroke-width="0.7" />
<path d="M716.712 874.998L716.712 867.998" stroke="#a07600" stroke-width="0.6" />
<path d="M722.546 892.619L722.546 885.619" stroke="#a07600" stroke-width="0.6" />
<path d="M713.938 876.281L721.078 893.453" stroke="#a07600" stroke-width="0.9" />
<path d="M713.938 876.281L713.938 869.281" stroke="#a07600" stroke-width="0.7" />
<path d="M721.078 893.453L721.078 886.453" stroke="#a07600" stroke-width="0.7" />
<path d="M711.215 877.653L711.215 870.653" stroke="#a07600" stroke-width="0.6" />
<path d="M719.686 894.321L719.686 887.321" stroke="#a07600" stroke-width="0.6" />
<path d="M708.556 879.111L718.37 895.222" stroke="#a07600" stroke-width="0.9" />
<path d="M708.556 879.111L708.556 872.111" stroke="#a07600" stroke-width="0.7" />
<path d="M718.37 895.222L718.37 888.222" stroke="#a07600" stroke-width="0.7" />
<path d="M705.969 880.652L705.969 873.652" stroke="#a07600" stroke-width="0.6" />
<path d="M717.131 896.154L717.131 889.154" stroke="#a07600" stroke-width="0.6" />
<path d="M703.465 882.274L715.968 897.116" stroke="#a07600" stroke-width="0.9" />
<path d="M703.465 882.274L703.465 875.274" stroke="#a07600" stroke-width="0.7" />
<path d="M715.968 897.116L715.968 890.116" stroke="#a07600" stroke-width="0.7" />
<path d="M701.056 883.974L701.056 876.974" stroke="#a07600" stroke-width="0.6" />
<path d="M714.883 898.107L714.883 891.107" stroke="#a07600" stroke-width="0.6" />
<path d="M698.75 885.75L713.875 899.125" stroke="#a07600" stroke-width="0.9" />
<path d="M698.75 885.75L698.75 878.75" stroke="#a07600" stroke-width="0.7" />
<path d="M713.875 899.125L713.875 892.125" stroke="#a07600" stroke-width="0.7" />
<path d="M696.559 887.599L696.559 880.599" stroke="#a07600" stroke-width="0.6" />
<path d="M712.945 900.169L712.945 893.169" stroke="#a07600" stroke-width="0.6" />
<path d="M694.493 889.517L712.094 901.238" stroke="#a07600" stroke-width="0.9" />
<path d="M694.493 889.517L694.493 882.517" stroke="#a07600" stroke-width="0.7" />
<path d="M712.094 901.238L712.094 894.238" stroke="#a07600" stroke-width="0.7" />
<path d="M692.562 891.504L692.562 884.504" stroke="#a07600" stroke-width="0.6" />
<path d="M711.322 902.33L711.322 895.33" stroke="#a07600" stroke-width="0.6" />
<path d="M690.778 893.556L710.63 903.444" stroke="#a07600" stroke-width="0.9" />
<path d="M690.778 893.556L690.778 886.556" stroke="#a07600" stroke-width="0.7" />
<path d="M710.63 903.444L710.63 896.444" stroke="#a07600" stroke-width="0.7" />
<path d="M689.149 895.67L689.149 888.67" stroke="#a07600" stroke-width="0.6" />
<path d="M710.017 904.58L710.017 897.58" stroke="#a07600" stroke-width="0.6" />
<path d="M687.688 897.844L709.484 905.734" stroke="#a07600" stroke-width="0.9" />
<path d="M687.688 897.844L687.688 890.844" stroke="#a07600" stroke-width="0.7" />
<path d="M709.484 905.734L709.484 898.734" stroke="#a07600" stroke-width="0.7" />
<path d="M686.403 900.075L686.403 893.075" stroke="#a07600" stroke-width="0.6" />
<path d="M709.033 906.907L709.033 899.907" stroke="#a07600" stroke-width="0.6" />
<path d="M685.306 902.361L708.662 908.097" stroke="#a07600" stroke-width="0.9" />
<path d="M685.306 902.361L685.306 895.361" stroke="#a07600" stroke-width="0.7" />
<path d="M708.662 908.097L708.662 901.097" stroke="#a07600" stroke-width="0.7" />
<path d="M684.406 904.699L684.406 897.699" stroke="#a07600" stroke-width="0.6" />
<path d="M708.373 909.303L708.373 902.303" stroke="#a07600" stroke-width="0.6" />
<path d="M683.715 907.087L708.166 910.523" stroke="#a07600" stroke-width="0.9" />
<path d="M683.715 907.087L683.715 900.087" stroke="#a07600" stroke-width="0.7" />
<path d="M708.166 910.523L708.166 903.523" stroke="#a07600" stroke-width="0.7" />
<path d="M683.243 909.521L683.243 902.521" stroke="#a07600" stroke-width="0.6" />
<path d="M708.042 911.755L708.042 904.755" stroke="#a07600" stroke-width="0.6" />
<path d="M683 912L708 913" stroke="#a07600" stroke-width="0.9" />
<path d="M683 912L683 905" stroke="#a07600" stroke-width="0.7" />
<path d="M708 913L708 906" stroke="#a07600" stroke-width="0.7" />
<path d="M683.163 914.235L683.163 907.235" stroke="#a07600" stroke-width="0.6" />
<path d="M708.217 914.505L708.217 907.505" stroke="#a07600" stroke-width="0.6" />
<path d="M683.64 916.44L708.607 916.019" stroke="#a07600" stroke-width="0.9" />
<path d="M683.64 916.44L683.64 909.44" stroke="#a07600" stroke-width="0.7" />
<path d="M708.607 916.019L708.607 909.019" stroke="#a07600" stroke-width="0.7" />
<path d="M684.41 918.618L684.41 911.618" stroke="#a07600" stroke-width="0.6" />
<path d="M709.158 917.541L709.158 910.541" stroke="#a07600" stroke-width="0.6" />
<path d="M685.454 920.771L709.856 919.069" stroke="#a07600" stroke-width="0.9" />
<path d="M685.454 920.771L685.454 913.771" stroke="#a07600" stroke-width="0.7" />
<path d="M709.856 919.069L709.856 912.069" stroke="#a07600" stroke-width="0.7" />
<path d="M686.751 922.9L686.751 915.9" stroke="#a07600" stroke-width="0.6" />
<path d="M710.688 920.603L710.688 913.603" stroke="#a07600" stroke-width="0.6" />
<path d="M688.281 925.008L711.641 922.141" stroke="#a07600" stroke-width="0.9" />
<path d="M688.281 925.008L688.281 918.008" stroke="#a07600" stroke-width="0.7" />
<path d="M711.641 922.141L711.641 915.141" stroke="#a07600" stroke-width="0.7" />
<path d="M690.025 927.096L690.025 920.096" stroke="#a07600" stroke-width="0.6" />
<path d="M712.7 923.681L712.7 916.681" stroke="#a07600" stroke-width="0.6" />
<path d="M691.963 929.167L713.852 925.222" stroke="#a07600" stroke-width="0.9" />
<path d="M691.963 929.167L691.963 922.167" stroke="#a07600" stroke-width="0.7" />
<path d="M713.852 925.222L713.852 918.222" stroke="#a07600" stroke-width="0.7" />
<path d="M694.074 931.222L694.074 924.222" stroke="#a07600" stroke-width="0.6" />
<path d="M715.084 926.764L715.084 919.764" stroke="#a07600" stroke-width="0.6" />
<path d="M696.339 933.263L716.383 928.304" stroke="#a07600" stroke-width="0.9" />
<path d="M696.339 933.263L696.339 926.263" stroke="#a07600" stroke-width="0.7" />
<path d="M716.383 928.304L716.383 921.304" stroke="#a07600" stroke-width="0.7" />
<path d="M698.738 935.293L698.738 928.293" stroke="#a07600" stroke-width="0.6" />
<path d="M717.734 929.841L717.734 922.841" stroke="#a07600" stroke-width="0.6" />
<path d="M701.25 937.312L719.125 931.375" stroke="#a07600" stroke-width="0.9" />
<path d="M701.25 937.312L701.25 930.312" stroke="#a07600" stroke-width="0.7" />
<path d="M719.125 931.375L719.125 924.375" stroke="#a07600" stroke-width="0.7" />
<path d="M703.856 939.325L703.856 932.325" stroke="#a07600" stroke-width="0.6" />
<path d="M720.542 932.903L720.542 925.903" stroke="#a07600" stroke-width="0.6" />
<path d="M706.536 941.331L721.972 934.425" stroke="#a07600" stroke-width="0.9" />
<path d="M706.536 941.331L706.536 934.331" stroke="#a07600" stroke-width="0.7" />
<path d="M721.972 934.425L721.972 927.425" stroke="#a07600" stroke-width="0.7" />
<path d="M709.27 943.333L709.27 936.333" stroke="#a07600" stroke-width="0.6" />
<path d="M723.4 935.939L723.4 928.939" stroke="#a07600" stroke-width="0.6" />
<path d="M712.037 945.333L724.815 937.444" stroke="#a07600" stroke-width="0.9" />
<path d="M712.037 945.333L712.037 938.333" stroke="#a07600" stroke-width="0.7" />
<path d="M724.815 937.444L724.815 930.444" stroke="#a07600" stroke-width="0.7" />
<path d="M714.818 947.334L714.818 940.334" stroke="#a07600" stroke-width="0.6" />
<path d="M726.201 938.939L726.201 931.939" stroke="#a07600" stroke-width="0.6" />
<path d="M717.594 949.336L727.547 940.422" stroke="#a07600" stroke-width="0.9" />
<path d="M717.594 949.336L717.594 942.336" stroke="#a07600" stroke-width="0.7" />
<path d="M727.547 940.422L727.547 933.422" stroke="#a07600" stroke-width="0.7" />
<path d="M720.343 951.342L720.343 944.342" stroke="#a07600" stroke-width="0.6" />
<path d="M728.838 941.892L728.838 934.892" stroke="#a07600" stroke-width="0.6" />
<path d="M723.046 953.354L730.06 943.347" stroke="#a07600" stroke-width="0.9" />
<path d="M723.046 953.354L723.046 946.354" stroke="#a07600" stroke-width="0.7" />
<path d="M730.06 943.347L730.06 936.347" stroke="#a07600" stroke-width="0.7" />
<path d="M725.684 955.374L725.684 948.374" stroke="#a07600" stroke-width="0.6" />
<path d="M731.201 944.787L731.201 937.787" stroke="#a07600" stroke-width="0.6" />
<path d="M728.235 957.404L732.247 946.21" stroke="#a07600" stroke-width="0.9" />
<path d="M728.235 957.404L728.235 950.404" stroke="#a07600" stroke-width="0.7" />
<path d="M732.247 946.21L732.247 939.21" stroke="#a07600" stroke-width="0.7" />
<path d="M730.68 959.445L730.68 952.445" stroke="#a07600" stroke-width="0.6" />
<path d="M733.185 947.615L733.185 940.615" stroke="#a07600" stroke-width="0.6" />
<path d="M733 961.5L734 949" stroke="#a07600" stroke-width="0.9" />
<path d="M733 961.5L733 954.5" stroke="#a07600" stroke-width="0.7" />
<path d="M734 949L734 942" stroke="#a07600" stroke-width="0.7" />
<path d="M733 961.5L733 954.5" stroke="#a07600" stroke-width="0.6" />
<path d="M734 949L734 942" stroke="#a07600" stroke-width="0.6" />
<path d="M733 961L734 949" stroke="#a07600" stroke-width="1.2" />
<path d="M685 924L712 924" stroke="#a07600" stroke-width="1" />
<path d="M690.5 928.6L715 928.6" stroke="#a07600" stroke-width="1" />
<path d="M696 933.2L718 933.2" stroke="#a07600" stroke-width="1" />
<path d="M701.5 937.8L721 937.8" stroke="#a07600" stroke-width="1" />
<path d="M707 942.4L724 942.4" stroke="#a07600" stroke-width="1" />
<path d="M712.5 947L727 947" stroke="#a07600" stroke-width="1" />
<path d="M718 951.6L730 951.6" stroke="#a07600" stroke-width="1" />
<path d="M723.5 956.2L733 956.2" stroke="#a07600" stroke-width="1" />
<text x="888" y="960" font-size="6" fill="#64090d" font-weight="700" text-anchor="start" textLength="16" lengthAdjust="spacingAndGlyphs">TERAS</text>
<rect x="655" y="966" width="2.5" height="3" fill="#1030ff" stroke="none" stroke-width="1"/>
<rect x="678" y="965" width="3" height="4.5" fill="#1030ff" stroke="none" stroke-width="1"/>
<rect x="860.8" y="965" width="2.5" height="4" fill="#1030ff" stroke="none" stroke-width="1"/>
<rect x="922" y="964.5" width="4" height="2" fill="#1030ff" stroke="none" stroke-width="1"/></g>
<path d="M1851 190.500h10" stroke="#f0f0f0" stroke-width="2.400"/><rect x="1872" y="185.500" width="7" height="7" fill="none" stroke="#f0f0f0" stroke-width="1.800"/><path d="M1874.500 185v-2h7.500v7.500h-2.500" fill="none" stroke="#f0f0f0" stroke-width="1.300"/><path d="M1891 184l8 8m0-8l-8 8" stroke="#f0f0f0" stroke-width="2.200"/>
<circle cx="1829.200" cy="278.800" r="53.500" fill="none" stroke="#474747" stroke-width="12.600"/>
<rect x="1803.500" y="253" width="51.500" height="51.500" fill="#a6acb2"/><rect x="1813" y="263" width="32" height="32" fill="#999ea4"/>
<path d="M1839.500 372h7l-3.500 4.500z" fill="none" stroke="#5c5c5c" stroke-width="0.900"/>
<circle cx="1902" cy="414.500" r="2.600" fill="none" stroke="#515355" stroke-width="0.900"/><path d="M1900.500 413l3 3m0-3l-3 3" stroke="#515355" stroke-width="0.700"/><circle cx="1902" cy="614.500" r="2.600" fill="none" stroke="#515355" stroke-width="0.900"/><path d="M1900.500 614h3l-1.500 2z" fill="#515355"/>
<path d="M1881.500 439a10.500 10.500 0 0 1 10.500-10.500h10.500v10.500a10.500 10.500 0 0 1-21 0z" fill="none" stroke="#515355" stroke-width="1.300"/><circle cx="1892" cy="439" r="6.500" fill="none" stroke="#515355" stroke-width="1.200"/><path d="M1886.500 443.500l-2.500 3M1897.500 443.500l2.500 3" stroke="#515355" stroke-width="1"/>
<path d="M1889.500 458h5l-2.500 2.500z" fill="#515355"/>
<path d="M1889.500 528h5l-2.500 2.500z" fill="#515355"/>
<path d="M1889.500 566h5l-2.500 2.500z" fill="#515355"/>
<path d="M1884 484c-2-3-4-4.500-2.500-5.500s3 1 4.500 2.500v-8c0-2 2.500-2 2.500 0v-2c0-2 2.500-2 2.500 0v2c0-2 2.500-2 2.500 0v2.500c0-2 2.500-1.800 2.500 0v8c0 4-2 7.500-6 7.500s-4.500-3.500-6-7z" fill="none" stroke="#515355" stroke-width="1.200"/>
<path d="M1881 498l11 11M1896 498l-15 15" stroke="#515355" stroke-width="1.200"/><path d="M1880.500 497.500h4M1880.500 497.500v4M1896.500 497.500h-4M1896.500 497.500v4M1880.500 513.500h4M1880.500 513.500v-4" stroke="#515355" stroke-width="1.200"/><circle cx="1897.500" cy="513" r="4" fill="none" stroke="#515355" stroke-width="1.200"/><path d="M1900.500 516l3.500 3.500" stroke="#515355" stroke-width="2"/>
<path d="M1889.500 556v-13h-3l5-6 5 6h-3v13z" fill="none" stroke="#515355" stroke-width="1.200"/><ellipse cx="1892" cy="548.500" rx="10.500" ry="4" fill="none" stroke="#515355" stroke-width="1.200"/><path d="M1883 552.500l3.500-2v4z" fill="#515355"/>
<rect x="1880.500" y="578.500" width="5.500" height="5.500" fill="none" stroke="#515355" stroke-width="1"/><rect x="1888.500" y="578.500" width="5.500" height="5.500" fill="none" stroke="#515355" stroke-width="1"/><rect x="1896.500" y="578.500" width="5.500" height="5.500" fill="none" stroke="#515355" stroke-width="1"/><rect x="1880.500" y="587.500" width="15.500" height="12.500" fill="none" stroke="#515355" stroke-width="1.100"/><path d="M1885 590l7 4-7 4z" fill="#515355"/>
<path d="M20.500 932v45.500M25 981.500h45.500" stroke="#f0f0f0" stroke-width="1.100"/><rect x="16.500" y="977.500" width="8" height="8" fill="none" stroke="#f0f0f0" stroke-width="1.100"/><path d="M22.500 915l5.500 6.500 5.500-6.500M28 921.500v6.500" stroke="#f0f0f0" stroke-width="1.100" fill="none"/><path d="M75.500 968.500l12 12m0-12l-12 12" stroke="#f0f0f0" stroke-width="1.100"/>
</svg>
<div id="cmdline" style="position:absolute;left:583px;top:803px;width:755px;height:27px;">
<div class="" style="position:absolute;left:0px;top:0.5px;width:54px;height:26px;background:rgba(74,74,74,0.900);border:1px solid #6a6a6a;border-right:none;border-radius:3px 0 0 3px;box-sizing:border-box;"></div>
<div class="" style="position:absolute;left:54px;top:1px;width:700px;height:25.5px;background:rgba(199,199,199,0.950);border-radius:0 2px 2px 0;"></div>
<svg width="755" height="27" viewBox="583 976 755 27" style="position:absolute;left:0;top:0;overflow:visible">
<rect x="587" y="981" width="1.500" height="1.500" fill="#b8b8b8"/><rect x="590" y="981" width="1.500" height="1.500" fill="#b8b8b8"/>
<rect x="587" y="984" width="1.500" height="1.500" fill="#b8b8b8"/><rect x="590" y="984" width="1.500" height="1.500" fill="#b8b8b8"/>
<rect x="587" y="987" width="1.500" height="1.500" fill="#b8b8b8"/><rect x="590" y="987" width="1.500" height="1.500" fill="#b8b8b8"/>
<rect x="587" y="990" width="1.500" height="1.500" fill="#b8b8b8"/><rect x="590" y="990" width="1.500" height="1.500" fill="#b8b8b8"/>
<rect x="587" y="993" width="1.500" height="1.500" fill="#b8b8b8"/><rect x="590" y="993" width="1.500" height="1.500" fill="#b8b8b8"/>
<rect x="587" y="996" width="1.500" height="1.500" fill="#b8b8b8"/><rect x="590" y="996" width="1.500" height="1.500" fill="#b8b8b8"/>
<path d="M599.500 985.500l7 7m0-7l-7 7" stroke="#ececec" stroke-width="2"/>
<path d="M624.500 987.500l7 7" stroke="#f0f0f0" stroke-width="2.800" stroke-linecap="round"/><path d="M619.300 985.200a3.900 3.900 0 0 0 6.600 2.700a3.900 3.900 0 0 0 -2.700-6.600l2 2.600-1.300 2-2.300 0.300z" fill="#f0f0f0" stroke="#f0f0f0" stroke-width="0.800"/>
<rect x="642.500" y="982.500" width="14" height="13" fill="#9b9b9b" stroke="#6f6f6f" stroke-width="1"/><path d="M645 985.500l4 3.500-4 3.500M650.500 993h4" stroke="#2c2c2c" stroke-width="1.200" fill="none"/><path d="M660 986.500h6l-3 3.500z" fill="#5a5a5a"/><path d="M1325 991.500h8l-4-4z" fill="#2a2a2a"/>
</svg>
<span class="t " style="left:90px;top:6.00px;font-size:13px;line-height:16px;color:#8b8b8b;font-style:italic;font-family:'Liberation Mono', monospace;transform:scaleX(0.8973);">Type a command</span>
</div>
<span class="t " style="left:4px;top:7.00px;font-size:12px;line-height:15px;color:#f0f0f0;transform:scaleX(1.0219);">[−][Top][2D Wireframe]</span>
<span class="t " style="left:1818px;top:97.00px;font-size:14px;line-height:18px;color:#484d53;font-weight:700;transform:scaleX(0.7712);">TOP</span>
<span class="t " style="left:1822px;top:37.00px;font-size:22px;line-height:28px;color:#b4b4b4;font-weight:700;transform:scaleX(0.8812);">N</span>
<span class="t " style="left:1822.5px;top:150.00px;font-size:22px;line-height:28px;color:#b4b4b4;font-weight:700;transform:scaleX(0.8859);">S</span>
<span class="t " style="left:1763px;top:93.00px;font-size:22px;line-height:28px;color:#b4b4b4;font-weight:700;transform:scaleX(0.9632);">W</span>
<span class="t " style="left:1879px;top:93.00px;font-size:22px;line-height:28px;color:#b4b4b4;font-weight:700;transform:scaleX(0.8859);">E</span>
<span class="t " style="left:1809.5px;top:195.00px;font-size:11.5px;line-height:14px;color:#444444;transform:scaleX(0.8759);">WCS</span>
</div>
<div id="bottombar" style="position:absolute;left:0px;top:1003px;width:1919px;height:25px;background:#3a3a3a;">
<div class="" style="position:absolute;left:0px;top:0px;width:1919px;height:1px;background:#5c5c5c;"></div>
<svg width="0" height="0" style="position:absolute"><defs><linearGradient id="gm" x1="0" y1="0" x2="0" y2="1"><stop offset="0" stop-color="#444"/><stop offset="1" stop-color="#7a7a7a"/></linearGradient><linearGradient id="gl" x1="0" y1="0" x2="0" y2="1"><stop offset="0" stop-color="#3e3e3e"/><stop offset="1" stop-color="#565656"/></linearGradient></defs></svg>
<div class="" style="position:absolute;left:672px;top:1px;width:1247px;height:24px;background:#4a4a4a;"></div>
<div class="" style="position:absolute;left:672px;top:1px;width:2px;height:24px;background:#383838;border-left:1px solid #2f2f2f;box-sizing:border-box;"></div>
<div class="" style="position:absolute;left:854.5px;top:1px;width:2px;height:24px;background:#383838;border-left:1px solid #2f2f2f;box-sizing:border-box;"></div>
<div class="" style="position:absolute;left:904px;top:1px;width:2px;height:24px;background:#383838;border-left:1px solid #2f2f2f;box-sizing:border-box;"></div>
<div class="" style="position:absolute;left:970px;top:1px;width:2px;height:24px;background:#383838;border-left:1px solid #2f2f2f;box-sizing:border-box;"></div>
<div class="" style="position:absolute;left:996.5px;top:1px;width:2px;height:24px;background:#383838;border-left:1px solid #2f2f2f;box-sizing:border-box;"></div>
<div class="" style="position:absolute;left:1021.5px;top:1px;width:2px;height:24px;background:#383838;border-left:1px solid #2f2f2f;box-sizing:border-box;"></div>
<div class="" style="position:absolute;left:1124px;top:1px;width:2px;height:24px;background:#383838;border-left:1px solid #2f2f2f;box-sizing:border-box;"></div>
<div class="" style="position:absolute;left:1188.5px;top:1px;width:2px;height:24px;background:#383838;border-left:1px solid #2f2f2f;box-sizing:border-box;"></div>
<div class="" style="position:absolute;left:1238px;top:1px;width:2px;height:24px;background:#383838;border-left:1px solid #2f2f2f;box-sizing:border-box;"></div>
<div class="" style="position:absolute;left:1263px;top:1px;width:2px;height:24px;background:#383838;border-left:1px solid #2f2f2f;box-sizing:border-box;"></div>
<div class="" style="position:absolute;left:1303.5px;top:1px;width:2px;height:24px;background:#383838;border-left:1px solid #2f2f2f;box-sizing:border-box;"></div>
<div class="" style="position:absolute;left:1409px;top:1px;width:2px;height:24px;background:#383838;border-left:1px solid #2f2f2f;box-sizing:border-box;"></div>
<div class="" style="position:absolute;left:1557.5px;top:1px;width:2px;height:24px;background:#383838;border-left:1px solid #2f2f2f;box-sizing:border-box;"></div>
<div class="" style="position:absolute;left:1598.5px;top:1px;width:2px;height:24px;background:#383838;border-left:1px solid #2f2f2f;box-sizing:border-box;"></div>
<div class="" style="position:absolute;left:1624.5px;top:1px;width:2px;height:24px;background:#383838;border-left:1px solid #2f2f2f;box-sizing:border-box;"></div>
<div class="" style="position:absolute;left:1724px;top:1px;width:2px;height:24px;background:#383838;border-left:1px solid #2f2f2f;box-sizing:border-box;"></div>
<div class="" style="position:absolute;left:1749px;top:1px;width:2px;height:24px;background:#383838;border-left:1px solid #2f2f2f;box-sizing:border-box;"></div>
<div class="" style="position:absolute;left:1790.5px;top:1px;width:2px;height:24px;background:#383838;border-left:1px solid #2f2f2f;box-sizing:border-box;"></div>
<div class="" style="position:absolute;left:1816.5px;top:1px;width:2px;height:24px;background:#383838;border-left:1px solid #2f2f2f;box-sizing:border-box;"></div>
<div class="" style="position:absolute;left:1842.5px;top:1px;width:2px;height:24px;background:#383838;border-left:1px solid #2f2f2f;box-sizing:border-box;"></div>
<div class="" style="position:absolute;left:1868.5px;top:1px;width:2px;height:24px;background:#383838;border-left:1px solid #2f2f2f;box-sizing:border-box;"></div>
<div class="" style="position:absolute;left:998px;top:3px;width:22px;height:22px;background:#5b8cc0;"></div>
<div class="" style="position:absolute;left:1126px;top:3px;width:22px;height:22px;background:#5b8cc0;"></div>
<div class="" style="position:absolute;left:1150px;top:3px;width:22px;height:22px;background:#5b8cc0;"></div>
<div class="" style="position:absolute;left:1190px;top:3px;width:22px;height:22px;background:#5b8cc0;"></div>
<div class="" style="position:absolute;left:1214.5px;top:3px;width:22.5px;height:22px;background:#5b8cc0;"></div>
<div class="" style="position:absolute;left:1307px;top:3px;width:22px;height:22px;background:#5b8cc0;"></div>
<div class="" style="position:absolute;left:1370px;top:3px;width:22px;height:22px;background:#5b8cc0;"></div>
<div class="" style="position:absolute;left:1412px;top:3px;width:22px;height:22px;background:#5b8cc0;"></div>
<div class="" style="position:absolute;left:1819px;top:3px;width:22px;height:22px;background:#5b8cc0;"></div>
<svg width="1919" height="25" viewBox="0 1003 1919 25" style="position:absolute;left:0;top:0;overflow:visible">
<path d="M68 1004 C76 1004 74 1020.5 82 1020.5 H127 C135 1020.5 133 1004 141 1004 Z" fill="url(#gl)" stroke="#2a2a2a" stroke-width="0.6"/>
<path d="M133 1004 C141 1004 139 1020.5 147 1020.5 H192 C200 1020.5 198 1004 206 1004 Z" fill="url(#gl)" stroke="#2a2a2a" stroke-width="0.6"/>
<path d="M8 1004 C16 1004 14 1020.5 22 1020.5 H62 C70 1020.5 68 1004 76 1004 Z" fill="url(#gm)" stroke="#2a2a2a" stroke-width="0.6"/>
<path d="M209 1004 H228 C224 1004 226 1019.5 216 1019.5 H204 C208 1016 205 1004 212 1004Z" fill="#4c4c4c"/><path d="M210.500 1011.500h8M214.500 1007.500v8" stroke="#dcdcdc" stroke-width="1.800"/>
<path d="M957.5 1015.5h7l-3.500 3.500z" fill="#f0f0f0"/>
<path d="M1073.5 1015.5h7l-3.500 3.500z" fill="#f0f0f0"/>
<path d="M1112.5 1015.5h7l-3.500 3.500z" fill="#f0f0f0"/>
<path d="M1176.5 1015.5h7l-3.500 3.500z" fill="#f0f0f0"/>
<path d="M1292.0 1015.5h7l-3.500 3.500z" fill="#f0f0f0"/>
<path d="M1357.5 1015.5h7l-3.500 3.500z" fill="#f0f0f0"/>
<path d="M1397.0 1015.5h7l-3.500 3.500z" fill="#f0f0f0"/>
<path d="M1545.0 1015.5h7l-3.500 3.500z" fill="#f0f0f0"/>
<path d="M1587.0 1015.5h7l-3.500 3.500z" fill="#f0f0f0"/>
<path d="M1711.5 1015.5h7l-3.500 3.500z" fill="#f0f0f0"/>
<path d="M1779.0 1015.5h7l-3.500 3.500z" fill="#f0f0f0"/>
<path d="M910.500 1013.500h14M910.500 1019.500h14M914.500 1009.500v14M920.500 1009.500v14" stroke="#f0f0f0" stroke-width="1.100"/>
<rect x="935.5" y="1010.5" width="2" height="2" fill="#f0f0f0"/>
<rect x="935.5" y="1015.5" width="2" height="2" fill="#f0f0f0"/>
<rect x="935.5" y="1020.5" width="2" height="2" fill="#f0f0f0"/>
<rect x="940.5" y="1010.5" width="2" height="2" fill="#f0f0f0"/>
<rect x="940.5" y="1015.5" width="2" height="2" fill="#f0f0f0"/>
<rect x="940.5" y="1020.5" width="2" height="2" fill="#f0f0f0"/>
<rect x="945.5" y="1010.5" width="2" height="2" fill="#f0f0f0"/>
<rect x="945.5" y="1015.5" width="2" height="2" fill="#f0f0f0"/>
<rect x="945.5" y="1020.5" width="2" height="2" fill="#f0f0f0"/>
<path d="M980.500 1020v-10h9v5h-9" stroke="#f0f0f0" stroke-width="1.100" fill="none"/><rect x="976" y="1019.500" width="6.500" height="5" fill="#d8d8d8"/>
<path d="M1001.500 1014.500h6M1004.500 1011.500v6" stroke="#fff" stroke-width="1.200"/><rect x="1007" y="1019" width="10" height="4.500" fill="#fff"/>
<path d="M1027.500 1010v14.500h14M1027.500 1020.500h4v4" stroke="#f0f0f0" stroke-width="1.100" fill="none"/>
<circle cx="1056.500" cy="1017" r="6" stroke="#f0f0f0" stroke-width="1.100" fill="none"/><path d="M1056.500 1017h9.500M1056.500 1017l7.500-7" stroke="#f0f0f0" stroke-width="1.100"/>
<path d="M1096.500 1009v15" stroke="#7fd8a0" stroke-width="1.100"/><path d="M1090 1010.500l13 13" stroke="#e8484f" stroke-width="1.100"/><circle cx="1096.500" cy="1016.500" r="1.500" fill="#4a4a4a" stroke="#f0f0f0" stroke-width="0.900"/>
<path d="M1129.500 1022.500h15M1130.500 1022l12-11" stroke="#fff" stroke-width="1.200"/><rect x="1134" y="1015" width="3" height="3" fill="#fff"/>
<rect x="1156.500" y="1012.500" width="11" height="11" stroke="#fff" stroke-width="1.200" fill="none"/><rect x="1153.500" y="1009.500" width="4" height="4" fill="#5b8cc0" stroke="#fff" stroke-width="1"/>
<path d="M1193 1011h15M1193 1015.500h9" stroke="#fff" stroke-width="1.400"/><path d="M1193 1020.500h15" stroke="#fff" stroke-width="3.200"/><path d="M1193 1016.200h9" stroke="#fff" stroke-width="2.200"/>
<rect x="1218.500" y="1009.500" width="15" height="15" stroke="#fff" stroke-width="1.200" fill="none"/>
<rect x="1220" y="1011" width="3" height="3" fill="#fff"/>
<rect x="1220" y="1017" width="3" height="3" fill="#fff"/>
<rect x="1223" y="1014" width="3" height="3" fill="#fff"/>
<rect x="1223" y="1020" width="3" height="3" fill="#fff"/>
<rect x="1226" y="1011" width="3" height="3" fill="#fff"/>
<rect x="1226" y="1017" width="3" height="3" fill="#fff"/>
<rect x="1229" y="1014" width="3" height="3" fill="#fff"/>
<rect x="1229" y="1020" width="3" height="3" fill="#fff"/>
<path d="M1243.500 1013.500h5M1246 1011v5" stroke="#f0f0f0" stroke-width="1"/><path d="M1248.500 1012.500h7v3" stroke="#f0f0f0" stroke-width="1" fill="none"/><rect x="1249.500" y="1015.500" width="9" height="9" fill="#5fc4b0" stroke="#bfeee0" stroke-width="0.600"/>
<path d="M1270.500 1014.500l3-4.500h10v9l-3 4.500h-10zM1270.500 1014.500h10v9M1280.500 1014.500l3-4.500" stroke="#f0f0f0" stroke-width="1" fill="none"/><rect x="1268.500" y="1020.500" width="4" height="4" fill="#4a4a4a" stroke="#f5c469" stroke-width="1.100"/>
<path d="M1312.500 1010v12.500h12.500" stroke="#fff" stroke-width="1.300" fill="none"/><path d="M1312.500 1009l-2.500 3.500h5zM1326.500 1022.500l-3.500-2.500v5z" fill="#fff"/><path d="M1320.500 1011l-3 4h2.500l-1.500 3 4-4.500h-2.500l2-2.500z" fill="#fff"/>
<path d="M1336.500 1014.500l2.500-3.500h9v8l-2.500 4M1336.500 1014.500h9v8.500h-9z" stroke="#f0f0f0" stroke-width="1" fill="none" stroke-dasharray="2.500 1.200"/>
<rect x="1335.0" y="1013.0" width="3" height="3" fill="#6cc0f5"/>
<rect x="1344.0" y="1013.0" width="3" height="3" fill="#6cc0f5"/>
<rect x="1335.0" y="1021.5" width="3" height="3" fill="#6cc0f5"/>
<rect x="1344.0" y="1021.5" width="3" height="3" fill="#6cc0f5"/>
<path d="M1381 1010.500l-6.500 11.500h13zM1381 1010.500v7.500l-6.500 4M1381 1018l6.500 4" stroke="#fff" stroke-width="1" fill="none"/><path d="M1375 1014l6-3.500 6 3.500v7.500l-6 3.500-6-3.500z" stroke="#fff" stroke-width="1" fill="none"/><circle cx="1381" cy="1010.500" r="1.400" fill="#fff"/><circle cx="1374.500" cy="1022" r="1.400" fill="#fff"/><circle cx="1387.500" cy="1022" r="1.400" fill="#fff"/>
<path d="M1421 1008.500l1.800 7.500 4.700 7.500-5-3-1.500 3.500-1.500-3.500-5 3 4.700-7.500z" fill="#fff"/>
<circle cx="1428" cy="1012.500" r="2" stroke="#fff" stroke-width="1" fill="none"/>
<path d="M1446 1008.500l1.800 7.500 4.700 7.500-5-3-1.500 3.500-1.500-3.500-5 3 4.700-7.500z" fill="#d4d4d4"/>
<path d="M1452.500 1008l-2.500 3.500h2l-1.500 3 3.500-4h-2l1.500-2.500z" fill="#e0e0e0"/>
<path d="M1471 1008.500l1.800 7.500 4.700 7.500-5-3-1.500 3.500-1.500-3.500-5 3 4.700-7.500z" fill="#d4d4d4"/>
<circle cx="1570" cy="1016.500" r="4.300" stroke="#dcdcdc" stroke-width="3.400" fill="none"/><circle cx="1570" cy="1016.500" r="7" stroke="#dcdcdc" stroke-width="2.200" stroke-dasharray="2.600 2.900" fill="none"/>
<path d="M1603.500 1017h16M1611.500 1009v16" stroke="#f0f0f0" stroke-width="1.300"/>
<rect x="1634" y="1008.500" width="8" height="16" fill="#d8d8d8"/><path d="M1634 1011.500h4M1634 1014.500h3M1634 1017.500h4M1634 1020.500h3" stroke="#4a4a4a" stroke-width="1"/>
<rect x="1730.500" y="1009.500" width="11" height="14.500" stroke="#f0f0f0" stroke-width="1.100" fill="none"/><path d="M1730.500 1012.500h11" stroke="#f0f0f0" stroke-width="1"/><path d="M1733 1015.500h1.500M1733 1018.500h1.500M1733 1021.500h1.500" stroke="#f0f0f0" stroke-width="1.300"/><path d="M1736 1015.500h4M1736 1018.500h4M1736 1021.500h4" stroke="#f0f0f0" stroke-width="1"/>
<path d="M1763 1021.500h-7.500v-11h13.500v5M1755.500 1012.500h13.500" stroke="#f0f0f0" stroke-width="1.100" fill="none"/><rect x="1762" y="1020" width="6.500" height="4.500" fill="#e0e0e0"/><path d="M1766.500 1020v-2a1.800 1.800 0 0 1 3.600 0v1" stroke="#e0e0e0" stroke-width="1" fill="none"/>
<rect x="1795.500" y="1009.500" width="5" height="5" stroke="#f0f0f0" stroke-width="1" fill="none"/><circle cx="1807.500" cy="1015" r="3" stroke="#f0f0f0" stroke-width="1" fill="none"/><path d="M1801.500 1018.500l3.200 5.500h-6.400z" stroke="#f0f0f0" stroke-width="1" fill="none"/>
<circle cx="1830" cy="1017" r="8" fill="#86a5c8" stroke="#e8eef6" stroke-width="1.300"/><path d="M1825 1021l9-8.500" stroke="#fff" stroke-width="2.200"/>
<rect x="1848.500" y="1009" width="9" height="8" fill="#6fb6ee"/><path d="M1848.500 1013h9M1853 1009v8" stroke="#dff0fb" stroke-width="0.800"/><rect x="1848.500" y="1017" width="7" height="6" fill="#f1c36b"/><path d="M1855 1021.500l2 2.500 4.500-5" stroke="#3fae5a" stroke-width="1.300" fill="none"/><path d="M1857.500 1009l3 3v5h-3z" fill="#e6e6e6"/>
<rect x="1874.500" y="1010.500" width="16" height="12" stroke="#f0f0f0" stroke-width="1.100" fill="none"/><path d="M1878 1020l3.500-3M1887 1013l-3.500 3" stroke="#f0f0f0" stroke-width="1"/><path d="M1877 1021v-3l3 3zM1888 1012v3l-3-3z" fill="#f0f0f0"/>
<path d="M1898.500 1011h16M1898.500 1016.500h16M1898.500 1022h16" stroke="#dedede" stroke-width="1.700"/>
</svg>
<span class="t " style="left:23px;top:2.00px;font-size:12px;line-height:15px;color:#ffffff;font-weight:700;transform:scaleX(1.0097);">Model</span>
<span class="t " style="left:81px;top:2.00px;font-size:12px;line-height:15px;color:#b7c2cf;transform:scaleX(0.9601);">Layout1</span>
<span class="t " style="left:146px;top:2.00px;font-size:12px;line-height:15px;color:#b7c2cf;transform:scaleX(0.9835);">Layout2</span>
<span class="t " style="left:697px;top:7.00px;font-size:12px;line-height:15px;color:#ffffff;transform:scaleX(1.0057);">475.5995, 153.4266, 0.0000</span>
<span class="t " style="left:859.5px;top:7.00px;font-size:12px;line-height:15px;color:#ffffff;transform:scaleX(0.9373);">MODEL</span>
<span class="t " style="left:1488px;top:7.00px;font-size:12px;line-height:15px;color:#ffffff;transform:scaleX(0.9063);">1:1 / 100%</span>
<span class="t " style="left:1655.5px;top:7.00px;font-size:12px;line-height:15px;color:#ffffff;transform:scaleX(1.0037);">Decimal</span>
</div>
</body></html>
